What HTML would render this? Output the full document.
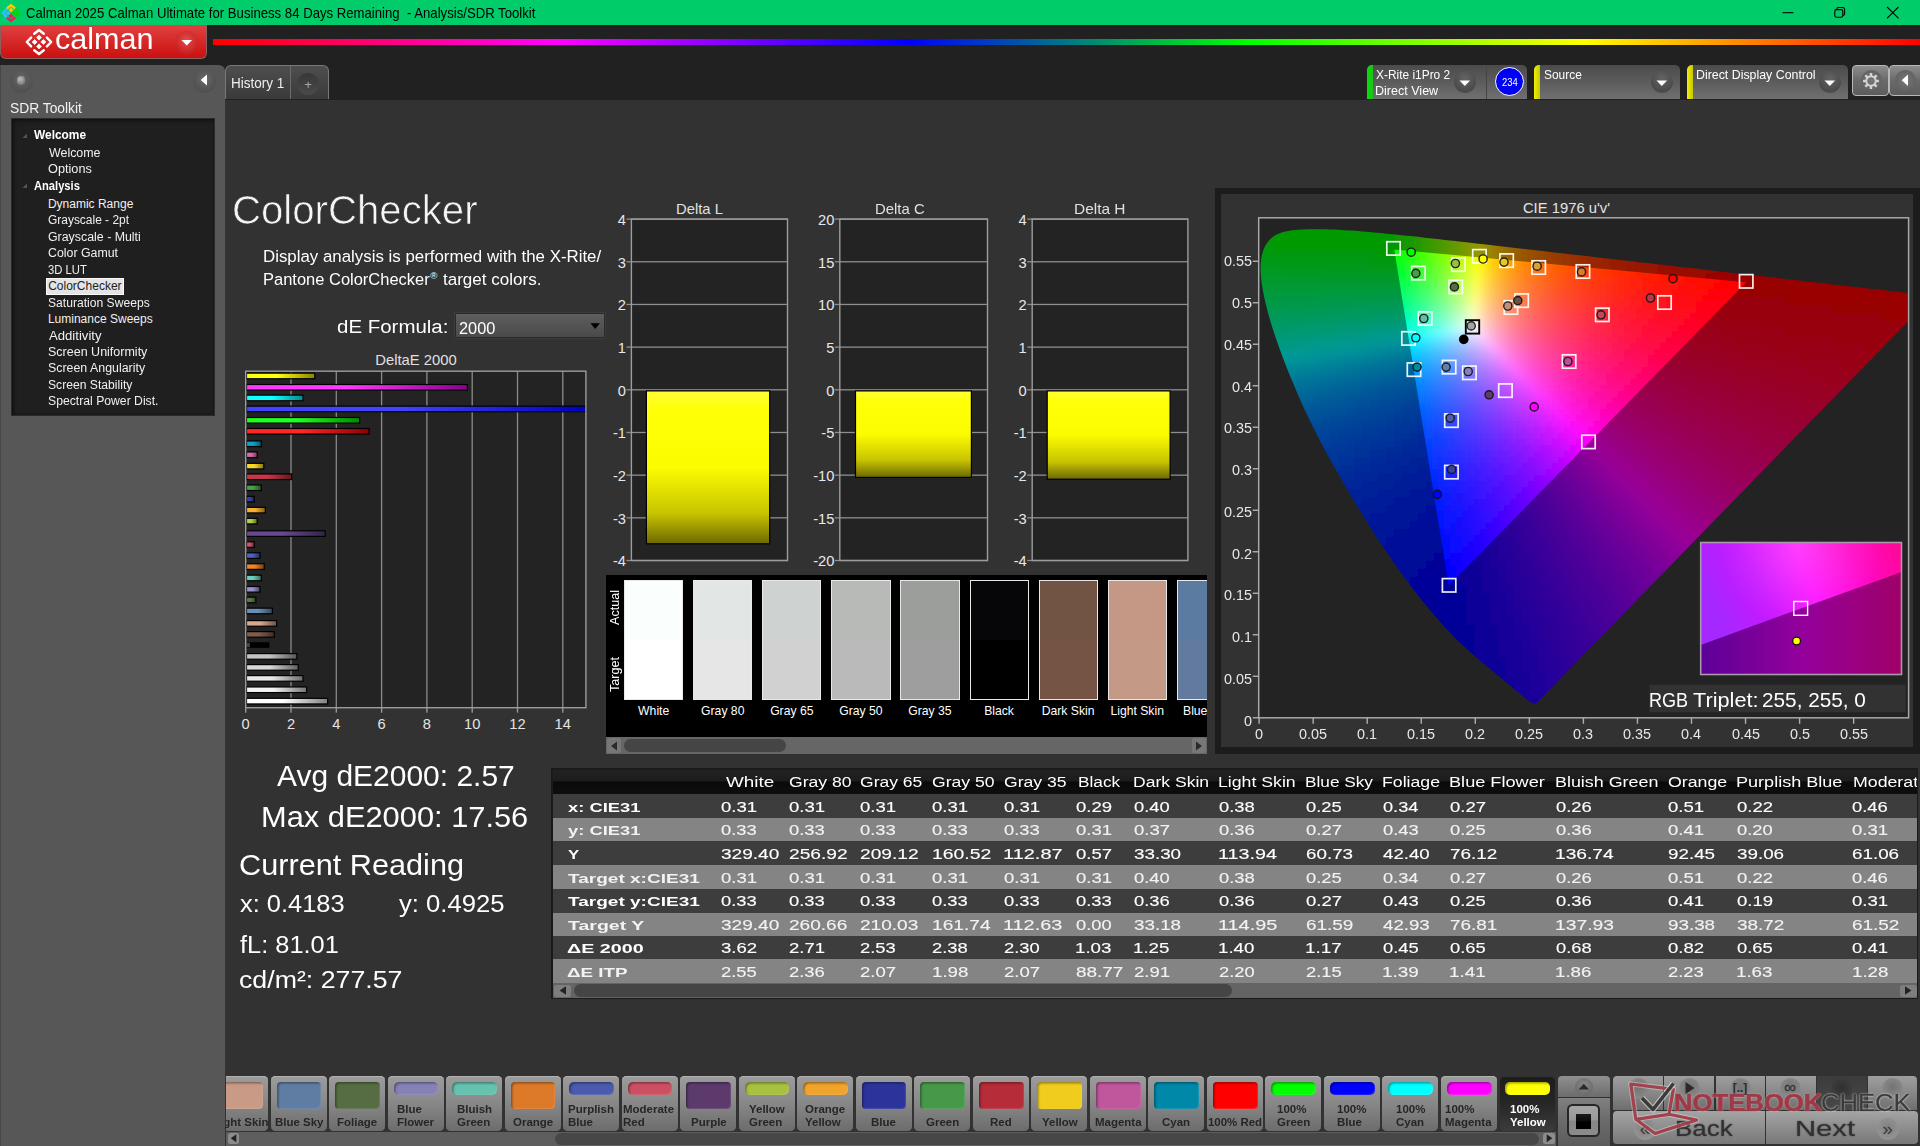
<!DOCTYPE html>
<html lang="en"><head><meta charset="utf-8"><title>Calman - ColorChecker</title>
<style>
*{margin:0;padding:0;box-sizing:border-box}
html,body{width:1920px;height:1146px;overflow:hidden;background:#222;font-family:"Liberation Sans",sans-serif;}
#root{position:absolute;left:0;top:0;width:1920px;height:1146px;overflow:hidden;background:#212121}
#root div,#root span.t,#root svg{position:absolute}
span.t{white-space:pre;transform-origin:0 50%;display:block}
</style></head>
<body><div id="root">
<div style="left:0.00px;top:0.00px;width:1920.00px;height:25.40px;background:#00cc6a"></div>
<svg style="left:0.5px;top:2.8px" width="20" height="20" viewBox="-10 -10 20 20"><g fill="none" stroke-width="2.5" stroke-linecap="round" stroke-linejoin="round"><path d="M-3.6 -4.9L0 -7.9L3.6 -4.9" stroke="#ffc800"/><path d="M-3.6 4.9L0 7.9L3.6 4.9" stroke="#ff1060"/><path d="M-4.9 -3.6L-7.9 0L-4.9 3.6" stroke="#30c0ff"/><path d="M4.9 -3.6L7.9 0L4.9 3.6" stroke="#00d800"/></g><path d="M0 -5.2L2.2 -3L0 -0.8L-2.2 -3Z" fill="#ffc800" stroke="#ffc800" stroke-width=".6" stroke-linejoin="round"/><path d="M0 5.2L2.2 3L0 0.8L-2.2 3Z" fill="#ff1060" stroke="#ff1060" stroke-width=".6" stroke-linejoin="round"/><path d="M-5.2 0L-3 -2.2L-0.8 0L-3 2.2Z" fill="#30c0ff" stroke="#30c0ff" stroke-width=".6" stroke-linejoin="round"/><path d="M5.2 0L3 -2.2L0.8 0L3 2.2Z" fill="#00d800" stroke="#00d800" stroke-width=".6" stroke-linejoin="round"/></svg>
<span class="t" style="left:25.55px;top:5.00px;font-size:14.60px;line-height:16.00px;color:#000;transform:scaleX(0.9015);">Calman 2025 Calman Ultimate for Business 84 Days Remaining  - Analysis/SDR Toolkit</span>
<svg style="left:1770px;top:0" width="150" height="25" viewBox="0 0 150 25" fill="none" stroke="#000" stroke-width="1.1"><path d="M12.5 12.7h11"/><rect x="64.8" y="9.6" width="8" height="7.6" rx="1.7"/><path d="M66.9 9.4v-0.3a1.6 1.6 0 0 1 1.6-1.6h4.3a1.8 1.8 0 0 1 1.8 1.8v4.4a1.6 1.6 0 0 1-1.6 1.6h-0.2"/><path d="M117 6.8l11.6 11.6M128.6 6.8L117 18.4"/></svg>
<div style="left:0.00px;top:25.00px;width:207.00px;height:34.00px;background:linear-gradient(#ee3640 0,#e03e3e 1.5px,#d62828 50%,#cc1010);border:1px solid #8a6060;border-top:none;border-radius:0 0 6px 6px"></div>
<svg style="left:23.6px;top:26.6px" width="30" height="30" viewBox="-15 -15 30 30"><g fill="none" stroke="#fff" stroke-width="2.4" stroke-linecap="round" stroke-linejoin="round"><path d="M-4.8 -8.2L0 -12L4.8 -8.2"/><path d="M-4.8 8.2L0 12L4.8 8.2"/><path d="M-7.9 -4.4L-12.2 0L-7.9 4.4"/><path d="M7.9 -4.4L12.2 0L7.9 4.4"/></g><g fill="#fff" stroke="#fff" stroke-width="0.8" stroke-linejoin="round"><path d="M0 -6.9L2.4 -4.4L0 -1.9L-2.4 -4.4Z"/><path d="M0 6.9L2.4 4.4L0 1.9L-2.4 4.4Z"/><path d="M-6.9 0L-4.4 -2.4L-1.9 0L-4.4 2.4Z"/><path d="M6.9 0L4.4 -2.4L1.9 0L4.4 2.4Z"/></g></svg>
<span class="t" style="left:55.00px;top:22.00px;font-size:29.40px;line-height:33.00px;color:#fff;transform:scaleX(1.0405);">calman</span>
<div style="left:175.00px;top:30.50px;width:23.00px;height:23.00px;border-radius:50%;background:radial-gradient(circle at 50% 40%,#e64a4a,#c82020 75%)"></div>
<svg style="left:180px;top:39px" width="14" height="8"><path d="M1.5 1h10.5l-5.25 5.6z" fill="#fff"/></svg>
<div style="left:213.00px;top:39.00px;width:1707.00px;height:6.00px;background:linear-gradient(90deg,#ff0000 0%,#ff00ff 20.2%,#0000ff 40.7%,#00ff00 60.6%,#ffff00 80.3%,#ff0000 100%)"></div>
<div style="left:225.00px;top:64.80px;width:104.00px;height:33.80px;background:linear-gradient(#4e4e4e,#444 50%,#3a3a3a);border:1.2px solid #787878;border-bottom:none;border-radius:6px 6px 0 0"></div>
<div style="left:289.90px;top:66.00px;width:1.20px;height:32.50px;background:#6c6c6c"></div>
<span class="t" style="left:231.07px;top:75.00px;font-size:14.60px;line-height:16.00px;color:#eee;transform:scaleX(0.9263);">History 1</span>
<div style="left:297.20px;top:73.20px;width:22.00px;height:22.00px;border-radius:50%;background:linear-gradient(#383838,#4a4a4a)"></div>
<span class="t" style="left:304.55px;top:78.00px;font-size:12.50px;line-height:14.00px;color:#a8a8a8;">+</span>
<div style="left:225.00px;top:99.70px;width:1695.00px;height:1046.30px;background:#323232"></div>
<div style="left:1367.00px;top:65.00px;width:160.00px;height:34.00px;background:linear-gradient(#4b4b4b,#5c5c5c 50%,#707070);border-radius:5px 5px 0 0;overflow:hidden"><div style="left:0.00px;top:0.00px;width:6.00px;height:34.00px;background:linear-gradient(90deg,#00e000,#20c020)"></div></div>
<span class="t" style="left:1376.26px;top:68.00px;font-size:12.20px;line-height:14.00px;color:#fff;transform:scaleX(0.9775);">X-Rite i1Pro 2</span>
<span class="t" style="left:1375.48px;top:84.00px;font-size:12.20px;line-height:14.00px;color:#fff;transform:scaleX(1.0288);">Direct View</span>
<div style="left:1454.00px;top:70.70px;width:22.00px;height:22.00px;border-radius:50%;background:radial-gradient(circle at 50% 35%,#646464,#4a4a4a 70%,#585858)"></div>
<svg style="left:1459.2px;top:80.3px" width="12" height="7"><path d="M0.5 0.5h10.6l-5.3 5.6z" fill="#fff"/></svg>
<div style="left:1486.00px;top:68.00px;width:1.00px;height:31.00px;background:#444"></div>
<div style="left:1495.20px;top:66.90px;width:29.00px;height:29.00px;border-radius:50%;background:#0000f4;border:1.3px solid #fff"></div>
<span class="t" style="left:1501.90px;top:77.00px;font-size:10.30px;line-height:11.00px;color:#fff;transform:scaleX(0.9200);">234</span>
<div style="left:1534.00px;top:65.00px;width:146.00px;height:34.00px;background:linear-gradient(#4b4b4b,#5c5c5c 50%,#707070);border-radius:5px 5px 0 0;overflow:hidden"><div style="left:0.00px;top:0.00px;width:6.00px;height:34.00px;background:linear-gradient(90deg,#f0f000,#c8c800)"></div></div>
<span class="t" style="left:1543.51px;top:68.00px;font-size:12.20px;line-height:14.00px;color:#fff;transform:scaleX(0.9777);">Source</span>
<div style="left:1650.70px;top:70.70px;width:22.00px;height:22.00px;border-radius:50%;background:radial-gradient(circle at 50% 35%,#646464,#4a4a4a 70%,#585858)"></div>
<svg style="left:1655.9px;top:80.3px" width="12" height="7"><path d="M0.5 0.5h10.6l-5.3 5.6z" fill="#fff"/></svg>
<div style="left:1687.00px;top:65.00px;width:161.00px;height:34.00px;background:linear-gradient(#4b4b4b,#5c5c5c 50%,#707070);border-radius:5px 5px 0 0;overflow:hidden"><div style="left:0.00px;top:0.00px;width:6.00px;height:34.00px;background:linear-gradient(90deg,#f0f000,#c8c800)"></div></div>
<span class="t" style="left:1696.29px;top:68.00px;font-size:12.20px;line-height:14.00px;color:#fff;transform:scaleX(1.0148);">Direct Display Control</span>
<div style="left:1819.00px;top:70.70px;width:22.00px;height:22.00px;border-radius:50%;background:radial-gradient(circle at 50% 35%,#646464,#4a4a4a 70%,#585858)"></div>
<svg style="left:1824.2px;top:80.3px" width="12" height="7"><path d="M0.5 0.5h10.6l-5.3 5.6z" fill="#fff"/></svg>
<div style="left:1852.00px;top:65.00px;width:37.00px;height:31.00px;background:linear-gradient(#8c8c8c,#6a6a6a 50%,#5c5c5c);border:1px solid #b8b8b8;border-radius:4px"></div>
<div style="left:1889.00px;top:65.00px;width:37.00px;height:31.00px;background:linear-gradient(#8c8c8c,#6a6a6a 50%,#5c5c5c);border:1px solid #b8b8b8;border-radius:4px"></div>
<div style="left:1860.50px;top:70.00px;width:21.00px;height:21.00px;border-radius:50%;background:radial-gradient(circle,#777,#5a5a5a)"></div>
<svg style="left:1861px;top:70.5px" width="20" height="20" viewBox="-10 -10 20 20"><g fill="#d4d4d4"><rect x="-1.25" y="-8" width="2.5" height="3" rx="0.5" transform="rotate(0)"/><rect x="-1.25" y="-8" width="2.5" height="3" rx="0.5" transform="rotate(45)"/><rect x="-1.25" y="-8" width="2.5" height="3" rx="0.5" transform="rotate(90)"/><rect x="-1.25" y="-8" width="2.5" height="3" rx="0.5" transform="rotate(135)"/><rect x="-1.25" y="-8" width="2.5" height="3" rx="0.5" transform="rotate(180)"/><rect x="-1.25" y="-8" width="2.5" height="3" rx="0.5" transform="rotate(225)"/><rect x="-1.25" y="-8" width="2.5" height="3" rx="0.5" transform="rotate(270)"/><rect x="-1.25" y="-8" width="2.5" height="3" rx="0.5" transform="rotate(315)"/></g><circle r="4.7" fill="none" stroke="#d4d4d4" stroke-width="1.9"/></svg>
<div style="left:1895.00px;top:70.00px;width:21.00px;height:21.00px;border-radius:50%;background:radial-gradient(circle,#777,#5a5a5a)"></div>
<svg style="left:1901px;top:74px" width="8" height="13"><path d="M7 0.5v11.5l-6.3-5.75z" fill="#fff"/></svg>
<div style="left:0.00px;top:65.00px;width:224.50px;height:1081.00px;background:#575757;border-radius:0 6px 0 0;border-left:1.5px solid #474747"></div>
<div style="left:10.00px;top:70.00px;width:23.00px;height:23.00px;border-radius:50%;background:radial-gradient(circle at 50% 40%,#666,#505050 70%,#575757)"></div>
<div style="left:16.50px;top:76.00px;width:8.50px;height:8.50px;border-radius:50%;background:radial-gradient(circle at 40% 35%,#bbb,#888 60%,#666)"></div>
<div style="left:193.00px;top:70.00px;width:23.00px;height:23.00px;border-radius:50%;background:radial-gradient(circle at 50% 40%,#686868,#505050 70%,#575757)"></div>
<svg style="left:200px;top:74px" width="8" height="13"><path d="M7 0.5v11l-6.3-5.5z" fill="#fff"/></svg>
<span class="t" style="left:9.82px;top:100.00px;font-size:14.60px;line-height:16.00px;color:#f2f2f2;transform:scaleX(0.9468);">SDR Toolkit</span>
<div style="left:10.70px;top:118.00px;width:204.30px;height:298.00px;background:#1f1f1f;box-shadow:inset 2px 2px 3px #111, inset -1px -1px 2px #1a1a1a;border:1px solid #2a2a2a"></div>
<span class="t" style="left:34.20px;top:128.00px;font-size:12.00px;line-height:14.00px;color:#fff;font-weight:bold;transform:scaleX(0.9914);">Welcome</span>
<svg style="left:21.5px;top:132.5px" width="6" height="6"><path d="M5 0.5v4.5h-4.5z" fill="#555"/></svg>
<span class="t" style="left:48.70px;top:146.00px;font-size:12.00px;line-height:14.00px;color:#f0f0f0;transform:scaleX(1.0343);">Welcome</span>
<span class="t" style="left:48.17px;top:162.00px;font-size:12.00px;line-height:14.00px;color:#f0f0f0;transform:scaleX(1.0593);">Options</span>
<span class="t" style="left:33.97px;top:179.00px;font-size:12.00px;line-height:14.00px;color:#fff;font-weight:bold;transform:scaleX(0.9292);">Analysis</span>
<svg style="left:21.5px;top:183.3px" width="6" height="6"><path d="M5 0.5v4.5h-4.5z" fill="#555"/></svg>
<span class="t" style="left:47.95px;top:197.00px;font-size:12.00px;line-height:14.00px;color:#f0f0f0;">Dynamic Range</span>
<span class="t" style="left:48.20px;top:213.00px;font-size:12.00px;line-height:14.00px;color:#f0f0f0;transform:scaleX(0.9957);">Grayscale - 2pt</span>
<span class="t" style="left:48.18px;top:230.00px;font-size:12.00px;line-height:14.00px;color:#f0f0f0;transform:scaleX(1.0310);">Grayscale - Multi</span>
<span class="t" style="left:48.19px;top:246.00px;font-size:12.00px;line-height:14.00px;color:#f0f0f0;transform:scaleX(1.0296);">Color Gamut</span>
<span class="t" style="left:48.47px;top:263.00px;font-size:12.00px;line-height:14.00px;color:#f0f0f0;transform:scaleX(0.9390);">3D LUT</span>
<div style="left:46.30px;top:278.10px;width:77.70px;height:16.60px;background:#e4e4e4;border:1px solid #fafafa"></div>
<span class="t" style="left:48.20px;top:279.00px;font-size:12.00px;line-height:14.00px;color:#222;">ColorChecker</span>
<span class="t" style="left:48.20px;top:296.00px;font-size:12.00px;line-height:14.00px;color:#f0f0f0;transform:scaleX(1.0100);">Saturation Sweeps</span>
<span class="t" style="left:47.95px;top:312.00px;font-size:12.00px;line-height:14.00px;color:#f0f0f0;">Luminance Sweeps</span>
<span class="t" style="left:48.70px;top:329.00px;font-size:12.00px;line-height:14.00px;color:#f0f0f0;transform:scaleX(1.0938);">Additivity</span>
<span class="t" style="left:48.18px;top:345.00px;font-size:12.00px;line-height:14.00px;color:#f0f0f0;transform:scaleX(1.0421);">Screen Uniformity</span>
<span class="t" style="left:48.18px;top:361.00px;font-size:12.00px;line-height:14.00px;color:#f0f0f0;transform:scaleX(1.0321);">Screen Angularity</span>
<span class="t" style="left:48.19px;top:378.00px;font-size:12.00px;line-height:14.00px;color:#f0f0f0;transform:scaleX(1.0120);">Screen Stability</span>
<span class="t" style="left:48.19px;top:394.00px;font-size:12.00px;line-height:14.00px;color:#f0f0f0;transform:scaleX(1.0163);">Spectral Power Dist.</span>
<span class="t" style="left:232.42px;top:187.00px;font-size:40.50px;line-height:46.00px;color:#f6f6f6;transform:scaleX(0.9918);-webkit-text-stroke:0.7px #323232;">ColorChecker</span>
<span class="t" style="left:262.90px;top:247.00px;font-size:16.30px;line-height:18.00px;color:#fff;transform:scaleX(1.0353);">Display analysis is performed with the X-Rite/</span>
<span class="t" style="left:262.93px;top:270.00px;font-size:16.30px;line-height:18.00px;color:#fff;transform:scaleX(1.0122);">Pantone ColorChecker</span>
<span class="t" style="left:430.20px;top:270.00px;font-size:9.60px;line-height:11.00px;color:#fff;">®</span>
<span class="t" style="left:443.30px;top:270.00px;font-size:16.30px;line-height:18.00px;color:#fff;transform:scaleX(1.0458);">target colors.</span>
<span class="t" style="left:336.70px;top:316.00px;font-size:19.20px;line-height:21.00px;color:#fff;transform:scaleX(1.0662);">dE Formula:</span>
<div style="left:455.20px;top:313.30px;width:150.00px;height:24.70px;background:linear-gradient(#5e5e5e,#4a4a4a);border:1px solid #2a2a2a;box-shadow:0 0 0 1px #3c3c3c"></div>
<span class="t" style="left:459.26px;top:319.00px;font-size:16.60px;line-height:19.00px;color:#fff;transform:scaleX(0.9856);">2000</span>
<svg style="left:590px;top:323px" width="11" height="7"><path d="M0.5 0.3h9.4l-4.7 5.6z" fill="#000"/></svg>
<span class="t" style="left:375.28px;top:352.00px;font-size:14.80px;line-height:16.00px;color:#e0e0e0;">DeltaE 2000</span>
<svg style="left:0;top:0" width="1920" height="1146" viewBox="0 0 1920 1146"><defs><linearGradient id="bg0"><stop offset="0" stop-color="#ffff10"/><stop offset="0.45" stop-color="#ffff10"/><stop offset="1" stop-color="#8a8400"/></linearGradient><linearGradient id="bg1"><stop offset="0" stop-color="#ff38ff"/><stop offset="0.45" stop-color="#ff38ff"/><stop offset="1" stop-color="#8c008c"/></linearGradient><linearGradient id="bg2"><stop offset="0" stop-color="#10ffff"/><stop offset="0.45" stop-color="#10ffff"/><stop offset="1" stop-color="#008c8c"/></linearGradient><linearGradient id="bg3"><stop offset="0" stop-color="#4444ff"/><stop offset="0.45" stop-color="#4444ff"/><stop offset="1" stop-color="#0000c0"/></linearGradient><linearGradient id="bg4"><stop offset="0" stop-color="#20ff20"/><stop offset="0.45" stop-color="#20ff20"/><stop offset="1" stop-color="#008c00"/></linearGradient><linearGradient id="bg5"><stop offset="0" stop-color="#ff2828"/><stop offset="0.45" stop-color="#ff2828"/><stop offset="1" stop-color="#8c0000"/></linearGradient><linearGradient id="bg6"><stop offset="0" stop-color="#10a0c8"/><stop offset="0.45" stop-color="#10a0c8"/><stop offset="1" stop-color="#005870"/></linearGradient><linearGradient id="bg7"><stop offset="0" stop-color="#d868b0"/><stop offset="0.45" stop-color="#d868b0"/><stop offset="1" stop-color="#783860"/></linearGradient><linearGradient id="bg8"><stop offset="0" stop-color="#f8d828"/><stop offset="0.45" stop-color="#f8d828"/><stop offset="1" stop-color="#887410"/></linearGradient><linearGradient id="bg9"><stop offset="0" stop-color="#c83848"/><stop offset="0.45" stop-color="#c83848"/><stop offset="1" stop-color="#681820"/></linearGradient><linearGradient id="bg10"><stop offset="0" stop-color="#48a048"/><stop offset="0.45" stop-color="#48a048"/><stop offset="1" stop-color="#245024"/></linearGradient><linearGradient id="bg11"><stop offset="0" stop-color="#3840a8"/><stop offset="0.45" stop-color="#3840a8"/><stop offset="1" stop-color="#1c2058"/></linearGradient><linearGradient id="bg12"><stop offset="0" stop-color="#f8b030"/><stop offset="0.45" stop-color="#f8b030"/><stop offset="1" stop-color="#885c10"/></linearGradient><linearGradient id="bg13"><stop offset="0" stop-color="#b0d048"/><stop offset="0.45" stop-color="#b0d048"/><stop offset="1" stop-color="#586820"/></linearGradient><linearGradient id="bg14"><stop offset="0" stop-color="#684890"/><stop offset="0.45" stop-color="#684890"/><stop offset="1" stop-color="#342448"/></linearGradient><linearGradient id="bg15"><stop offset="0" stop-color="#d05068"/><stop offset="0.45" stop-color="#d05068"/><stop offset="1" stop-color="#682834"/></linearGradient><linearGradient id="bg16"><stop offset="0" stop-color="#5060c0"/><stop offset="0.45" stop-color="#5060c0"/><stop offset="1" stop-color="#283060"/></linearGradient><linearGradient id="bg17"><stop offset="0" stop-color="#f08428"/><stop offset="0.45" stop-color="#f08428"/><stop offset="1" stop-color="#784010"/></linearGradient><linearGradient id="bg18"><stop offset="0" stop-color="#68d0b8"/><stop offset="0.45" stop-color="#68d0b8"/><stop offset="1" stop-color="#34685c"/></linearGradient><linearGradient id="bg19"><stop offset="0" stop-color="#9890d0"/><stop offset="0.45" stop-color="#9890d0"/><stop offset="1" stop-color="#4c4868"/></linearGradient><linearGradient id="bg20"><stop offset="0" stop-color="#607848"/><stop offset="0.45" stop-color="#607848"/><stop offset="1" stop-color="#303c24"/></linearGradient><linearGradient id="bg21"><stop offset="0" stop-color="#6890b8"/><stop offset="0.45" stop-color="#6890b8"/><stop offset="1" stop-color="#34485c"/></linearGradient><linearGradient id="bg22"><stop offset="0" stop-color="#d8a890"/><stop offset="0.45" stop-color="#d8a890"/><stop offset="1" stop-color="#6c5448"/></linearGradient><linearGradient id="bg23"><stop offset="0" stop-color="#805c4c"/><stop offset="0.45" stop-color="#805c4c"/><stop offset="1" stop-color="#402e26"/></linearGradient><linearGradient id="bg24"><stop offset="0" stop-color="#383838"/><stop offset="0.45" stop-color="#383838"/><stop offset="1" stop-color="#000000"/></linearGradient><linearGradient id="bg25"><stop offset="0" stop-color="#c4c4c4"/><stop offset="0.45" stop-color="#c4c4c4"/><stop offset="1" stop-color="#585858"/></linearGradient><linearGradient id="bg26"><stop offset="0" stop-color="#d8d8d8"/><stop offset="0.45" stop-color="#d8d8d8"/><stop offset="1" stop-color="#606060"/></linearGradient><linearGradient id="bg27"><stop offset="0" stop-color="#e8e8e8"/><stop offset="0.45" stop-color="#e8e8e8"/><stop offset="1" stop-color="#6c6c6c"/></linearGradient><linearGradient id="bg28"><stop offset="0" stop-color="#f4f4f4"/><stop offset="0.45" stop-color="#f4f4f4"/><stop offset="1" stop-color="#747474"/></linearGradient><linearGradient id="bg29"><stop offset="0" stop-color="#ffffff"/><stop offset="0.45" stop-color="#ffffff"/><stop offset="1" stop-color="#808080"/></linearGradient></defs><rect x="245.7" y="371.2" width="340.2" height="336.5" fill="#232323"/><rect x="290.35" y="371.2" width="1.3" height="336.5" fill="#8a8a8a"/><rect x="335.65" y="371.2" width="1.3" height="336.5" fill="#8a8a8a"/><rect x="380.95" y="371.2" width="1.3" height="336.5" fill="#8a8a8a"/><rect x="426.25" y="371.2" width="1.3" height="336.5" fill="#8a8a8a"/><rect x="471.55" y="371.2" width="1.3" height="336.5" fill="#8a8a8a"/><rect x="516.85" y="371.2" width="1.3" height="336.5" fill="#8a8a8a"/><rect x="562.15" y="371.2" width="1.3" height="336.5" fill="#8a8a8a"/><rect x="246.50" y="373.13" width="68.26" height="5.6" fill="url(#bg0)" stroke="#000" stroke-width="1.2"/><rect x="246.50" y="384.50" width="220.92" height="5.6" fill="url(#bg1)" stroke="#000" stroke-width="1.2"/><rect x="246.50" y="395.13" width="56.48" height="5.6" fill="url(#bg2)" stroke="#000" stroke-width="1.2"/><rect x="246.50" y="406.13" width="339.15" height="5.6" fill="url(#bg3)" stroke="#000" stroke-width="1.2"/><rect x="246.50" y="417.49" width="113.10" height="5.6" fill="url(#bg4)" stroke="#000" stroke-width="1.2"/><rect x="246.50" y="428.49" width="122.62" height="5.6" fill="url(#bg5)" stroke="#000" stroke-width="1.2"/><rect x="246.50" y="440.96" width="14.80" height="5.6" fill="url(#bg6)" stroke="#000" stroke-width="1.2"/><rect x="246.50" y="451.96" width="10.72" height="5.6" fill="url(#bg7)" stroke="#000" stroke-width="1.2"/><rect x="246.50" y="463.32" width="17.29" height="5.6" fill="url(#bg8)" stroke="#000" stroke-width="1.2"/><rect x="246.50" y="473.96" width="45.15" height="5.6" fill="url(#bg9)" stroke="#000" stroke-width="1.2"/><rect x="246.50" y="484.95" width="14.80" height="5.6" fill="url(#bg10)" stroke="#000" stroke-width="1.2"/><rect x="246.50" y="496.32" width="7.78" height="5.6" fill="url(#bg11)" stroke="#000" stroke-width="1.2"/><rect x="246.50" y="507.32" width="18.88" height="5.6" fill="url(#bg12)" stroke="#000" stroke-width="1.2"/><rect x="246.50" y="518.32" width="10.72" height="5.6" fill="url(#bg13)" stroke="#000" stroke-width="1.2"/><rect x="246.50" y="530.78" width="78.67" height="5.6" fill="url(#bg14)" stroke="#000" stroke-width="1.2"/><rect x="246.50" y="541.78" width="7.78" height="5.6" fill="url(#bg15)" stroke="#000" stroke-width="1.2"/><rect x="246.50" y="552.78" width="13.44" height="5.6" fill="url(#bg16)" stroke="#000" stroke-width="1.2"/><rect x="246.50" y="563.78" width="17.75" height="5.6" fill="url(#bg17)" stroke="#000" stroke-width="1.2"/><rect x="246.50" y="575.15" width="14.80" height="5.6" fill="url(#bg18)" stroke="#000" stroke-width="1.2"/><rect x="246.50" y="586.51" width="13.44" height="5.6" fill="url(#bg19)" stroke="#000" stroke-width="1.2"/><rect x="246.50" y="597.15" width="9.37" height="5.6" fill="url(#bg20)" stroke="#000" stroke-width="1.2"/><rect x="246.50" y="608.14" width="25.90" height="5.6" fill="url(#bg21)" stroke="#000" stroke-width="1.2"/><rect x="246.50" y="620.61" width="30.20" height="5.6" fill="url(#bg22)" stroke="#000" stroke-width="1.2"/><rect x="246.50" y="631.61" width="27.71" height="5.6" fill="url(#bg23)" stroke="#000" stroke-width="1.2"/><rect x="246.30" y="642.24" width="23.10" height="5.6" fill="#000"/><rect x="246.50" y="642.84" width="3.4" height="4.4" fill="#444"/><rect x="246.50" y="653.61" width="50.36" height="5.6" fill="url(#bg25)" stroke="#000" stroke-width="1.2"/><rect x="246.50" y="664.61" width="51.72" height="5.6" fill="url(#bg26)" stroke="#000" stroke-width="1.2"/><rect x="246.50" y="675.61" width="56.48" height="5.6" fill="url(#bg27)" stroke="#000" stroke-width="1.2"/><rect x="246.50" y="686.97" width="60.10" height="5.6" fill="url(#bg28)" stroke="#000" stroke-width="1.2"/><rect x="246.50" y="698.34" width="81.17" height="5.6" fill="url(#bg29)" stroke="#000" stroke-width="1.2"/><rect x="245.70" y="371.20" width="340.20" height="336.50" fill="none" stroke="#9c9c9c" stroke-width="1.4"/><rect x="245.05" y="707.7" width="1.3" height="5" fill="#9c9c9c"/><rect x="290.35" y="707.7" width="1.3" height="5" fill="#9c9c9c"/><rect x="335.65" y="707.7" width="1.3" height="5" fill="#9c9c9c"/><rect x="380.95" y="707.7" width="1.3" height="5" fill="#9c9c9c"/><rect x="426.25" y="707.7" width="1.3" height="5" fill="#9c9c9c"/><rect x="471.55" y="707.7" width="1.3" height="5" fill="#9c9c9c"/><rect x="516.85" y="707.7" width="1.3" height="5" fill="#9c9c9c"/><rect x="562.15" y="707.7" width="1.3" height="5" fill="#9c9c9c"/></svg>
<span class="t" style="left:241.61px;top:716.00px;font-size:14.70px;line-height:16.00px;color:#e4e4e4;">0</span>
<span class="t" style="left:286.91px;top:716.00px;font-size:14.70px;line-height:16.00px;color:#e4e4e4;">2</span>
<span class="t" style="left:332.21px;top:716.00px;font-size:14.70px;line-height:16.00px;color:#e4e4e4;">4</span>
<span class="t" style="left:377.51px;top:716.00px;font-size:14.70px;line-height:16.00px;color:#e4e4e4;">6</span>
<span class="t" style="left:422.81px;top:716.00px;font-size:14.70px;line-height:16.00px;color:#e4e4e4;">8</span>
<span class="t" style="left:464.02px;top:716.00px;font-size:14.70px;line-height:16.00px;color:#e4e4e4;">10</span>
<span class="t" style="left:509.32px;top:716.00px;font-size:14.70px;line-height:16.00px;color:#e4e4e4;">12</span>
<span class="t" style="left:554.62px;top:716.00px;font-size:14.70px;line-height:16.00px;color:#e4e4e4;">14</span>
<svg style="left:0;top:0" width="1920" height="1146" viewBox="0 0 1920 1146"><defs><linearGradient id="gL" x1="0" y1="0" x2="0" y2="1"><stop offset="0" stop-color="#ffff38"/><stop offset="0.12" stop-color="#ffff08"/><stop offset="0.5" stop-color="#fcfc00"/><stop offset="0.8" stop-color="#c8c400"/><stop offset="1" stop-color="#6c6800"/></linearGradient></defs><rect x="631.4" y="219.1" width="156.1" height="341.4" fill="#232323"/><rect x="626.4" y="218.45" width="161.1" height="1.3" fill="#8e8e8e"/><rect x="626.4" y="261.12" width="161.1" height="1.3" fill="#8e8e8e"/><rect x="626.4" y="303.80" width="161.1" height="1.3" fill="#8e8e8e"/><rect x="626.4" y="346.48" width="161.1" height="1.3" fill="#8e8e8e"/><rect x="626.4" y="389.15" width="161.1" height="1.3" fill="#8e8e8e"/><rect x="626.4" y="431.83" width="161.1" height="1.3" fill="#8e8e8e"/><rect x="626.4" y="474.50" width="161.1" height="1.3" fill="#8e8e8e"/><rect x="626.4" y="517.17" width="161.1" height="1.3" fill="#8e8e8e"/><rect x="626.4" y="559.85" width="161.1" height="1.3" fill="#8e8e8e"/><rect x="631.40" y="219.10" width="156.10" height="341.40" fill="none" stroke="#9c9c9c" stroke-width="1.4"/><rect x="646.40" y="390.90" width="123.30" height="152.90" fill="url(#gL)" stroke="#000" stroke-width="1.2"/></svg>
<span class="t" style="left:676.06px;top:201.00px;font-size:14.80px;line-height:16.00px;color:#e0e0e0;">Delta L</span>
<span class="t" style="left:617.82px;top:212.00px;font-size:14.70px;line-height:16.00px;color:#e8e8e8;">4</span>
<span class="t" style="left:617.82px;top:255.00px;font-size:14.70px;line-height:16.00px;color:#e8e8e8;">3</span>
<span class="t" style="left:617.82px;top:297.00px;font-size:14.70px;line-height:16.00px;color:#e8e8e8;">2</span>
<span class="t" style="left:617.82px;top:340.00px;font-size:14.70px;line-height:16.00px;color:#e8e8e8;">1</span>
<span class="t" style="left:617.82px;top:383.00px;font-size:14.70px;line-height:16.00px;color:#e8e8e8;">0</span>
<span class="t" style="left:612.93px;top:425.00px;font-size:14.70px;line-height:16.00px;color:#e8e8e8;">-1</span>
<span class="t" style="left:612.93px;top:468.00px;font-size:14.70px;line-height:16.00px;color:#e8e8e8;">-2</span>
<span class="t" style="left:612.93px;top:511.00px;font-size:14.70px;line-height:16.00px;color:#e8e8e8;">-3</span>
<span class="t" style="left:612.93px;top:553.00px;font-size:14.70px;line-height:16.00px;color:#e8e8e8;">-4</span>
<svg style="left:0;top:0" width="1920" height="1146" viewBox="0 0 1920 1146"><defs><linearGradient id="gC" x1="0" y1="0" x2="0" y2="1"><stop offset="0" stop-color="#ffff38"/><stop offset="0.12" stop-color="#ffff08"/><stop offset="0.5" stop-color="#fcfc00"/><stop offset="0.8" stop-color="#c8c400"/><stop offset="1" stop-color="#6c6800"/></linearGradient></defs><rect x="839.8" y="219.1" width="147.7" height="341.4" fill="#232323"/><rect x="834.8" y="218.45" width="152.7" height="1.3" fill="#8e8e8e"/><rect x="834.8" y="261.12" width="152.7" height="1.3" fill="#8e8e8e"/><rect x="834.8" y="303.80" width="152.7" height="1.3" fill="#8e8e8e"/><rect x="834.8" y="346.48" width="152.7" height="1.3" fill="#8e8e8e"/><rect x="834.8" y="389.15" width="152.7" height="1.3" fill="#8e8e8e"/><rect x="834.8" y="431.83" width="152.7" height="1.3" fill="#8e8e8e"/><rect x="834.8" y="474.50" width="152.7" height="1.3" fill="#8e8e8e"/><rect x="834.8" y="517.17" width="152.7" height="1.3" fill="#8e8e8e"/><rect x="834.8" y="559.85" width="152.7" height="1.3" fill="#8e8e8e"/><rect x="839.80" y="219.10" width="147.70" height="341.40" fill="none" stroke="#9c9c9c" stroke-width="1.4"/><rect x="855.50" y="390.90" width="115.90" height="86.50" fill="url(#gC)" stroke="#000" stroke-width="1.2"/></svg>
<span class="t" style="left:874.68px;top:201.00px;font-size:14.80px;line-height:16.00px;color:#e0e0e0;transform:scaleX(1.0060);">Delta C</span>
<span class="t" style="left:818.05px;top:212.00px;font-size:14.70px;line-height:16.00px;color:#e8e8e8;">20</span>
<span class="t" style="left:818.05px;top:255.00px;font-size:14.70px;line-height:16.00px;color:#e8e8e8;">15</span>
<span class="t" style="left:818.05px;top:297.00px;font-size:14.70px;line-height:16.00px;color:#e8e8e8;">10</span>
<span class="t" style="left:826.22px;top:340.00px;font-size:14.70px;line-height:16.00px;color:#e8e8e8;">5</span>
<span class="t" style="left:826.22px;top:383.00px;font-size:14.70px;line-height:16.00px;color:#e8e8e8;">0</span>
<span class="t" style="left:821.33px;top:425.00px;font-size:14.70px;line-height:16.00px;color:#e8e8e8;">-5</span>
<span class="t" style="left:813.16px;top:468.00px;font-size:14.70px;line-height:16.00px;color:#e8e8e8;">-10</span>
<span class="t" style="left:813.16px;top:511.00px;font-size:14.70px;line-height:16.00px;color:#e8e8e8;">-15</span>
<span class="t" style="left:813.16px;top:553.00px;font-size:14.70px;line-height:16.00px;color:#e8e8e8;">-20</span>
<svg style="left:0;top:0" width="1920" height="1146" viewBox="0 0 1920 1146"><defs><linearGradient id="gH" x1="0" y1="0" x2="0" y2="1"><stop offset="0" stop-color="#ffff38"/><stop offset="0.12" stop-color="#ffff08"/><stop offset="0.5" stop-color="#fcfc00"/><stop offset="0.8" stop-color="#c8c400"/><stop offset="1" stop-color="#6c6800"/></linearGradient></defs><rect x="1032.2" y="219.1" width="155.7" height="341.4" fill="#232323"/><rect x="1027.2" y="218.45" width="160.7" height="1.3" fill="#8e8e8e"/><rect x="1027.2" y="261.12" width="160.7" height="1.3" fill="#8e8e8e"/><rect x="1027.2" y="303.80" width="160.7" height="1.3" fill="#8e8e8e"/><rect x="1027.2" y="346.48" width="160.7" height="1.3" fill="#8e8e8e"/><rect x="1027.2" y="389.15" width="160.7" height="1.3" fill="#8e8e8e"/><rect x="1027.2" y="431.83" width="160.7" height="1.3" fill="#8e8e8e"/><rect x="1027.2" y="474.50" width="160.7" height="1.3" fill="#8e8e8e"/><rect x="1027.2" y="517.17" width="160.7" height="1.3" fill="#8e8e8e"/><rect x="1027.2" y="559.85" width="160.7" height="1.3" fill="#8e8e8e"/><rect x="1032.20" y="219.10" width="155.70" height="341.40" fill="none" stroke="#9c9c9c" stroke-width="1.4"/><rect x="1047.20" y="390.90" width="122.90" height="88.30" fill="url(#gH)" stroke="#000" stroke-width="1.2"/></svg>
<span class="t" style="left:1074.16px;top:201.00px;font-size:14.80px;line-height:16.00px;color:#e0e0e0;transform:scaleX(1.0433);">Delta H</span>
<span class="t" style="left:1018.62px;top:212.00px;font-size:14.70px;line-height:16.00px;color:#e8e8e8;">4</span>
<span class="t" style="left:1018.62px;top:255.00px;font-size:14.70px;line-height:16.00px;color:#e8e8e8;">3</span>
<span class="t" style="left:1018.62px;top:297.00px;font-size:14.70px;line-height:16.00px;color:#e8e8e8;">2</span>
<span class="t" style="left:1018.62px;top:340.00px;font-size:14.70px;line-height:16.00px;color:#e8e8e8;">1</span>
<span class="t" style="left:1018.62px;top:383.00px;font-size:14.70px;line-height:16.00px;color:#e8e8e8;">0</span>
<span class="t" style="left:1013.73px;top:425.00px;font-size:14.70px;line-height:16.00px;color:#e8e8e8;">-1</span>
<span class="t" style="left:1013.73px;top:468.00px;font-size:14.70px;line-height:16.00px;color:#e8e8e8;">-2</span>
<span class="t" style="left:1013.73px;top:511.00px;font-size:14.70px;line-height:16.00px;color:#e8e8e8;">-3</span>
<span class="t" style="left:1013.73px;top:553.00px;font-size:14.70px;line-height:16.00px;color:#e8e8e8;">-4</span>
<div style="left:605.80px;top:574.50px;width:601.20px;height:179.20px;background:#000;overflow:hidden"></div>
<div style="left:624.20px;top:580.30px;width:59.10px;height:119.50px;background:linear-gradient(#fafffd 50%,#ffffff 50%);border:1px solid #e8e8e8;"></div>
<span class="t" style="left:638.11px;top:704.00px;font-size:12.20px;line-height:14.00px;color:#fff;">White</span>
<div style="left:693.27px;top:580.30px;width:59.10px;height:119.50px;background:linear-gradient(#e2e6e4 50%,#e6e6e6 50%);border:1px solid #e8e8e8;"></div>
<span class="t" style="left:701.07px;top:704.00px;font-size:12.20px;line-height:14.00px;color:#fff;">Gray 80</span>
<div style="left:762.34px;top:580.30px;width:59.10px;height:119.50px;background:linear-gradient(#ced2d0 50%,#d1d1d1 50%);border:1px solid #e8e8e8;"></div>
<span class="t" style="left:770.14px;top:704.00px;font-size:12.20px;line-height:14.00px;color:#fff;">Gray 65</span>
<div style="left:831.41px;top:580.30px;width:59.10px;height:119.50px;background:linear-gradient(#b8bab8 50%,#bababa 50%);border:1px solid #e8e8e8;"></div>
<span class="t" style="left:839.21px;top:704.00px;font-size:12.20px;line-height:14.00px;color:#fff;">Gray 50</span>
<div style="left:900.48px;top:580.30px;width:59.10px;height:119.50px;background:linear-gradient(#9c9e9c 50%,#9e9e9e 50%);border:1px solid #e8e8e8;"></div>
<span class="t" style="left:908.28px;top:704.00px;font-size:12.20px;line-height:14.00px;color:#fff;">Gray 35</span>
<div style="left:969.55px;top:580.30px;width:59.10px;height:119.50px;background:linear-gradient(#060608 50%,#000000 50%);border:1px solid #e8e8e8;"></div>
<span class="t" style="left:984.13px;top:704.00px;font-size:12.20px;line-height:14.00px;color:#fff;">Black</span>
<div style="left:1038.62px;top:580.30px;width:59.10px;height:119.50px;background:linear-gradient(#725444 50%,#755446 50%);border:1px solid #e8e8e8;"></div>
<span class="t" style="left:1041.68px;top:704.00px;font-size:12.20px;line-height:14.00px;color:#fff;">Dark Skin</span>
<div style="left:1107.69px;top:580.30px;width:59.10px;height:119.50px;background:linear-gradient(#c49884 50%,#c49986 50%);border:1px solid #e8e8e8;"></div>
<span class="t" style="left:1110.40px;top:704.00px;font-size:12.20px;line-height:14.00px;color:#fff;">Light Skin</span>
<div style="left:1176.76px;top:580.30px;width:30.24px;height:119.50px;background:linear-gradient(#5c7ba1 50%,#627a9d 50%);border:1px solid #e8e8e8;border-right:none;"></div>
<span class="t" style="left:1183.00px;top:704.00px;font-size:12.20px;line-height:14.00px;color:#fff;">Blue</span>
<span class="t" style="left:608px;top:589px;width:15px;height:36px;font-size:12.6px;color:#fff;writing-mode:vertical-rl;transform:rotate(180deg);transform-origin:50% 50%;line-height:15px;text-align:center">Actual</span>
<span class="t" style="left:608px;top:656px;width:15px;height:36px;font-size:12.6px;color:#fff;writing-mode:vertical-rl;transform:rotate(180deg);transform-origin:50% 50%;line-height:15px;text-align:center">Target</span>
<div style="left:605.80px;top:737.00px;width:601.20px;height:16.70px;background:#666"></div>
<div style="left:624.20px;top:738.50px;width:161.50px;height:13.70px;background:#454545;border-radius:7px"></div>
<div style="left:606.50px;top:738.00px;width:14.50px;height:14.70px;background:#777;border-radius:2px"></div>
<div style="left:1191.50px;top:738.00px;width:14.50px;height:14.70px;background:#777;border-radius:2px"></div>
<svg style="left:610px;top:740.5px" width="8" height="10"><path d="M7 0.5v9l-6-4.5z" fill="#2a2a2a"/></svg>
<svg style="left:1195px;top:740.5px" width="8" height="10"><path d="M1 0.5v9l6-4.5z" fill="#2a2a2a"/></svg>
<span class="t" style="left:276.90px;top:760.00px;font-size:28.60px;line-height:32.00px;color:#fff;transform:scaleX(1.0482);">Avg dE2000: 2.57</span>
<span class="t" style="left:261.47px;top:801.00px;font-size:28.60px;line-height:32.00px;color:#fff;transform:scaleX(1.0777);">Max dE2000: 17.56</span>
<span class="t" style="left:238.95px;top:849.00px;font-size:28.60px;line-height:32.00px;color:#fff;transform:scaleX(1.0726);">Current Reading</span>
<span class="t" style="left:240.04px;top:890.00px;font-size:24.40px;line-height:27.00px;color:#fff;transform:scaleX(1.0429);">x: 0.4183</span>
<span class="t" style="left:398.75px;top:890.00px;font-size:24.40px;line-height:27.00px;color:#fff;transform:scaleX(1.0523);">y: 0.4925</span>
<span class="t" style="left:240.04px;top:931.00px;font-size:24.40px;line-height:27.00px;color:#fff;transform:scaleX(1.0415);">fL: 81.01</span>
<span class="t" style="left:239.21px;top:966.00px;font-size:24.40px;line-height:27.00px;color:#fff;transform:scaleX(1.0962);">cd/m²: 277.57</span>
<div style="left:1214.50px;top:187.50px;width:710.00px;height:566.00px;background:#1c1c1c"></div>
<div style="left:1221.00px;top:194.00px;width:692.30px;height:553.00px;background:#323232"></div>
<div style="left:1258.70px;top:217.80px;width:649.90px;height:500.00px;background:#232323"></div>
<svg style="left:0;top:0" width="1920" height="1146" viewBox="0 0 1920 1146"><defs><clipPath id="cpl"><rect x="1258.7" y="217.8" width="649.9" height="500.0"/></clipPath><clipPath id="clo" clip-path="url(#cpl)"><path d="M1536.7 703.0L1536.7 702.9L1536.6 702.9L1536.6 702.9L1536.6 703.0L1536.5 703.0L1536.5 703.1L1536.4 703.1L1536.4 703.2L1536.3 703.3L1536.3 703.3L1536.2 703.3L1536.2 703.3L1536.1 703.3L1536.0 703.3L1535.9 703.3L1535.8 703.3L1535.8 703.4L1535.7 703.4L1535.6 703.5L1535.5 703.6L1535.4 703.6L1535.3 703.6L1535.2 703.6L1535.1 703.6L1535.0 703.6L1534.8 703.5L1534.7 703.5L1534.6 703.5L1534.4 703.6L1534.3 703.6L1534.1 703.6L1533.9 703.6L1533.8 703.6L1533.6 703.6L1533.4 703.6L1533.1 703.5L1532.8 703.4L1532.5 703.2L1532.2 703.0L1531.7 702.8L1531.3 702.5L1530.7 702.1L1530.2 701.8L1529.6 701.4L1528.9 700.9L1528.3 700.4L1527.6 699.9L1526.8 699.3L1526.0 698.7L1525.2 698.0L1524.2 697.2L1523.2 696.4L1522.1 695.5L1520.9 694.6L1519.7 693.6L1518.4 692.5L1517.1 691.4L1515.7 690.2L1514.3 689.0L1512.8 687.7L1511.2 686.4L1509.6 685.0L1507.9 683.6L1506.0 682.1L1504.1 680.5L1502.0 678.8L1499.8 677.0L1497.5 675.1L1495.1 673.2L1492.7 671.1L1490.1 669.1L1487.5 666.9L1484.7 664.6L1481.9 662.2L1478.9 659.6L1475.8 656.9L1472.5 654.0L1469.1 651.0L1465.6 647.8L1462.0 644.4L1458.3 640.9L1454.5 637.2L1450.5 633.1L1446.3 628.7L1441.7 623.8L1436.9 618.3L1431.8 612.3L1426.4 605.8L1420.7 598.8L1414.8 591.3L1408.8 583.4L1402.6 575.0L1396.2 566.1L1389.7 556.8L1383.1 547.0L1376.3 536.7L1369.5 525.9L1362.5 514.8L1355.6 503.4L1348.6 491.7L1341.7 479.9L1334.8 468.0L1328.1 456.0L1321.7 444.0L1315.5 432.0L1309.6 420.1L1304.1 408.4L1298.9 396.9L1294.1 385.6L1289.5 374.7L1285.3 364.1L1281.5 354.0L1278.0 344.3L1274.8 335.1L1272.0 326.4L1269.5 318.2L1267.4 310.5L1265.6 303.3L1264.1 296.7L1262.9 290.4L1261.9 284.7L1261.2 279.3L1260.8 274.3L1260.6 269.7L1260.7 265.4L1260.9 261.4L1261.4 257.7L1262.1 254.3L1263.0 251.2L1264.1 248.2L1265.4 245.6L1266.9 243.2L1268.6 241.0L1270.4 239.1L1272.4 237.3L1274.5 235.8L1276.7 234.6L1279.1 233.5L1281.5 232.5L1284.1 231.8L1286.7 231.2L1289.4 230.7L1292.2 230.3L1295.1 230.0L1298.0 229.7L1301.0 229.5L1304.0 229.4L1307.1 229.3L1310.1 229.2L1313.2 229.2L1316.3 229.2L1319.4 229.2L1322.4 229.3L1325.5 229.3L1328.6 229.4L1331.8 229.5L1335.0 229.6L1338.2 229.8L1341.4 230.0L1344.7 230.2L1348.1 230.4L1351.5 230.6L1355.0 230.8L1358.5 231.1L1362.1 231.4L1365.7 231.7L1369.4 232.0L1373.2 232.4L1377.0 232.7L1380.9 233.1L1384.9 233.5L1389.0 233.9L1393.1 234.3L1397.3 234.7L1401.6 235.2L1406.0 235.7L1410.5 236.1L1415.1 236.6L1419.8 237.1L1424.6 237.7L1429.5 238.2L1434.4 238.7L1439.5 239.3L1444.7 239.9L1450.0 240.5L1455.4 241.1L1460.9 241.7L1466.5 242.3L1472.3 243.0L1478.1 243.7L1484.1 244.3L1490.1 245.0L1496.3 245.7L1502.6 246.5L1509.0 247.2L1515.5 247.9L1522.1 248.7L1528.9 249.5L1535.7 250.3L1542.7 251.1L1549.8 251.9L1556.9 252.7L1564.2 253.6L1571.6 254.4L1579.0 255.3L1586.6 256.1L1594.2 257.0L1601.9 257.9L1609.6 258.8L1617.5 259.7L1625.4 260.6L1633.3 261.5L1641.2 262.4L1649.1 263.3L1657.0 264.2L1664.7 265.1L1672.4 266.0L1680.1 266.9L1687.7 267.7L1695.3 268.6L1702.8 269.5L1710.4 270.4L1717.9 271.2L1725.3 272.1L1732.5 272.9L1739.6 273.7L1746.5 274.5L1753.2 275.2L1759.8 276.0L1766.3 276.7L1772.6 277.5L1778.7 278.2L1784.7 278.9L1790.5 279.5L1796.1 280.2L1801.5 280.8L1806.7 281.4L1811.8 282.0L1816.7 282.6L1821.5 283.1L1826.2 283.6L1830.7 284.2L1835.0 284.7L1839.1 285.1L1842.8 285.5L1846.1 285.9L1849.3 286.3L1852.6 286.7L1856.3 287.1L1860.7 287.6L1865.9 288.2L1871.7 288.9L1877.8 289.6L1883.8 290.3L1889.4 290.9L1894.2 291.5L1898.4 291.9L1902.1 292.4L1905.3 292.7L1908.2 293.1L1910.9 293.4L1913.4 293.6L1915.7 293.9L1917.7 294.1L1919.5 294.3L1921.0 294.5L1922.2 294.7L1923.3 294.8L1924.3 294.9L1925.2 295.0L1926.0 295.1L1926.9 295.2L1927.7 295.3L1928.5 295.4L1929.2 295.5L1929.9 295.6L1930.6 295.6L1931.1 295.7L1931.7 295.8L1932.1 295.8L1932.5 295.8L1932.8 295.9L1932.9 295.9L1933.0 295.9L1933.0 295.9Z"/></clipPath><clipPath id="ctr"><path d="M1746.3 282.3 L1394.2 249.4 L1448.7 585.6 Z"/></clipPath><filter id="fd" filterUnits="userSpaceOnUse" x="1200" y="170" width="760" height="600"><feGaussianBlur stdDeviation="5"/></filter><filter id="fb" filterUnits="userSpaceOnUse" x="1200" y="170" width="760" height="600"><feGaussianBlur stdDeviation="3.6"/></filter></defs><g clip-path="url(#clo)"><g filter="url(#fd)" shape-rendering="crispEdges" fill="none" stroke-width="8"><path d="M1258 213h128" stroke="#090"/><path d="M1386 213h8" stroke="#029900"/><path d="M1394 213h8" stroke="#0c9900"/><path d="M1402 213h8" stroke="#179900"/><path d="M1250 221h144" stroke="#090"/><path d="M1394 221h8" stroke="#0b9900"/><path d="M1402 221h8" stroke="#169900"/><path d="M1410 221h8" stroke="#219900"/><path d="M1418 221h8" stroke="#2d9900"/><path d="M1426 221h8" stroke="#399900"/><path d="M1434 221h8" stroke="#469900"/><path d="M1442 221h8" stroke="#539900"/><path d="M1450 221h8" stroke="#619900"/><path d="M1458 221h8" stroke="#6f9900"/><path d="M1466 221h8" stroke="#7f9900"/><path d="M1474 221h8" stroke="#8f9900"/><path d="M1242 229h152" stroke="#090"/><path d="M1394 229h8" stroke="#099900"/><path d="M1402 229h8" stroke="#149900"/><path d="M1410 229h8" stroke="#209900"/><path d="M1418 229h8" stroke="#2c9900"/><path d="M1426 229h8" stroke="#389900"/><path d="M1434 229h8" stroke="#459900"/><path d="M1442 229h8" stroke="#539900"/><path d="M1450 229h8" stroke="#619900"/><path d="M1458 229h8" stroke="#709900"/><path d="M1466 229h8" stroke="#809900"/><path d="M1474 229h8" stroke="#909900"/><path d="M1482 229h8" stroke="#999100"/><path d="M1490 229h8" stroke="#998200"/><path d="M1498 229h8" stroke="#997600"/><path d="M1506 229h8" stroke="#996b00"/><path d="M1514 229h8" stroke="#996100"/><path d="M1522 229h8" stroke="#995900"/><path d="M1530 229h8" stroke="#995200"/><path d="M1538 229h8" stroke="#994b00"/><path d="M1242 237h16" stroke="#009901"/><path d="M1258 237h136" stroke="#090"/><path d="M1394 237h8" stroke="#089900"/><path d="M1402 237h8" stroke="#139900"/><path d="M1410 237h8" stroke="#1f9900"/><path d="M1418 237h8" stroke="#2b9900"/><path d="M1426 237h8" stroke="#389900"/><path d="M1434 237h8" stroke="#459900"/><path d="M1442 237h8" stroke="#539900"/><path d="M1450 237h8" stroke="#619900"/><path d="M1458 237h8" stroke="#719900"/><path d="M1466 237h8" stroke="#819900"/><path d="M1474 237h8" stroke="#919900"/><path d="M1482 237h8" stroke="#998f00"/><path d="M1490 237h8" stroke="#998100"/><path d="M1498 237h8" stroke="#997400"/><path d="M1506 237h8" stroke="#996900"/><path d="M1514 237h8" stroke="#996000"/><path d="M1522 237h8" stroke="#995700"/><path d="M1530 237h8" stroke="#995000"/><path d="M1538 237h8" stroke="#994900"/><path d="M1546 237h8" stroke="#994300"/><path d="M1554 237h8" stroke="#993e00"/><path d="M1562 237h8" stroke="#993900"/><path d="M1570 237h8" stroke="#993500"/><path d="M1578 237h8" stroke="#993100"/><path d="M1586 237h8" stroke="#992d00"/><path d="M1594 237h8" stroke="#992900"/><path d="M1602 237h8" stroke="#992600"/><path d="M1610 237h8" stroke="#992300"/><path d="M1242 245h16" stroke="#009909"/><path d="M1258 245h16" stroke="#009908"/><path d="M1274 245h16" stroke="#009906"/><path d="M1290 245h16" stroke="#009905"/><path d="M1306 245h16" stroke="#009904"/><path d="M1322 245h16" stroke="#009902"/><path d="M1338 245h56" stroke="#009901"/><path d="M1394 245h8" stroke="#069900"/><path d="M1402 245h8" stroke="#129900"/><path d="M1410 245h8" stroke="#1d9900"/><path d="M1418 245h8" stroke="#2a9900"/><path d="M1426 245h8" stroke="#379900"/><path d="M1434 245h8" stroke="#490"/><path d="M1442 245h8" stroke="#539900"/><path d="M1450 245h8" stroke="#619900"/><path d="M1458 245h8" stroke="#719900"/><path d="M1466 245h8" stroke="#829900"/><path d="M1474 245h8" stroke="#939900"/><path d="M1482 245h8" stroke="#998e00"/><path d="M1490 245h8" stroke="#997f00"/><path d="M1498 245h8" stroke="#997200"/><path d="M1506 245h8" stroke="#996700"/><path d="M1514 245h8" stroke="#995e00"/><path d="M1522 245h8" stroke="#995600"/><path d="M1530 245h8" stroke="#994e00"/><path d="M1538 245h8" stroke="#994800"/><path d="M1546 245h8" stroke="#994200"/><path d="M1554 245h8" stroke="#993c00"/><path d="M1562 245h8" stroke="#993800"/><path d="M1570 245h8" stroke="#930"/><path d="M1578 245h8" stroke="#992f00"/><path d="M1586 245h8" stroke="#992b00"/><path d="M1594 245h8" stroke="#992800"/><path d="M1602 245h8" stroke="#992500"/><path d="M1610 245h8" stroke="#920"/><path d="M1618 245h8" stroke="#991f00"/><path d="M1626 245h8" stroke="#991d00"/><path d="M1634 245h8" stroke="#991a00"/><path d="M1642 245h8" stroke="#991800"/><path d="M1650 245h8" stroke="#991600"/><path d="M1658 245h8" stroke="#991400"/><path d="M1666 245h8" stroke="#991200"/><path d="M1674 245h8" stroke="#991000"/><path d="M1682 245h8" stroke="#990f00"/><path d="M1242 253h24" stroke="#009910"/><path d="M1266 253h16" stroke="#00990f"/><path d="M1282 253h16" stroke="#00990e"/><path d="M1298 253h16" stroke="#00990d"/><path d="M1314 253h16" stroke="#00990c"/><path d="M1330 253h16" stroke="#00990a"/><path d="M1346 253h16" stroke="#009909"/><path d="M1362 253h16" stroke="#009908"/><path d="M1378 253h16" stroke="#009906"/><path d="M1394 253h8" stroke="#049904"/><path d="M1402 253h8" stroke="#109903"/><path d="M1410 253h8" stroke="#1c9902"/><path d="M1418 253h8" stroke="#299901"/><path d="M1426 253h8" stroke="#369900"/><path d="M1434 253h8" stroke="#490"/><path d="M1442 253h8" stroke="#529900"/><path d="M1450 253h8" stroke="#629900"/><path d="M1458 253h8" stroke="#729900"/><path d="M1466 253h8" stroke="#839900"/><path d="M1474 253h8" stroke="#949900"/><path d="M1482 253h8" stroke="#998c00"/><path d="M1490 253h8" stroke="#997d00"/><path d="M1498 253h8" stroke="#997000"/><path d="M1506 253h8" stroke="#960"/><path d="M1514 253h8" stroke="#995c00"/><path d="M1522 253h8" stroke="#995400"/><path d="M1530 253h8" stroke="#994c00"/><path d="M1538 253h8" stroke="#994600"/><path d="M1546 253h8" stroke="#994000"/><path d="M1554 253h8" stroke="#993b00"/><path d="M1562 253h8" stroke="#993600"/><path d="M1570 253h8" stroke="#993200"/><path d="M1578 253h8" stroke="#992e00"/><path d="M1586 253h8" stroke="#992a00"/><path d="M1594 253h8" stroke="#992600"/><path d="M1602 253h8" stroke="#992300"/><path d="M1610 253h8" stroke="#992000"/><path d="M1618 253h8" stroke="#991e00"/><path d="M1626 253h8" stroke="#991b00"/><path d="M1634 253h8" stroke="#991900"/><path d="M1642 253h8" stroke="#991700"/><path d="M1650 253h8" stroke="#991500"/><path d="M1658 253h8" stroke="#991300"/><path d="M1666 253h8" stroke="#910"/><path d="M1674 253h8" stroke="#990f00"/><path d="M1682 253h8" stroke="#990e00"/><path d="M1690 253h8" stroke="#990c00"/><path d="M1698 253h8" stroke="#990a00"/><path d="M1706 253h8" stroke="#990900"/><path d="M1714 253h8" stroke="#990800"/><path d="M1722 253h8" stroke="#990700"/><path d="M1730 253h8" stroke="#990500"/><path d="M1738 253h8" stroke="#990400"/><path d="M1746 253h8" stroke="#990300"/><path d="M1754 253h8" stroke="#990200"/><path d="M1242 261h24" stroke="#009918"/><path d="M1266 261h24" stroke="#009917"/><path d="M1290 261h24" stroke="#009916"/><path d="M1314 261h24" stroke="#009915"/><path d="M1338 261h16" stroke="#009913"/><path d="M1354 261h16" stroke="#009912"/><path d="M1370 261h16" stroke="#091"/><path d="M1386 261h8" stroke="#009910"/><path d="M1394 261h8" stroke="#03990f"/><path d="M1402 261h8" stroke="#0f990e"/><path d="M1410 261h8" stroke="#1b990e"/><path d="M1418 261h8" stroke="#28990d"/><path d="M1426 261h8" stroke="#35990c"/><path d="M1434 261h8" stroke="#43990b"/><path d="M1442 261h8" stroke="#52990a"/><path d="M1450 261h8" stroke="#62990a"/><path d="M1458 261h8" stroke="#729909"/><path d="M1466 261h8" stroke="#849908"/><path d="M1474 261h8" stroke="#969906"/><path d="M1482 261h8" stroke="#998a05"/><path d="M1490 261h8" stroke="#997b03"/><path d="M1498 261h8" stroke="#996f02"/><path d="M1506 261h8" stroke="#996401"/><path d="M1514 261h8" stroke="#995a00"/><path d="M1522 261h8" stroke="#995200"/><path d="M1530 261h8" stroke="#994b00"/><path d="M1538 261h8" stroke="#940"/><path d="M1546 261h8" stroke="#993e00"/><path d="M1554 261h8" stroke="#993900"/><path d="M1562 261h8" stroke="#993400"/><path d="M1570 261h8" stroke="#993000"/><path d="M1578 261h8" stroke="#992c00"/><path d="M1586 261h8" stroke="#992800"/><path d="M1594 261h8" stroke="#992500"/><path d="M1602 261h8" stroke="#920"/><path d="M1610 261h8" stroke="#991f00"/><path d="M1618 261h8" stroke="#991c00"/><path d="M1626 261h8" stroke="#991a00"/><path d="M1634 261h8" stroke="#991800"/><path d="M1642 261h8" stroke="#991500"/><path d="M1650 261h8" stroke="#991300"/><path d="M1658 261h8" stroke="#910"/><path d="M1666 261h8" stroke="#991000"/><path d="M1674 261h8" stroke="#990e00"/><path d="M1682 261h8" stroke="#990c00"/><path d="M1690 261h8" stroke="#990b00"/><path d="M1698 261h8" stroke="#990900"/><path d="M1706 261h8" stroke="#990800"/><path d="M1714 261h8" stroke="#990700"/><path d="M1722 261h8" stroke="#990600"/><path d="M1730 261h8" stroke="#990400"/><path d="M1738 261h8" stroke="#990300"/><path d="M1746 261h8" stroke="#990200"/><path d="M1754 261h16" stroke="#990100"/><path d="M1770 261h64" stroke="#900"/><path d="M1242 269h40" stroke="#009920"/><path d="M1282 269h32" stroke="#00991f"/><path d="M1314 269h32" stroke="#00991e"/><path d="M1346 269h24" stroke="#00991d"/><path d="M1370 269h24" stroke="#00991c"/><path d="M1394 269h8" stroke="#01991a"/><path d="M1402 269h8" stroke="#0d991a"/><path d="M1410 269h8" stroke="#199919"/><path d="M1418 269h8" stroke="#279919"/><path d="M1426 269h8" stroke="#349918"/><path d="M1434 269h8" stroke="#439918"/><path d="M1442 269h8" stroke="#529917"/><path d="M1450 269h8" stroke="#629917"/><path d="M1458 269h8" stroke="#739916"/><path d="M1466 269h8" stroke="#859915"/><path d="M1474 269h8" stroke="#989915"/><path d="M1482 269h8" stroke="#998812"/><path d="M1490 269h8" stroke="#99790f"/><path d="M1498 269h8" stroke="#996d0d"/><path d="M1506 269h8" stroke="#99620b"/><path d="M1514 269h8" stroke="#99580a"/><path d="M1522 269h8" stroke="#995008"/><path d="M1530 269h8" stroke="#994907"/><path d="M1538 269h8" stroke="#994206"/><path d="M1546 269h8" stroke="#993d05"/><path d="M1554 269h8" stroke="#993704"/><path d="M1562 269h8" stroke="#993303"/><path d="M1570 269h8" stroke="#992e02"/><path d="M1578 269h8" stroke="#992a02"/><path d="M1586 269h8" stroke="#992701"/><path d="M1594 269h8" stroke="#992400"/><path d="M1602 269h8" stroke="#992000"/><path d="M1610 269h8" stroke="#991e00"/><path d="M1618 269h8" stroke="#991b00"/><path d="M1626 269h8" stroke="#991900"/><path d="M1634 269h8" stroke="#991600"/><path d="M1642 269h8" stroke="#991400"/><path d="M1650 269h8" stroke="#991200"/><path d="M1658 269h8" stroke="#991000"/><path d="M1666 269h8" stroke="#990e00"/><path d="M1674 269h8" stroke="#990d00"/><path d="M1682 269h8" stroke="#990b00"/><path d="M1690 269h8" stroke="#990a00"/><path d="M1698 269h8" stroke="#990800"/><path d="M1706 269h8" stroke="#990700"/><path d="M1714 269h8" stroke="#990600"/><path d="M1722 269h8" stroke="#990400"/><path d="M1730 269h8" stroke="#990300"/><path d="M1738 269h8" stroke="#990200"/><path d="M1746 269h16" stroke="#990100"/><path d="M1762 269h136" stroke="#900"/><path d="M1242 277h80" stroke="#009929"/><path d="M1322 277h64" stroke="#009927"/><path d="M1386 277h16" stroke="#009926"/><path d="M1402 277h8" stroke="#0b9926"/><path d="M1410 277h8" stroke="#189926"/><path d="M1458 277h8" stroke="#749924"/><path d="M1466 277h8" stroke="#869924"/><path d="M1474 277h8" stroke="#999824"/><path d="M1482 277h8" stroke="#99861f"/><path d="M1490 277h8" stroke="#99771b"/><path d="M1498 277h8" stroke="#996b18"/><path d="M1506 277h8" stroke="#996016"/><path d="M1514 277h8" stroke="#995613"/><path d="M1522 277h8" stroke="#994e11"/><path d="M1530 277h8" stroke="#99470f"/><path d="M1538 277h8" stroke="#99410e"/><path d="M1546 277h8" stroke="#993b0c"/><path d="M1554 277h8" stroke="#99360b"/><path d="M1562 277h8" stroke="#99310a"/><path d="M1570 277h8" stroke="#992d09"/><path d="M1578 277h8" stroke="#992908"/><path d="M1586 277h8" stroke="#992507"/><path d="M1594 277h8" stroke="#992206"/><path d="M1602 277h8" stroke="#991f05"/><path d="M1610 277h8" stroke="#991c05"/><path d="M1618 277h8" stroke="#991a04"/><path d="M1626 277h8" stroke="#991703"/><path d="M1634 277h8" stroke="#991503"/><path d="M1642 277h8" stroke="#991302"/><path d="M1650 277h8" stroke="#991102"/><path d="M1658 277h8" stroke="#990f01"/><path d="M1666 277h8" stroke="#990d01"/><path d="M1674 277h8" stroke="#990c01"/><path d="M1682 277h8" stroke="#990a00"/><path d="M1690 277h8" stroke="#990900"/><path d="M1698 277h8" stroke="#990700"/><path d="M1706 277h8" stroke="#990600"/><path d="M1714 277h8" stroke="#990500"/><path d="M1722 277h8" stroke="#990300"/><path d="M1730 277h8" stroke="#990200"/><path d="M1738 277h8" stroke="#990100"/><path d="M1746 277h176" stroke="#900"/><path d="M1242 285h128" stroke="#009931"/><path d="M1370 285h32" stroke="#009932"/><path d="M1402 285h8" stroke="#099933"/><path d="M1410 285h8" stroke="#179933"/><path d="M1418 285h8" stroke="#249933"/><path d="M1546 285h8" stroke="#993914"/><path d="M1554 285h8" stroke="#993412"/><path d="M1562 285h8" stroke="#992f11"/><path d="M1570 285h8" stroke="#992b0f"/><path d="M1578 285h8" stroke="#99270e"/><path d="M1586 285h8" stroke="#99240d"/><path d="M1594 285h8" stroke="#99200c"/><path d="M1602 285h8" stroke="#991e0b"/><path d="M1610 285h8" stroke="#991b0a"/><path d="M1618 285h8" stroke="#991809"/><path d="M1626 285h8" stroke="#991608"/><path d="M1634 285h8" stroke="#991408"/><path d="M1642 285h8" stroke="#991207"/><path d="M1650 285h8" stroke="#991006"/><path d="M1658 285h8" stroke="#990e06"/><path d="M1666 285h8" stroke="#990c05"/><path d="M1674 285h8" stroke="#990a05"/><path d="M1682 285h8" stroke="#990904"/><path d="M1690 285h8" stroke="#990704"/><path d="M1698 285h8" stroke="#990603"/><path d="M1706 285h8" stroke="#990503"/><path d="M1714 285h8" stroke="#990402"/><path d="M1722 285h8" stroke="#990202"/><path d="M1730 285h8" stroke="#990102"/><path d="M1738 285h32" stroke="#990001"/><path d="M1770 285h152" stroke="#900"/><path d="M1242 293h40" stroke="#00993a"/><path d="M1282 293h40" stroke="#00993b"/><path d="M1322 293h32" stroke="#00993c"/><path d="M1354 293h24" stroke="#00993d"/><path d="M1378 293h24" stroke="#00993f"/><path d="M1402 293h8" stroke="#089940"/><path d="M1410 293h8" stroke="#159940"/><path d="M1418 293h8" stroke="#239941"/><path d="M1634 293h8" stroke="#99120d"/><path d="M1642 293h8" stroke="#99100c"/><path d="M1650 293h8" stroke="#990e0b"/><path d="M1658 293h8" stroke="#990c0a"/><path d="M1666 293h8" stroke="#990b09"/><path d="M1674 293h8" stroke="#990909"/><path d="M1682 293h8" stroke="#990808"/><path d="M1690 293h8" stroke="#990608"/><path d="M1698 293h8" stroke="#990507"/><path d="M1706 293h8" stroke="#990407"/><path d="M1714 293h8" stroke="#990206"/><path d="M1722 293h8" stroke="#990106"/><path d="M1730 293h24" stroke="#990005"/><path d="M1754 293h24" stroke="#990004"/><path d="M1778 293h32" stroke="#990003"/><path d="M1810 293h32" stroke="#990002"/><path d="M1842 293h80" stroke="#900"/><path d="M1242 301h24" stroke="#009943"/><path d="M1266 301h24" stroke="#094"/><path d="M1290 301h24" stroke="#009945"/><path d="M1314 301h24" stroke="#009947"/><path d="M1338 301h16" stroke="#009948"/><path d="M1354 301h16" stroke="#009949"/><path d="M1370 301h16" stroke="#00994b"/><path d="M1386 301h16" stroke="#00994c"/><path d="M1402 301h8" stroke="#06994e"/><path d="M1410 301h8" stroke="#13994e"/><path d="M1418 301h8" stroke="#22994f"/><path d="M1690 301h8" stroke="#99050c"/><path d="M1698 301h8" stroke="#99040b"/><path d="M1706 301h8" stroke="#99030a"/><path d="M1714 301h8" stroke="#99010a"/><path d="M1722 301h16" stroke="#990009"/><path d="M1738 301h24" stroke="#990008"/><path d="M1762 301h24" stroke="#990007"/><path d="M1786 301h24" stroke="#990005"/><path d="M1810 301h32" stroke="#990004"/><path d="M1842 301h32" stroke="#990003"/><path d="M1874 301h40" stroke="#990002"/><path d="M1914 301h8" stroke="#990001"/><path d="M1242 309h16" stroke="#00994d"/><path d="M1258 309h16" stroke="#00994e"/><path d="M1274 309h16" stroke="#00994f"/><path d="M1290 309h16" stroke="#009950"/><path d="M1306 309h16" stroke="#009951"/><path d="M1322 309h16" stroke="#009953"/><path d="M1338 309h16" stroke="#009954"/><path d="M1354 309h16" stroke="#009956"/><path d="M1370 309h16" stroke="#009958"/><path d="M1386 309h8" stroke="#00995a"/><path d="M1394 309h8" stroke="#00995b"/><path d="M1402 309h8" stroke="#04995c"/><path d="M1410 309h8" stroke="#12995d"/><path d="M1418 309h8" stroke="#20995f"/><path d="M1682 309h8" stroke="#990510"/><path d="M1690 309h8" stroke="#990410"/><path d="M1698 309h8" stroke="#99030f"/><path d="M1706 309h8" stroke="#99010e"/><path d="M1714 309h16" stroke="#99000d"/><path d="M1730 309h16" stroke="#99000c"/><path d="M1746 309h16" stroke="#99000b"/><path d="M1762 309h24" stroke="#99000a"/><path d="M1786 309h24" stroke="#990008"/><path d="M1810 309h24" stroke="#990007"/><path d="M1834 309h32" stroke="#990006"/><path d="M1866 309h32" stroke="#990005"/><path d="M1898 309h24" stroke="#990003"/><path d="M1242 317h16" stroke="#009956"/><path d="M1258 317h16" stroke="#009958"/><path d="M1274 317h16" stroke="#009959"/><path d="M1290 317h16" stroke="#00995b"/><path d="M1306 317h16" stroke="#00995d"/><path d="M1322 317h8" stroke="#00995f"/><path d="M1330 317h8" stroke="#009960"/><path d="M1338 317h8" stroke="#009961"/><path d="M1346 317h8" stroke="#009962"/><path d="M1354 317h8" stroke="#009963"/><path d="M1362 317h8" stroke="#009964"/><path d="M1370 317h8" stroke="#096"/><path d="M1378 317h8" stroke="#009967"/><path d="M1386 317h8" stroke="#009968"/><path d="M1394 317h8" stroke="#00996a"/><path d="M1402 317h8" stroke="#01996b"/><path d="M1410 317h8" stroke="#10996d"/><path d="M1418 317h8" stroke="#1f996f"/><path d="M1674 317h8" stroke="#990615"/><path d="M1682 317h8" stroke="#990414"/><path d="M1690 317h8" stroke="#990314"/><path d="M1698 317h8" stroke="#990213"/><path d="M1706 317h16" stroke="#990012"/><path d="M1722 317h16" stroke="#990010"/><path d="M1738 317h16" stroke="#99000f"/><path d="M1754 317h16" stroke="#99000e"/><path d="M1770 317h16" stroke="#99000c"/><path d="M1786 317h24" stroke="#99000b"/><path d="M1810 317h24" stroke="#99000a"/><path d="M1834 317h24" stroke="#990009"/><path d="M1858 317h24" stroke="#990007"/><path d="M1882 317h32" stroke="#990006"/><path d="M1914 317h8" stroke="#990005"/><path d="M1242 325h16" stroke="#009960"/><path d="M1258 325h16" stroke="#009962"/><path d="M1274 325h8" stroke="#009964"/><path d="M1282 325h8" stroke="#009965"/><path d="M1290 325h8" stroke="#096"/><path d="M1298 325h8" stroke="#009967"/><path d="M1306 325h8" stroke="#009969"/><path d="M1314 325h8" stroke="#00996a"/><path d="M1322 325h8" stroke="#00996b"/><path d="M1330 325h8" stroke="#00996c"/><path d="M1338 325h8" stroke="#00996e"/><path d="M1346 325h8" stroke="#00996f"/><path d="M1354 325h8" stroke="#009971"/><path d="M1362 325h8" stroke="#009972"/><path d="M1370 325h8" stroke="#009974"/><path d="M1378 325h8" stroke="#009976"/><path d="M1386 325h8" stroke="#097"/><path d="M1394 325h8" stroke="#009979"/><path d="M1402 325h8" stroke="#00997b"/><path d="M1410 325h8" stroke="#0e997e"/><path d="M1418 325h8" stroke="#1d9980"/><path d="M1666 325h8" stroke="#99061b"/><path d="M1674 325h8" stroke="#99041a"/><path d="M1682 325h8" stroke="#990319"/><path d="M1690 325h8" stroke="#990218"/><path d="M1698 325h16" stroke="#990017"/><path d="M1714 325h16" stroke="#990015"/><path d="M1730 325h16" stroke="#990013"/><path d="M1746 325h16" stroke="#990012"/><path d="M1762 325h16" stroke="#990010"/><path d="M1778 325h16" stroke="#99000f"/><path d="M1794 325h16" stroke="#99000e"/><path d="M1810 325h24" stroke="#99000d"/><path d="M1834 325h24" stroke="#99000b"/><path d="M1858 325h24" stroke="#99000a"/><path d="M1882 325h24" stroke="#990009"/><path d="M1906 325h16" stroke="#990008"/><path d="M1250 333h8" stroke="#00996c"/><path d="M1258 333h8" stroke="#00996d"/><path d="M1266 333h8" stroke="#00996e"/><path d="M1274 333h8" stroke="#009970"/><path d="M1282 333h8" stroke="#009971"/><path d="M1290 333h8" stroke="#009972"/><path d="M1298 333h8" stroke="#009974"/><path d="M1306 333h8" stroke="#009975"/><path d="M1314 333h8" stroke="#009976"/><path d="M1322 333h8" stroke="#009978"/><path d="M1330 333h8" stroke="#00997a"/><path d="M1338 333h8" stroke="#00997b"/><path d="M1346 333h8" stroke="#00997d"/><path d="M1354 333h8" stroke="#00997f"/><path d="M1362 333h8" stroke="#009981"/><path d="M1370 333h8" stroke="#009983"/><path d="M1378 333h8" stroke="#009985"/><path d="M1386 333h8" stroke="#009987"/><path d="M1394 333h8" stroke="#00998a"/><path d="M1402 333h8" stroke="#00998c"/><path d="M1410 333h8" stroke="#0c998f"/><path d="M1418 333h8" stroke="#1b9992"/><path d="M1426 333h8" stroke="#2c9995"/><path d="M1658 333h8" stroke="#990621"/><path d="M1666 333h8" stroke="#99041f"/><path d="M1674 333h8" stroke="#99031e"/><path d="M1682 333h8" stroke="#99021d"/><path d="M1690 333h8" stroke="#99001c"/><path d="M1698 333h8" stroke="#99001b"/><path d="M1706 333h16" stroke="#99001a"/><path d="M1722 333h16" stroke="#990018"/><path d="M1738 333h16" stroke="#990016"/><path d="M1754 333h16" stroke="#990014"/><path d="M1770 333h16" stroke="#990013"/><path d="M1786 333h16" stroke="#901"/><path d="M1802 333h16" stroke="#990010"/><path d="M1818 333h16" stroke="#99000f"/><path d="M1834 333h24" stroke="#99000e"/><path d="M1858 333h24" stroke="#99000d"/><path d="M1882 333h24" stroke="#99000b"/><path d="M1906 333h16" stroke="#99000a"/><path d="M1250 341h8" stroke="#097"/><path d="M1258 341h8" stroke="#009978"/><path d="M1266 341h8" stroke="#00997a"/><path d="M1274 341h8" stroke="#00997b"/><path d="M1282 341h8" stroke="#00997d"/><path d="M1290 341h8" stroke="#00997e"/><path d="M1298 341h8" stroke="#009980"/><path d="M1306 341h8" stroke="#009982"/><path d="M1314 341h8" stroke="#009984"/><path d="M1322 341h8" stroke="#009985"/><path d="M1330 341h8" stroke="#009987"/><path d="M1338 341h8" stroke="#00998a"/><path d="M1346 341h8" stroke="#00998c"/><path d="M1354 341h8" stroke="#00998e"/><path d="M1362 341h8" stroke="#009990"/><path d="M1370 341h8" stroke="#009993"/><path d="M1378 341h8" stroke="#009995"/><path d="M1386 341h8" stroke="#009998"/><path d="M1394 341h8" stroke="#009799"/><path d="M1402 341h8" stroke="#009499"/><path d="M1410 341h8" stroke="#099199"/><path d="M1418 341h8" stroke="#188e99"/><path d="M1426 341h8" stroke="#278b99"/><path d="M1650 341h8" stroke="#990627"/><path d="M1658 341h8" stroke="#990526"/><path d="M1666 341h8" stroke="#990324"/><path d="M1674 341h8" stroke="#990223"/><path d="M1682 341h8" stroke="#990021"/><path d="M1690 341h8" stroke="#990020"/><path d="M1698 341h8" stroke="#99001f"/><path d="M1706 341h8" stroke="#99001d"/><path d="M1714 341h8" stroke="#99001c"/><path d="M1722 341h16" stroke="#99001b"/><path d="M1738 341h16" stroke="#990019"/><path d="M1754 341h16" stroke="#990018"/><path d="M1770 341h16" stroke="#990016"/><path d="M1786 341h16" stroke="#990014"/><path d="M1802 341h16" stroke="#990013"/><path d="M1818 341h16" stroke="#990012"/><path d="M1834 341h16" stroke="#901"/><path d="M1850 341h24" stroke="#990010"/><path d="M1874 341h24" stroke="#99000e"/><path d="M1898 341h24" stroke="#99000d"/><path d="M1250 349h8" stroke="#009982"/><path d="M1258 349h8" stroke="#009984"/><path d="M1266 349h8" stroke="#009986"/><path d="M1274 349h8" stroke="#098"/><path d="M1282 349h8" stroke="#009989"/><path d="M1290 349h8" stroke="#00998b"/><path d="M1298 349h8" stroke="#00998d"/><path d="M1306 349h8" stroke="#00998f"/><path d="M1314 349h8" stroke="#009991"/><path d="M1322 349h8" stroke="#009994"/><path d="M1330 349h8" stroke="#009996"/><path d="M1338 349h8" stroke="#009998"/><path d="M1346 349h8" stroke="#009799"/><path d="M1354 349h8" stroke="#009599"/><path d="M1362 349h8" stroke="#009299"/><path d="M1370 349h8" stroke="#008f99"/><path d="M1378 349h8" stroke="#008d99"/><path d="M1386 349h8" stroke="#008a99"/><path d="M1394 349h8" stroke="#008799"/><path d="M1402 349h8" stroke="#008499"/><path d="M1410 349h8" stroke="#068199"/><path d="M1418 349h8" stroke="#147e99"/><path d="M1426 349h8" stroke="#217b99"/><path d="M1642 349h8" stroke="#99072e"/><path d="M1650 349h8" stroke="#99052c"/><path d="M1658 349h8" stroke="#99032a"/><path d="M1666 349h8" stroke="#990229"/><path d="M1674 349h8" stroke="#990027"/><path d="M1682 349h8" stroke="#990025"/><path d="M1690 349h8" stroke="#990024"/><path d="M1698 349h8" stroke="#990023"/><path d="M1706 349h8" stroke="#990021"/><path d="M1714 349h8" stroke="#990020"/><path d="M1722 349h8" stroke="#99001f"/><path d="M1730 349h8" stroke="#99001e"/><path d="M1738 349h16" stroke="#99001d"/><path d="M1754 349h16" stroke="#99001b"/><path d="M1770 349h16" stroke="#990019"/><path d="M1786 349h16" stroke="#990018"/><path d="M1802 349h16" stroke="#990016"/><path d="M1818 349h16" stroke="#990015"/><path d="M1834 349h16" stroke="#990013"/><path d="M1850 349h16" stroke="#990012"/><path d="M1866 349h16" stroke="#901"/><path d="M1882 349h24" stroke="#990010"/><path d="M1906 349h16" stroke="#99000f"/><path d="M1258 357h8" stroke="#009990"/><path d="M1266 357h8" stroke="#009992"/><path d="M1274 357h8" stroke="#009994"/><path d="M1282 357h8" stroke="#009996"/><path d="M1290 357h8" stroke="#099"/><path d="M1298 357h8" stroke="#009799"/><path d="M1306 357h8" stroke="#009599"/><path d="M1314 357h8" stroke="#009399"/><path d="M1322 357h8" stroke="#009099"/><path d="M1330 357h8" stroke="#008e99"/><path d="M1338 357h8" stroke="#008b99"/><path d="M1346 357h8" stroke="#008999"/><path d="M1354 357h8" stroke="#008699"/><path d="M1362 357h8" stroke="#008499"/><path d="M1370 357h8" stroke="#008199"/><path d="M1378 357h8" stroke="#007f99"/><path d="M1386 357h8" stroke="#007c99"/><path d="M1394 357h8" stroke="#007999"/><path d="M1402 357h8" stroke="#079"/><path d="M1410 357h8" stroke="#047499"/><path d="M1418 357h8" stroke="#107199"/><path d="M1426 357h8" stroke="#1d6e99"/><path d="M1634 357h8" stroke="#990735"/><path d="M1642 357h8" stroke="#990533"/><path d="M1650 357h8" stroke="#990331"/><path d="M1658 357h8" stroke="#99022f"/><path d="M1666 357h8" stroke="#99012d"/><path d="M1674 357h8" stroke="#99002b"/><path d="M1682 357h8" stroke="#99002a"/><path d="M1690 357h8" stroke="#990028"/><path d="M1698 357h8" stroke="#990027"/><path d="M1706 357h8" stroke="#990025"/><path d="M1714 357h8" stroke="#990024"/><path d="M1722 357h8" stroke="#990023"/><path d="M1730 357h8" stroke="#902"/><path d="M1738 357h8" stroke="#990020"/><path d="M1746 357h8" stroke="#99001f"/><path d="M1754 357h16" stroke="#99001e"/><path d="M1770 357h16" stroke="#99001c"/><path d="M1786 357h16" stroke="#99001b"/><path d="M1802 357h16" stroke="#990019"/><path d="M1818 357h16" stroke="#990018"/><path d="M1834 357h16" stroke="#990016"/><path d="M1850 357h16" stroke="#990015"/><path d="M1866 357h16" stroke="#990014"/><path d="M1882 357h16" stroke="#990013"/><path d="M1898 357h16" stroke="#901"/><path d="M1258 365h8" stroke="#009599"/><path d="M1266 365h8" stroke="#009399"/><path d="M1274 365h8" stroke="#009199"/><path d="M1282 365h8" stroke="#008f99"/><path d="M1290 365h8" stroke="#008d99"/><path d="M1298 365h8" stroke="#008a99"/><path d="M1306 365h8" stroke="#089"/><path d="M1314 365h8" stroke="#008699"/><path d="M1322 365h8" stroke="#008499"/><path d="M1330 365h8" stroke="#008199"/><path d="M1338 365h8" stroke="#007f99"/><path d="M1346 365h8" stroke="#007d99"/><path d="M1354 365h8" stroke="#007a99"/><path d="M1362 365h8" stroke="#007899"/><path d="M1370 365h8" stroke="#007599"/><path d="M1378 365h8" stroke="#007399"/><path d="M1386 365h8" stroke="#007099"/><path d="M1394 365h8" stroke="#006e99"/><path d="M1402 365h8" stroke="#006b99"/><path d="M1410 365h8" stroke="#016999"/><path d="M1418 365h8" stroke="#0d6699"/><path d="M1426 365h8" stroke="#196399"/><path d="M1626 365h8" stroke="#99073d"/><path d="M1634 365h8" stroke="#99053b"/><path d="M1642 365h8" stroke="#990438"/><path d="M1650 365h8" stroke="#990236"/><path d="M1658 365h8" stroke="#990134"/><path d="M1666 365h8" stroke="#990032"/><path d="M1674 365h8" stroke="#990030"/><path d="M1682 365h8" stroke="#99002e"/><path d="M1690 365h8" stroke="#99002c"/><path d="M1698 365h8" stroke="#99002b"/><path d="M1706 365h8" stroke="#990029"/><path d="M1714 365h8" stroke="#990028"/><path d="M1722 365h8" stroke="#990027"/><path d="M1730 365h8" stroke="#990025"/><path d="M1738 365h8" stroke="#990024"/><path d="M1746 365h8" stroke="#990023"/><path d="M1754 365h8" stroke="#902"/><path d="M1762 365h16" stroke="#990021"/><path d="M1778 365h16" stroke="#99001f"/><path d="M1794 365h16" stroke="#99001d"/><path d="M1810 365h16" stroke="#99001b"/><path d="M1826 365h16" stroke="#99001a"/><path d="M1842 365h16" stroke="#990018"/><path d="M1858 365h16" stroke="#990017"/><path d="M1874 365h16" stroke="#990016"/><path d="M1890 365h16" stroke="#990014"/><path d="M1258 373h8" stroke="#008a99"/><path d="M1266 373h8" stroke="#089"/><path d="M1274 373h8" stroke="#008699"/><path d="M1282 373h8" stroke="#008499"/><path d="M1290 373h8" stroke="#008199"/><path d="M1298 373h8" stroke="#007f99"/><path d="M1306 373h8" stroke="#007d99"/><path d="M1314 373h8" stroke="#007b99"/><path d="M1322 373h8" stroke="#007999"/><path d="M1330 373h8" stroke="#079"/><path d="M1338 373h8" stroke="#007499"/><path d="M1346 373h8" stroke="#007299"/><path d="M1354 373h8" stroke="#007099"/><path d="M1362 373h8" stroke="#006d99"/><path d="M1370 373h8" stroke="#006b99"/><path d="M1378 373h8" stroke="#006999"/><path d="M1386 373h8" stroke="#069"/><path d="M1394 373h8" stroke="#006499"/><path d="M1402 373h8" stroke="#006199"/><path d="M1410 373h8" stroke="#005f99"/><path d="M1418 373h8" stroke="#0a5c99"/><path d="M1426 373h8" stroke="#155a99"/><path d="M1618 373h8" stroke="#990846"/><path d="M1626 373h8" stroke="#990643"/><path d="M1634 373h8" stroke="#990440"/><path d="M1642 373h8" stroke="#99023e"/><path d="M1650 373h8" stroke="#99013b"/><path d="M1658 373h8" stroke="#990039"/><path d="M1666 373h8" stroke="#990037"/><path d="M1674 373h8" stroke="#990034"/><path d="M1682 373h8" stroke="#903"/><path d="M1690 373h8" stroke="#990031"/><path d="M1698 373h8" stroke="#99002f"/><path d="M1706 373h8" stroke="#99002d"/><path d="M1714 373h8" stroke="#99002c"/><path d="M1722 373h8" stroke="#99002a"/><path d="M1730 373h8" stroke="#990029"/><path d="M1738 373h8" stroke="#990028"/><path d="M1746 373h8" stroke="#990026"/><path d="M1754 373h8" stroke="#990025"/><path d="M1762 373h8" stroke="#990024"/><path d="M1770 373h8" stroke="#990023"/><path d="M1778 373h16" stroke="#902"/><path d="M1794 373h16" stroke="#990020"/><path d="M1810 373h16" stroke="#99001e"/><path d="M1826 373h16" stroke="#99001c"/><path d="M1842 373h16" stroke="#99001b"/><path d="M1858 373h16" stroke="#990019"/><path d="M1874 373h16" stroke="#990018"/><path d="M1890 373h8" stroke="#990017"/><path d="M1266 381h8" stroke="#007e99"/><path d="M1274 381h8" stroke="#007c99"/><path d="M1282 381h8" stroke="#007a99"/><path d="M1290 381h8" stroke="#079"/><path d="M1298 381h8" stroke="#007599"/><path d="M1306 381h8" stroke="#007399"/><path d="M1314 381h8" stroke="#007199"/><path d="M1322 381h8" stroke="#006f99"/><path d="M1330 381h8" stroke="#006d99"/><path d="M1338 381h8" stroke="#006b99"/><path d="M1346 381h8" stroke="#006999"/><path d="M1354 381h8" stroke="#069"/><path d="M1362 381h8" stroke="#006499"/><path d="M1370 381h8" stroke="#006299"/><path d="M1378 381h8" stroke="#005f99"/><path d="M1386 381h8" stroke="#005d99"/><path d="M1394 381h8" stroke="#005b99"/><path d="M1402 381h8" stroke="#005899"/><path d="M1410 381h8" stroke="#005699"/><path d="M1418 381h8" stroke="#085499"/><path d="M1426 381h8" stroke="#125199"/><path d="M1610 381h8" stroke="#990850"/><path d="M1618 381h8" stroke="#99064c"/><path d="M1626 381h8" stroke="#990449"/><path d="M1634 381h8" stroke="#990246"/><path d="M1642 381h8" stroke="#990143"/><path d="M1650 381h8" stroke="#990040"/><path d="M1658 381h8" stroke="#99003e"/><path d="M1666 381h8" stroke="#99003b"/><path d="M1674 381h8" stroke="#990039"/><path d="M1682 381h8" stroke="#990037"/><path d="M1690 381h8" stroke="#990035"/><path d="M1698 381h8" stroke="#903"/><path d="M1706 381h8" stroke="#990031"/><path d="M1714 381h8" stroke="#990030"/><path d="M1722 381h8" stroke="#99002e"/><path d="M1730 381h8" stroke="#99002d"/><path d="M1738 381h8" stroke="#99002b"/><path d="M1746 381h8" stroke="#99002a"/><path d="M1754 381h8" stroke="#990029"/><path d="M1762 381h8" stroke="#990027"/><path d="M1770 381h8" stroke="#990026"/><path d="M1778 381h8" stroke="#990025"/><path d="M1786 381h8" stroke="#990024"/><path d="M1794 381h16" stroke="#990023"/><path d="M1810 381h16" stroke="#990021"/><path d="M1826 381h16" stroke="#99001f"/><path d="M1842 381h16" stroke="#99001e"/><path d="M1858 381h16" stroke="#99001c"/><path d="M1874 381h16" stroke="#99001b"/><path d="M1266 389h8" stroke="#007499"/><path d="M1274 389h8" stroke="#007299"/><path d="M1282 389h8" stroke="#007199"/><path d="M1290 389h8" stroke="#006f99"/><path d="M1298 389h8" stroke="#006d99"/><path d="M1306 389h8" stroke="#006b99"/><path d="M1314 389h8" stroke="#006899"/><path d="M1322 389h8" stroke="#069"/><path d="M1330 389h8" stroke="#006499"/><path d="M1338 389h8" stroke="#006299"/><path d="M1346 389h8" stroke="#006099"/><path d="M1354 389h8" stroke="#005e99"/><path d="M1362 389h8" stroke="#005c99"/><path d="M1370 389h8" stroke="#005a99"/><path d="M1378 389h8" stroke="#005799"/><path d="M1386 389h8" stroke="#059"/><path d="M1394 389h8" stroke="#005399"/><path d="M1402 389h8" stroke="#005199"/><path d="M1410 389h8" stroke="#004e99"/><path d="M1418 389h8" stroke="#064c99"/><path d="M1426 389h8" stroke="#104a99"/><path d="M1434 389h8" stroke="#1a4799"/><path d="M1602 389h8" stroke="#99085a"/><path d="M1610 389h8" stroke="#990656"/><path d="M1618 389h8" stroke="#990452"/><path d="M1626 389h8" stroke="#99024f"/><path d="M1634 389h8" stroke="#99014b"/><path d="M1642 389h8" stroke="#990048"/><path d="M1650 389h8" stroke="#990045"/><path d="M1658 389h8" stroke="#990043"/><path d="M1666 389h8" stroke="#990040"/><path d="M1674 389h8" stroke="#99003e"/><path d="M1682 389h8" stroke="#99003c"/><path d="M1690 389h8" stroke="#990039"/><path d="M1698 389h8" stroke="#990037"/><path d="M1706 389h8" stroke="#990036"/><path d="M1714 389h8" stroke="#990034"/><path d="M1722 389h8" stroke="#990032"/><path d="M1730 389h8" stroke="#990030"/><path d="M1738 389h8" stroke="#99002f"/><path d="M1746 389h8" stroke="#99002e"/><path d="M1754 389h8" stroke="#99002c"/><path d="M1762 389h8" stroke="#99002b"/><path d="M1770 389h8" stroke="#99002a"/><path d="M1778 389h8" stroke="#990028"/><path d="M1786 389h8" stroke="#990027"/><path d="M1794 389h8" stroke="#990026"/><path d="M1802 389h16" stroke="#990025"/><path d="M1818 389h16" stroke="#990023"/><path d="M1834 389h16" stroke="#990021"/><path d="M1850 389h16" stroke="#990020"/><path d="M1866 389h16" stroke="#99001e"/><path d="M1266 397h8" stroke="#006c99"/><path d="M1274 397h8" stroke="#006a99"/><path d="M1282 397h8" stroke="#006899"/><path d="M1290 397h8" stroke="#006799"/><path d="M1298 397h8" stroke="#006599"/><path d="M1306 397h8" stroke="#006399"/><path d="M1314 397h8" stroke="#006199"/><path d="M1322 397h8" stroke="#005f99"/><path d="M1330 397h8" stroke="#005d99"/><path d="M1338 397h8" stroke="#005b99"/><path d="M1346 397h8" stroke="#005999"/><path d="M1354 397h8" stroke="#005799"/><path d="M1362 397h8" stroke="#005499"/><path d="M1370 397h8" stroke="#005299"/><path d="M1378 397h8" stroke="#005099"/><path d="M1386 397h8" stroke="#004e99"/><path d="M1394 397h8" stroke="#004c99"/><path d="M1402 397h8" stroke="#004a99"/><path d="M1410 397h8" stroke="#004799"/><path d="M1418 397h8" stroke="#044599"/><path d="M1426 397h8" stroke="#0d4399"/><path d="M1434 397h8" stroke="#174199"/><path d="M1594 397h8" stroke="#990966"/><path d="M1602 397h8" stroke="#990761"/><path d="M1610 397h8" stroke="#99045d"/><path d="M1618 397h8" stroke="#990358"/><path d="M1626 397h8" stroke="#990155"/><path d="M1634 397h8" stroke="#990051"/><path d="M1642 397h8" stroke="#99004e"/><path d="M1650 397h8" stroke="#99004b"/><path d="M1658 397h8" stroke="#990048"/><path d="M1666 397h8" stroke="#990045"/><path d="M1674 397h8" stroke="#990042"/><path d="M1682 397h8" stroke="#990040"/><path d="M1690 397h8" stroke="#99003e"/><path d="M1698 397h8" stroke="#99003c"/><path d="M1706 397h8" stroke="#99003a"/><path d="M1714 397h8" stroke="#990038"/><path d="M1722 397h8" stroke="#990036"/><path d="M1730 397h8" stroke="#990034"/><path d="M1738 397h8" stroke="#903"/><path d="M1746 397h8" stroke="#990031"/><path d="M1754 397h8" stroke="#990030"/><path d="M1762 397h8" stroke="#99002e"/><path d="M1770 397h8" stroke="#99002d"/><path d="M1778 397h8" stroke="#99002c"/><path d="M1786 397h8" stroke="#99002a"/><path d="M1794 397h8" stroke="#990029"/><path d="M1802 397h8" stroke="#990028"/><path d="M1810 397h8" stroke="#990027"/><path d="M1818 397h16" stroke="#990026"/><path d="M1834 397h16" stroke="#990024"/><path d="M1850 397h16" stroke="#902"/><path d="M1866 397h8" stroke="#990021"/><path d="M1274 405h8" stroke="#006399"/><path d="M1282 405h8" stroke="#006199"/><path d="M1290 405h8" stroke="#005f99"/><path d="M1298 405h8" stroke="#005d99"/><path d="M1306 405h8" stroke="#005c99"/><path d="M1314 405h8" stroke="#005a99"/><path d="M1322 405h8" stroke="#005899"/><path d="M1330 405h8" stroke="#005699"/><path d="M1338 405h8" stroke="#005499"/><path d="M1346 405h8" stroke="#005299"/><path d="M1354 405h8" stroke="#005099"/><path d="M1362 405h8" stroke="#004e99"/><path d="M1370 405h8" stroke="#004c99"/><path d="M1378 405h8" stroke="#004a99"/><path d="M1386 405h8" stroke="#004899"/><path d="M1394 405h8" stroke="#004699"/><path d="M1402 405h8" stroke="#004399"/><path d="M1410 405h8" stroke="#004199"/><path d="M1418 405h8" stroke="#033f99"/><path d="M1426 405h8" stroke="#0b3d99"/><path d="M1434 405h8" stroke="#143b99"/><path d="M1586 405h8" stroke="#990973"/><path d="M1594 405h8" stroke="#99076d"/><path d="M1602 405h8" stroke="#990568"/><path d="M1610 405h8" stroke="#990363"/><path d="M1618 405h8" stroke="#99015f"/><path d="M1626 405h8" stroke="#99005a"/><path d="M1634 405h8" stroke="#990057"/><path d="M1642 405h8" stroke="#990053"/><path d="M1650 405h8" stroke="#990050"/><path d="M1658 405h8" stroke="#99004d"/><path d="M1666 405h8" stroke="#99004a"/><path d="M1674 405h8" stroke="#990047"/><path d="M1682 405h8" stroke="#990045"/><path d="M1690 405h8" stroke="#990042"/><path d="M1698 405h8" stroke="#990040"/><path d="M1706 405h8" stroke="#99003e"/><path d="M1714 405h8" stroke="#99003c"/><path d="M1722 405h8" stroke="#99003a"/><path d="M1730 405h8" stroke="#990038"/><path d="M1738 405h8" stroke="#990036"/><path d="M1746 405h8" stroke="#990035"/><path d="M1754 405h8" stroke="#903"/><path d="M1762 405h8" stroke="#990032"/><path d="M1770 405h8" stroke="#990030"/><path d="M1778 405h8" stroke="#99002f"/><path d="M1786 405h8" stroke="#99002e"/><path d="M1794 405h8" stroke="#99002c"/><path d="M1802 405h8" stroke="#99002b"/><path d="M1810 405h8" stroke="#99002a"/><path d="M1818 405h8" stroke="#990029"/><path d="M1826 405h16" stroke="#990028"/><path d="M1842 405h16" stroke="#990026"/><path d="M1858 405h8" stroke="#990024"/><path d="M1274 413h8" stroke="#005c99"/><path d="M1282 413h8" stroke="#005b99"/><path d="M1290 413h8" stroke="#005999"/><path d="M1298 413h8" stroke="#005799"/><path d="M1306 413h8" stroke="#059"/><path d="M1314 413h8" stroke="#005399"/><path d="M1322 413h8" stroke="#005199"/><path d="M1330 413h8" stroke="#005099"/><path d="M1338 413h8" stroke="#004e99"/><path d="M1346 413h8" stroke="#004c99"/><path d="M1354 413h8" stroke="#004a99"/><path d="M1362 413h8" stroke="#004899"/><path d="M1370 413h8" stroke="#004699"/><path d="M1378 413h8" stroke="#049"/><path d="M1386 413h8" stroke="#004299"/><path d="M1394 413h8" stroke="#004099"/><path d="M1402 413h8" stroke="#003e99"/><path d="M1410 413h8" stroke="#003c99"/><path d="M1418 413h8" stroke="#013a99"/><path d="M1426 413h8" stroke="#093899"/><path d="M1434 413h8" stroke="#123599"/><path d="M1578 413h8" stroke="#990a81"/><path d="M1586 413h8" stroke="#99077a"/><path d="M1594 413h8" stroke="#990574"/><path d="M1602 413h8" stroke="#99036f"/><path d="M1610 413h8" stroke="#99016a"/><path d="M1618 413h8" stroke="#990065"/><path d="M1626 413h8" stroke="#990060"/><path d="M1634 413h8" stroke="#99005c"/><path d="M1642 413h8" stroke="#990059"/><path d="M1650 413h8" stroke="#905"/><path d="M1658 413h8" stroke="#990052"/><path d="M1666 413h8" stroke="#99004f"/><path d="M1674 413h8" stroke="#99004c"/><path d="M1682 413h8" stroke="#990049"/><path d="M1690 413h8" stroke="#990047"/><path d="M1698 413h8" stroke="#904"/><path d="M1706 413h8" stroke="#990042"/><path d="M1714 413h8" stroke="#990040"/><path d="M1722 413h8" stroke="#99003e"/><path d="M1730 413h8" stroke="#99003c"/><path d="M1738 413h8" stroke="#99003a"/><path d="M1746 413h8" stroke="#990038"/><path d="M1754 413h8" stroke="#990037"/><path d="M1762 413h8" stroke="#990035"/><path d="M1770 413h8" stroke="#990034"/><path d="M1778 413h8" stroke="#990032"/><path d="M1786 413h8" stroke="#990031"/><path d="M1794 413h8" stroke="#990030"/><path d="M1802 413h8" stroke="#99002e"/><path d="M1810 413h8" stroke="#99002d"/><path d="M1818 413h8" stroke="#99002c"/><path d="M1826 413h8" stroke="#99002b"/><path d="M1834 413h8" stroke="#99002a"/><path d="M1842 413h16" stroke="#990029"/><path d="M1282 421h8" stroke="#059"/><path d="M1290 421h8" stroke="#005399"/><path d="M1298 421h8" stroke="#005199"/><path d="M1306 421h8" stroke="#004f99"/><path d="M1314 421h8" stroke="#004d99"/><path d="M1322 421h8" stroke="#004c99"/><path d="M1330 421h8" stroke="#004a99"/><path d="M1338 421h8" stroke="#004899"/><path d="M1346 421h8" stroke="#004699"/><path d="M1354 421h8" stroke="#049"/><path d="M1362 421h8" stroke="#004299"/><path d="M1370 421h8" stroke="#004199"/><path d="M1378 421h8" stroke="#003f99"/><path d="M1386 421h8" stroke="#003d99"/><path d="M1394 421h8" stroke="#003b99"/><path d="M1402 421h8" stroke="#003999"/><path d="M1410 421h8" stroke="#003799"/><path d="M1418 421h8" stroke="#003599"/><path d="M1426 421h8" stroke="#083399"/><path d="M1434 421h8" stroke="#103199"/><path d="M1570 421h8" stroke="#990b91"/><path d="M1578 421h8" stroke="#990889"/><path d="M1586 421h8" stroke="#990582"/><path d="M1594 421h8" stroke="#99037c"/><path d="M1602 421h8" stroke="#990176"/><path d="M1610 421h8" stroke="#990070"/><path d="M1618 421h8" stroke="#99006b"/><path d="M1626 421h8" stroke="#990067"/><path d="M1634 421h8" stroke="#990062"/><path d="M1642 421h8" stroke="#99005e"/><path d="M1650 421h8" stroke="#99005b"/><path d="M1658 421h8" stroke="#990057"/><path d="M1666 421h8" stroke="#990054"/><path d="M1674 421h8" stroke="#990051"/><path d="M1682 421h8" stroke="#99004e"/><path d="M1690 421h8" stroke="#99004b"/><path d="M1698 421h8" stroke="#990049"/><path d="M1706 421h8" stroke="#990046"/><path d="M1714 421h8" stroke="#904"/><path d="M1722 421h8" stroke="#990042"/><path d="M1730 421h8" stroke="#990040"/><path d="M1738 421h8" stroke="#99003e"/><path d="M1746 421h8" stroke="#99003c"/><path d="M1754 421h8" stroke="#99003a"/><path d="M1762 421h8" stroke="#990039"/><path d="M1770 421h8" stroke="#990037"/><path d="M1778 421h8" stroke="#990036"/><path d="M1786 421h8" stroke="#990034"/><path d="M1794 421h8" stroke="#903"/><path d="M1802 421h8" stroke="#990031"/><path d="M1810 421h8" stroke="#990030"/><path d="M1818 421h8" stroke="#99002f"/><path d="M1826 421h8" stroke="#99002e"/><path d="M1834 421h8" stroke="#99002d"/><path d="M1842 421h8" stroke="#99002c"/><path d="M1282 429h8" stroke="#004f99"/><path d="M1290 429h8" stroke="#004d99"/><path d="M1298 429h8" stroke="#004c99"/><path d="M1306 429h8" stroke="#004a99"/><path d="M1314 429h8" stroke="#004899"/><path d="M1322 429h8" stroke="#004699"/><path d="M1330 429h8" stroke="#004599"/><path d="M1338 429h8" stroke="#004399"/><path d="M1346 429h8" stroke="#004199"/><path d="M1354 429h8" stroke="#003f99"/><path d="M1362 429h8" stroke="#003d99"/><path d="M1370 429h8" stroke="#003c99"/><path d="M1378 429h8" stroke="#003a99"/><path d="M1386 429h8" stroke="#003899"/><path d="M1394 429h8" stroke="#003699"/><path d="M1402 429h8" stroke="#003499"/><path d="M1410 429h8" stroke="#003299"/><path d="M1418 429h8" stroke="#003099"/><path d="M1426 429h8" stroke="#062e99"/><path d="M1434 429h8" stroke="#0e2c99"/><path d="M1562 429h8" stroke="#8f0b99"/><path d="M1570 429h8" stroke="#980899"/><path d="M1578 429h8" stroke="#990692"/><path d="M1586 429h8" stroke="#99038a"/><path d="M1594 429h8" stroke="#990183"/><path d="M1602 429h8" stroke="#99007d"/><path d="M1610 429h8" stroke="#907"/><path d="M1618 429h8" stroke="#990072"/><path d="M1626 429h8" stroke="#99006d"/><path d="M1634 429h8" stroke="#990068"/><path d="M1642 429h8" stroke="#990064"/><path d="M1650 429h8" stroke="#990060"/><path d="M1658 429h8" stroke="#99005c"/><path d="M1666 429h8" stroke="#990059"/><path d="M1674 429h8" stroke="#990056"/><path d="M1682 429h8" stroke="#990053"/><path d="M1690 429h8" stroke="#990050"/><path d="M1698 429h8" stroke="#99004d"/><path d="M1706 429h8" stroke="#99004b"/><path d="M1714 429h8" stroke="#990048"/><path d="M1722 429h8" stroke="#990046"/><path d="M1730 429h8" stroke="#904"/><path d="M1738 429h8" stroke="#990042"/><path d="M1746 429h8" stroke="#990040"/><path d="M1754 429h8" stroke="#99003e"/><path d="M1762 429h8" stroke="#99003c"/><path d="M1770 429h8" stroke="#99003b"/><path d="M1778 429h8" stroke="#990039"/><path d="M1786 429h8" stroke="#990037"/><path d="M1794 429h8" stroke="#990036"/><path d="M1802 429h8" stroke="#990035"/><path d="M1810 429h8" stroke="#903"/><path d="M1818 429h8" stroke="#990032"/><path d="M1826 429h8" stroke="#990031"/><path d="M1834 429h8" stroke="#99002f"/><path d="M1290 437h8" stroke="#004899"/><path d="M1298 437h8" stroke="#004799"/><path d="M1306 437h8" stroke="#004599"/><path d="M1314 437h8" stroke="#004399"/><path d="M1322 437h8" stroke="#004299"/><path d="M1330 437h8" stroke="#004099"/><path d="M1338 437h8" stroke="#003e99"/><path d="M1346 437h8" stroke="#003c99"/><path d="M1354 437h8" stroke="#003b99"/><path d="M1362 437h8" stroke="#003999"/><path d="M1370 437h8" stroke="#003799"/><path d="M1378 437h8" stroke="#003599"/><path d="M1386 437h8" stroke="#003499"/><path d="M1394 437h8" stroke="#003299"/><path d="M1402 437h8" stroke="#003099"/><path d="M1410 437h8" stroke="#002e99"/><path d="M1418 437h8" stroke="#002c99"/><path d="M1426 437h8" stroke="#052a99"/><path d="M1434 437h8" stroke="#0c2899"/><path d="M1442 437h8" stroke="#132799"/><path d="M1554 437h8" stroke="#7f0a99"/><path d="M1562 437h8" stroke="#870899"/><path d="M1570 437h8" stroke="#900699"/><path d="M1578 437h8" stroke="#980399"/><path d="M1586 437h8" stroke="#990192"/><path d="M1594 437h8" stroke="#99008b"/><path d="M1602 437h8" stroke="#990084"/><path d="M1610 437h8" stroke="#99007e"/><path d="M1618 437h8" stroke="#990078"/><path d="M1626 437h8" stroke="#990073"/><path d="M1634 437h8" stroke="#99006e"/><path d="M1642 437h8" stroke="#99006a"/><path d="M1650 437h8" stroke="#906"/><path d="M1658 437h8" stroke="#990062"/><path d="M1666 437h8" stroke="#99005e"/><path d="M1674 437h8" stroke="#99005b"/><path d="M1682 437h8" stroke="#990057"/><path d="M1690 437h8" stroke="#990054"/><path d="M1698 437h8" stroke="#990052"/><path d="M1706 437h8" stroke="#99004f"/><path d="M1714 437h8" stroke="#99004c"/><path d="M1722 437h8" stroke="#99004a"/><path d="M1730 437h8" stroke="#990048"/><path d="M1738 437h8" stroke="#990046"/><path d="M1746 437h8" stroke="#904"/><path d="M1754 437h8" stroke="#990042"/><path d="M1762 437h8" stroke="#990040"/><path d="M1770 437h8" stroke="#99003e"/><path d="M1778 437h8" stroke="#99003c"/><path d="M1786 437h8" stroke="#99003b"/><path d="M1794 437h8" stroke="#990039"/><path d="M1802 437h8" stroke="#990038"/><path d="M1810 437h8" stroke="#990036"/><path d="M1818 437h8" stroke="#990035"/><path d="M1826 437h8" stroke="#990034"/><path d="M1290 445h8" stroke="#049"/><path d="M1298 445h8" stroke="#004299"/><path d="M1306 445h8" stroke="#004099"/><path d="M1314 445h8" stroke="#003f99"/><path d="M1322 445h8" stroke="#003d99"/><path d="M1330 445h8" stroke="#003b99"/><path d="M1338 445h8" stroke="#003a99"/><path d="M1346 445h8" stroke="#003899"/><path d="M1354 445h8" stroke="#003699"/><path d="M1362 445h8" stroke="#003599"/><path d="M1370 445h8" stroke="#039"/><path d="M1378 445h8" stroke="#003199"/><path d="M1386 445h8" stroke="#003099"/><path d="M1394 445h8" stroke="#002e99"/><path d="M1402 445h8" stroke="#002c99"/><path d="M1410 445h8" stroke="#002a99"/><path d="M1418 445h8" stroke="#002899"/><path d="M1426 445h8" stroke="#032799"/><path d="M1434 445h8" stroke="#0a2599"/><path d="M1442 445h8" stroke="#112399"/><path d="M1546 445h8" stroke="#700a99"/><path d="M1554 445h8" stroke="#780899"/><path d="M1562 445h8" stroke="#800599"/><path d="M1570 445h8" stroke="#880399"/><path d="M1578 445h8" stroke="#900199"/><path d="M1586 445h8" stroke="#980099"/><path d="M1594 445h8" stroke="#990092"/><path d="M1602 445h8" stroke="#99008b"/><path d="M1610 445h8" stroke="#990085"/><path d="M1618 445h8" stroke="#99007f"/><path d="M1626 445h8" stroke="#990079"/><path d="M1634 445h8" stroke="#990074"/><path d="M1642 445h8" stroke="#99006f"/><path d="M1650 445h8" stroke="#99006b"/><path d="M1658 445h8" stroke="#990067"/><path d="M1666 445h8" stroke="#990063"/><path d="M1674 445h8" stroke="#990060"/><path d="M1682 445h8" stroke="#99005c"/><path d="M1690 445h8" stroke="#990059"/><path d="M1698 445h8" stroke="#990056"/><path d="M1706 445h8" stroke="#990053"/><path d="M1714 445h8" stroke="#990051"/><path d="M1722 445h8" stroke="#99004e"/><path d="M1730 445h8" stroke="#99004c"/><path d="M1738 445h8" stroke="#99004a"/><path d="M1746 445h8" stroke="#990047"/><path d="M1754 445h8" stroke="#990045"/><path d="M1762 445h8" stroke="#990043"/><path d="M1770 445h8" stroke="#990042"/><path d="M1778 445h8" stroke="#990040"/><path d="M1786 445h8" stroke="#99003e"/><path d="M1794 445h8" stroke="#99003c"/><path d="M1802 445h8" stroke="#99003b"/><path d="M1810 445h8" stroke="#990039"/><path d="M1818 445h8" stroke="#990038"/><path d="M1298 453h8" stroke="#003e99"/><path d="M1306 453h8" stroke="#003c99"/><path d="M1314 453h8" stroke="#003b99"/><path d="M1322 453h8" stroke="#003999"/><path d="M1330 453h8" stroke="#003799"/><path d="M1338 453h8" stroke="#003699"/><path d="M1346 453h8" stroke="#003499"/><path d="M1354 453h8" stroke="#039"/><path d="M1362 453h8" stroke="#003199"/><path d="M1370 453h8" stroke="#002f99"/><path d="M1378 453h8" stroke="#002e99"/><path d="M1386 453h8" stroke="#002c99"/><path d="M1394 453h8" stroke="#002a99"/><path d="M1402 453h8" stroke="#002899"/><path d="M1410 453h8" stroke="#002799"/><path d="M1418 453h8" stroke="#002599"/><path d="M1426 453h8" stroke="#022399"/><path d="M1434 453h8" stroke="#092199"/><path d="M1442 453h8" stroke="#0f2099"/><path d="M1538 453h8" stroke="#630999"/><path d="M1546 453h8" stroke="#6b0799"/><path d="M1554 453h8" stroke="#720599"/><path d="M1562 453h8" stroke="#790399"/><path d="M1570 453h8" stroke="#810199"/><path d="M1578 453h8" stroke="#890099"/><path d="M1586 453h8" stroke="#900099"/><path d="M1594 453h8" stroke="#980099"/><path d="M1602 453h8" stroke="#990093"/><path d="M1610 453h8" stroke="#99008c"/><path d="M1618 453h8" stroke="#990085"/><path d="M1626 453h8" stroke="#990080"/><path d="M1634 453h8" stroke="#99007a"/><path d="M1642 453h8" stroke="#990075"/><path d="M1650 453h8" stroke="#990071"/><path d="M1658 453h8" stroke="#99006c"/><path d="M1666 453h8" stroke="#990068"/><path d="M1674 453h8" stroke="#990065"/><path d="M1682 453h8" stroke="#990061"/><path d="M1690 453h8" stroke="#99005e"/><path d="M1698 453h8" stroke="#99005b"/><path d="M1706 453h8" stroke="#990058"/><path d="M1714 453h8" stroke="#905"/><path d="M1722 453h8" stroke="#990052"/><path d="M1730 453h8" stroke="#990050"/><path d="M1738 453h8" stroke="#99004e"/><path d="M1746 453h8" stroke="#99004b"/><path d="M1754 453h8" stroke="#990049"/><path d="M1762 453h8" stroke="#990047"/><path d="M1770 453h8" stroke="#990045"/><path d="M1778 453h8" stroke="#990043"/><path d="M1786 453h8" stroke="#990041"/><path d="M1794 453h8" stroke="#990040"/><path d="M1802 453h8" stroke="#99003e"/><path d="M1810 453h8" stroke="#99003d"/><path d="M1298 461h8" stroke="#003a99"/><path d="M1306 461h8" stroke="#003899"/><path d="M1314 461h8" stroke="#003799"/><path d="M1322 461h8" stroke="#003599"/><path d="M1330 461h8" stroke="#003499"/><path d="M1338 461h8" stroke="#003299"/><path d="M1346 461h8" stroke="#003199"/><path d="M1354 461h8" stroke="#002f99"/><path d="M1362 461h8" stroke="#002d99"/><path d="M1370 461h8" stroke="#002c99"/><path d="M1378 461h8" stroke="#002a99"/><path d="M1386 461h8" stroke="#002899"/><path d="M1394 461h8" stroke="#002799"/><path d="M1402 461h8" stroke="#002599"/><path d="M1410 461h8" stroke="#002399"/><path d="M1418 461h8" stroke="#029"/><path d="M1426 461h8" stroke="#012099"/><path d="M1434 461h8" stroke="#071e99"/><path d="M1442 461h8" stroke="#0e1d99"/><path d="M1530 461h8" stroke="#570999"/><path d="M1538 461h8" stroke="#5e0799"/><path d="M1546 461h8" stroke="#650599"/><path d="M1554 461h8" stroke="#6c0399"/><path d="M1562 461h8" stroke="#730199"/><path d="M1570 461h8" stroke="#7b0099"/><path d="M1578 461h8" stroke="#820099"/><path d="M1586 461h8" stroke="#890099"/><path d="M1594 461h8" stroke="#900099"/><path d="M1602 461h8" stroke="#980099"/><path d="M1610 461h8" stroke="#990093"/><path d="M1618 461h8" stroke="#99008c"/><path d="M1626 461h8" stroke="#990086"/><path d="M1634 461h8" stroke="#990081"/><path d="M1642 461h8" stroke="#99007b"/><path d="M1650 461h8" stroke="#990076"/><path d="M1658 461h8" stroke="#990072"/><path d="M1666 461h8" stroke="#99006e"/><path d="M1674 461h8" stroke="#99006a"/><path d="M1682 461h8" stroke="#906"/><path d="M1690 461h8" stroke="#990063"/><path d="M1698 461h8" stroke="#99005f"/><path d="M1706 461h8" stroke="#99005c"/><path d="M1714 461h8" stroke="#990059"/><path d="M1722 461h8" stroke="#990057"/><path d="M1730 461h8" stroke="#990054"/><path d="M1738 461h8" stroke="#990051"/><path d="M1746 461h8" stroke="#99004f"/><path d="M1754 461h8" stroke="#99004d"/><path d="M1762 461h8" stroke="#99004b"/><path d="M1770 461h8" stroke="#990049"/><path d="M1778 461h8" stroke="#990047"/><path d="M1786 461h8" stroke="#990045"/><path d="M1794 461h8" stroke="#990043"/><path d="M1802 461h8" stroke="#990041"/><path d="M1306 469h8" stroke="#003599"/><path d="M1314 469h8" stroke="#039"/><path d="M1322 469h8" stroke="#003299"/><path d="M1330 469h8" stroke="#003099"/><path d="M1338 469h8" stroke="#002f99"/><path d="M1346 469h8" stroke="#002d99"/><path d="M1354 469h8" stroke="#002c99"/><path d="M1362 469h8" stroke="#002a99"/><path d="M1370 469h8" stroke="#002899"/><path d="M1378 469h8" stroke="#002799"/><path d="M1386 469h8" stroke="#002599"/><path d="M1394 469h8" stroke="#002499"/><path d="M1402 469h8" stroke="#029"/><path d="M1410 469h8" stroke="#002099"/><path d="M1418 469h8" stroke="#001f99"/><path d="M1426 469h8" stroke="#001d99"/><path d="M1434 469h8" stroke="#061c99"/><path d="M1442 469h8" stroke="#0c1a99"/><path d="M1522 469h8" stroke="#4c0899"/><path d="M1530 469h8" stroke="#530799"/><path d="M1538 469h8" stroke="#590599"/><path d="M1546 469h8" stroke="#600399"/><path d="M1554 469h8" stroke="#670199"/><path d="M1562 469h8" stroke="#6e0099"/><path d="M1570 469h8" stroke="#750099"/><path d="M1578 469h8" stroke="#7c0099"/><path d="M1586 469h8" stroke="#830099"/><path d="M1594 469h8" stroke="#8a0099"/><path d="M1602 469h8" stroke="#910099"/><path d="M1610 469h8" stroke="#980099"/><path d="M1618 469h8" stroke="#990093"/><path d="M1626 469h8" stroke="#99008d"/><path d="M1634 469h8" stroke="#990087"/><path d="M1642 469h8" stroke="#990081"/><path d="M1650 469h8" stroke="#99007c"/><path d="M1658 469h8" stroke="#907"/><path d="M1666 469h8" stroke="#990073"/><path d="M1674 469h8" stroke="#99006f"/><path d="M1682 469h8" stroke="#99006b"/><path d="M1690 469h8" stroke="#990067"/><path d="M1698 469h8" stroke="#990064"/><path d="M1706 469h8" stroke="#990061"/><path d="M1714 469h8" stroke="#99005e"/><path d="M1722 469h8" stroke="#99005b"/><path d="M1730 469h8" stroke="#990058"/><path d="M1738 469h8" stroke="#905"/><path d="M1746 469h8" stroke="#990053"/><path d="M1754 469h8" stroke="#990051"/><path d="M1762 469h8" stroke="#99004e"/><path d="M1770 469h8" stroke="#99004c"/><path d="M1778 469h8" stroke="#99004a"/><path d="M1786 469h8" stroke="#990048"/><path d="M1794 469h8" stroke="#990046"/><path d="M1306 477h8" stroke="#003199"/><path d="M1314 477h8" stroke="#003099"/><path d="M1322 477h8" stroke="#002e99"/><path d="M1330 477h8" stroke="#002d99"/><path d="M1338 477h8" stroke="#002b99"/><path d="M1346 477h8" stroke="#002a99"/><path d="M1354 477h8" stroke="#002899"/><path d="M1362 477h8" stroke="#002799"/><path d="M1370 477h8" stroke="#002599"/><path d="M1378 477h8" stroke="#002499"/><path d="M1386 477h8" stroke="#029"/><path d="M1394 477h8" stroke="#002199"/><path d="M1402 477h8" stroke="#001f99"/><path d="M1410 477h8" stroke="#001e99"/><path d="M1418 477h8" stroke="#001c99"/><path d="M1426 477h8" stroke="#001a99"/><path d="M1434 477h8" stroke="#051999"/><path d="M1442 477h8" stroke="#0b1799"/><path d="M1514 477h8" stroke="#420899"/><path d="M1522 477h8" stroke="#480699"/><path d="M1530 477h8" stroke="#4f0599"/><path d="M1538 477h8" stroke="#550399"/><path d="M1546 477h8" stroke="#5c0199"/><path d="M1554 477h8" stroke="#620099"/><path d="M1562 477h8" stroke="#690099"/><path d="M1570 477h8" stroke="#6f0099"/><path d="M1578 477h8" stroke="#760099"/><path d="M1586 477h8" stroke="#7d0099"/><path d="M1594 477h8" stroke="#830099"/><path d="M1602 477h8" stroke="#8a0099"/><path d="M1610 477h8" stroke="#910099"/><path d="M1618 477h8" stroke="#980099"/><path d="M1626 477h8" stroke="#990093"/><path d="M1634 477h8" stroke="#99008d"/><path d="M1642 477h8" stroke="#990087"/><path d="M1650 477h8" stroke="#990082"/><path d="M1658 477h8" stroke="#99007d"/><path d="M1666 477h8" stroke="#990078"/><path d="M1674 477h8" stroke="#990074"/><path d="M1682 477h8" stroke="#990070"/><path d="M1690 477h8" stroke="#99006c"/><path d="M1698 477h8" stroke="#990069"/><path d="M1706 477h8" stroke="#990065"/><path d="M1714 477h8" stroke="#990062"/><path d="M1722 477h8" stroke="#99005f"/><path d="M1730 477h8" stroke="#99005c"/><path d="M1738 477h8" stroke="#990059"/><path d="M1746 477h8" stroke="#990057"/><path d="M1754 477h8" stroke="#990054"/><path d="M1762 477h8" stroke="#990052"/><path d="M1770 477h8" stroke="#990050"/><path d="M1778 477h8" stroke="#99004e"/><path d="M1786 477h8" stroke="#99004c"/><path d="M1314 485h8" stroke="#002d99"/><path d="M1322 485h8" stroke="#002b99"/><path d="M1330 485h8" stroke="#002a99"/><path d="M1338 485h8" stroke="#002899"/><path d="M1346 485h8" stroke="#002799"/><path d="M1354 485h8" stroke="#002699"/><path d="M1362 485h8" stroke="#002499"/><path d="M1370 485h8" stroke="#002399"/><path d="M1378 485h8" stroke="#002199"/><path d="M1386 485h8" stroke="#002099"/><path d="M1394 485h8" stroke="#001e99"/><path d="M1402 485h8" stroke="#001d99"/><path d="M1410 485h8" stroke="#001b99"/><path d="M1418 485h8" stroke="#001a99"/><path d="M1426 485h8" stroke="#001899"/><path d="M1434 485h8" stroke="#041699"/><path d="M1442 485h8" stroke="#0a1599"/><path d="M1450 485h8" stroke="#0f1399"/><path d="M1506 485h8" stroke="#390899"/><path d="M1514 485h8" stroke="#3f0699"/><path d="M1522 485h8" stroke="#450599"/><path d="M1530 485h8" stroke="#4b0399"/><path d="M1538 485h8" stroke="#510199"/><path d="M1546 485h8" stroke="#570099"/><path d="M1554 485h8" stroke="#5e0099"/><path d="M1562 485h8" stroke="#640099"/><path d="M1570 485h8" stroke="#6a0099"/><path d="M1578 485h8" stroke="#710099"/><path d="M1586 485h8" stroke="#709"/><path d="M1594 485h8" stroke="#7e0099"/><path d="M1602 485h8" stroke="#840099"/><path d="M1610 485h8" stroke="#8b0099"/><path d="M1618 485h8" stroke="#910099"/><path d="M1626 485h8" stroke="#980099"/><path d="M1634 485h8" stroke="#990094"/><path d="M1642 485h8" stroke="#99008e"/><path d="M1650 485h8" stroke="#908"/><path d="M1658 485h8" stroke="#990083"/><path d="M1666 485h8" stroke="#99007e"/><path d="M1674 485h8" stroke="#990079"/><path d="M1682 485h8" stroke="#990075"/><path d="M1690 485h8" stroke="#990071"/><path d="M1698 485h8" stroke="#99006d"/><path d="M1706 485h8" stroke="#99006a"/><path d="M1714 485h8" stroke="#990067"/><path d="M1722 485h8" stroke="#990063"/><path d="M1730 485h8" stroke="#990060"/><path d="M1738 485h8" stroke="#99005e"/><path d="M1746 485h8" stroke="#99005b"/><path d="M1754 485h8" stroke="#990058"/><path d="M1762 485h8" stroke="#990056"/><path d="M1770 485h8" stroke="#990054"/><path d="M1778 485h8" stroke="#990051"/><path d="M1314 493h8" stroke="#002a99"/><path d="M1322 493h8" stroke="#002899"/><path d="M1330 493h8" stroke="#002799"/><path d="M1338 493h8" stroke="#002699"/><path d="M1346 493h8" stroke="#002499"/><path d="M1354 493h8" stroke="#002399"/><path d="M1362 493h8" stroke="#002199"/><path d="M1370 493h8" stroke="#002099"/><path d="M1378 493h8" stroke="#001f99"/><path d="M1386 493h8" stroke="#001d99"/><path d="M1394 493h8" stroke="#001c99"/><path d="M1402 493h8" stroke="#001a99"/><path d="M1410 493h8" stroke="#001999"/><path d="M1418 493h8" stroke="#001799"/><path d="M1426 493h8" stroke="#001699"/><path d="M1434 493h8" stroke="#031499"/><path d="M1442 493h8" stroke="#081399"/><path d="M1450 493h8" stroke="#0e1199"/><path d="M1498 493h8" stroke="#300899"/><path d="M1506 493h8" stroke="#360699"/><path d="M1514 493h8" stroke="#3c0499"/><path d="M1522 493h8" stroke="#410399"/><path d="M1530 493h8" stroke="#470199"/><path d="M1538 493h8" stroke="#4d0099"/><path d="M1546 493h8" stroke="#530099"/><path d="M1554 493h8" stroke="#590099"/><path d="M1562 493h8" stroke="#5f0099"/><path d="M1570 493h8" stroke="#609"/><path d="M1578 493h8" stroke="#6c0099"/><path d="M1586 493h8" stroke="#720099"/><path d="M1594 493h8" stroke="#780099"/><path d="M1602 493h8" stroke="#7e0099"/><path d="M1610 493h8" stroke="#850099"/><path d="M1618 493h8" stroke="#8b0099"/><path d="M1626 493h8" stroke="#910099"/><path d="M1634 493h8" stroke="#980099"/><path d="M1642 493h8" stroke="#990094"/><path d="M1650 493h8" stroke="#99008e"/><path d="M1658 493h8" stroke="#990089"/><path d="M1666 493h8" stroke="#990083"/><path d="M1674 493h8" stroke="#99007f"/><path d="M1682 493h8" stroke="#99007a"/><path d="M1690 493h8" stroke="#990076"/><path d="M1698 493h8" stroke="#990072"/><path d="M1706 493h8" stroke="#99006e"/><path d="M1714 493h8" stroke="#99006b"/><path d="M1722 493h8" stroke="#990068"/><path d="M1730 493h8" stroke="#990065"/><path d="M1738 493h8" stroke="#990062"/><path d="M1746 493h8" stroke="#99005f"/><path d="M1754 493h8" stroke="#99005c"/><path d="M1762 493h8" stroke="#99005a"/><path d="M1770 493h8" stroke="#990057"/><path d="M1322 501h8" stroke="#002699"/><path d="M1330 501h8" stroke="#002499"/><path d="M1338 501h8" stroke="#002399"/><path d="M1346 501h8" stroke="#029"/><path d="M1354 501h8" stroke="#002099"/><path d="M1362 501h8" stroke="#001f99"/><path d="M1370 501h8" stroke="#001d99"/><path d="M1378 501h8" stroke="#001c99"/><path d="M1386 501h8" stroke="#001b99"/><path d="M1394 501h8" stroke="#001999"/><path d="M1402 501h8" stroke="#001899"/><path d="M1410 501h8" stroke="#001699"/><path d="M1418 501h8" stroke="#001599"/><path d="M1426 501h8" stroke="#001399"/><path d="M1434 501h8" stroke="#021299"/><path d="M1442 501h8" stroke="#071099"/><path d="M1450 501h8" stroke="#0d0f99"/><path d="M1490 501h8" stroke="#280799"/><path d="M1498 501h8" stroke="#2e0699"/><path d="M1506 501h8" stroke="#330499"/><path d="M1514 501h8" stroke="#390399"/><path d="M1522 501h8" stroke="#3e0199"/><path d="M1530 501h8" stroke="#409"/><path d="M1538 501h8" stroke="#4a0099"/><path d="M1546 501h8" stroke="#500099"/><path d="M1554 501h8" stroke="#509"/><path d="M1562 501h8" stroke="#5b0099"/><path d="M1570 501h8" stroke="#610099"/><path d="M1578 501h8" stroke="#670099"/><path d="M1586 501h8" stroke="#6d0099"/><path d="M1594 501h8" stroke="#730099"/><path d="M1602 501h8" stroke="#790099"/><path d="M1610 501h8" stroke="#7f0099"/><path d="M1618 501h8" stroke="#850099"/><path d="M1626 501h8" stroke="#8b0099"/><path d="M1634 501h8" stroke="#920099"/><path d="M1642 501h8" stroke="#980099"/><path d="M1650 501h8" stroke="#990094"/><path d="M1658 501h8" stroke="#99008e"/><path d="M1666 501h8" stroke="#990089"/><path d="M1674 501h8" stroke="#990084"/><path d="M1682 501h8" stroke="#99007f"/><path d="M1690 501h8" stroke="#99007b"/><path d="M1698 501h8" stroke="#907"/><path d="M1706 501h8" stroke="#990073"/><path d="M1714 501h8" stroke="#990070"/><path d="M1722 501h8" stroke="#99006c"/><path d="M1730 501h8" stroke="#990069"/><path d="M1738 501h8" stroke="#906"/><path d="M1746 501h8" stroke="#990063"/><path d="M1754 501h8" stroke="#990060"/><path d="M1762 501h8" stroke="#99005d"/><path d="M1330 509h8" stroke="#029"/><path d="M1338 509h8" stroke="#002199"/><path d="M1346 509h8" stroke="#001f99"/><path d="M1354 509h8" stroke="#001e99"/><path d="M1362 509h8" stroke="#001d99"/><path d="M1370 509h8" stroke="#001b99"/><path d="M1378 509h8" stroke="#001a99"/><path d="M1386 509h8" stroke="#001899"/><path d="M1394 509h8" stroke="#001799"/><path d="M1402 509h8" stroke="#001699"/><path d="M1410 509h8" stroke="#001499"/><path d="M1418 509h8" stroke="#001399"/><path d="M1426 509h8" stroke="#019"/><path d="M1434 509h8" stroke="#011099"/><path d="M1442 509h8" stroke="#060e99"/><path d="M1450 509h8" stroke="#0b0d99"/><path d="M1482 509h8" stroke="#200799"/><path d="M1490 509h8" stroke="#260699"/><path d="M1498 509h8" stroke="#2b0499"/><path d="M1506 509h8" stroke="#310399"/><path d="M1514 509h8" stroke="#360199"/><path d="M1522 509h8" stroke="#3c0099"/><path d="M1530 509h8" stroke="#410099"/><path d="M1538 509h8" stroke="#470099"/><path d="M1546 509h8" stroke="#4c0099"/><path d="M1554 509h8" stroke="#520099"/><path d="M1562 509h8" stroke="#570099"/><path d="M1570 509h8" stroke="#5d0099"/><path d="M1578 509h8" stroke="#630099"/><path d="M1586 509h8" stroke="#690099"/><path d="M1594 509h8" stroke="#6e0099"/><path d="M1602 509h8" stroke="#740099"/><path d="M1610 509h8" stroke="#7a0099"/><path d="M1618 509h8" stroke="#800099"/><path d="M1626 509h8" stroke="#860099"/><path d="M1634 509h8" stroke="#8c0099"/><path d="M1642 509h8" stroke="#920099"/><path d="M1650 509h8" stroke="#980099"/><path d="M1658 509h8" stroke="#990094"/><path d="M1666 509h8" stroke="#99008f"/><path d="M1674 509h8" stroke="#99008a"/><path d="M1682 509h8" stroke="#990085"/><path d="M1690 509h8" stroke="#990080"/><path d="M1698 509h8" stroke="#99007c"/><path d="M1706 509h8" stroke="#990078"/><path d="M1714 509h8" stroke="#990074"/><path d="M1722 509h8" stroke="#990071"/><path d="M1730 509h8" stroke="#99006d"/><path d="M1738 509h8" stroke="#99006a"/><path d="M1746 509h8" stroke="#990067"/><path d="M1754 509h8" stroke="#990064"/><path d="M1330 517h8" stroke="#002099"/><path d="M1338 517h8" stroke="#001e99"/><path d="M1346 517h8" stroke="#001d99"/><path d="M1354 517h8" stroke="#001c99"/><path d="M1362 517h8" stroke="#001a99"/><path d="M1370 517h8" stroke="#001999"/><path d="M1378 517h8" stroke="#001899"/><path d="M1386 517h8" stroke="#001699"/><path d="M1394 517h8" stroke="#001599"/><path d="M1402 517h8" stroke="#001499"/><path d="M1410 517h8" stroke="#001299"/><path d="M1418 517h8" stroke="#019"/><path d="M1426 517h8" stroke="#000f99"/><path d="M1434 517h8" stroke="#000e99"/><path d="M1442 517h8" stroke="#050d99"/><path d="M1450 517h8" stroke="#0a0b99"/><path d="M1474 517h8" stroke="#1a0799"/><path d="M1482 517h8" stroke="#1f0599"/><path d="M1490 517h8" stroke="#240499"/><path d="M1498 517h8" stroke="#290399"/><path d="M1506 517h8" stroke="#2e0199"/><path d="M1514 517h8" stroke="#340099"/><path d="M1522 517h8" stroke="#390099"/><path d="M1530 517h8" stroke="#3e0099"/><path d="M1538 517h8" stroke="#409"/><path d="M1546 517h8" stroke="#490099"/><path d="M1554 517h8" stroke="#4e0099"/><path d="M1562 517h8" stroke="#540099"/><path d="M1570 517h8" stroke="#590099"/><path d="M1578 517h8" stroke="#5f0099"/><path d="M1586 517h8" stroke="#640099"/><path d="M1594 517h8" stroke="#6a0099"/><path d="M1602 517h8" stroke="#700099"/><path d="M1610 517h8" stroke="#750099"/><path d="M1618 517h8" stroke="#7b0099"/><path d="M1626 517h8" stroke="#810099"/><path d="M1634 517h8" stroke="#860099"/><path d="M1642 517h8" stroke="#8c0099"/><path d="M1650 517h8" stroke="#920099"/><path d="M1658 517h8" stroke="#980099"/><path d="M1666 517h8" stroke="#990094"/><path d="M1674 517h8" stroke="#99008f"/><path d="M1682 517h8" stroke="#99008a"/><path d="M1690 517h8" stroke="#990085"/><path d="M1698 517h8" stroke="#990081"/><path d="M1706 517h8" stroke="#99007d"/><path d="M1714 517h8" stroke="#990079"/><path d="M1722 517h8" stroke="#990075"/><path d="M1730 517h8" stroke="#990071"/><path d="M1738 517h8" stroke="#99006e"/><path d="M1746 517h8" stroke="#99006b"/><path d="M1338 525h8" stroke="#001c99"/><path d="M1346 525h8" stroke="#001b99"/><path d="M1354 525h8" stroke="#001a99"/><path d="M1362 525h8" stroke="#001899"/><path d="M1370 525h8" stroke="#001799"/><path d="M1378 525h8" stroke="#001699"/><path d="M1386 525h8" stroke="#001499"/><path d="M1394 525h8" stroke="#001399"/><path d="M1402 525h8" stroke="#001299"/><path d="M1410 525h8" stroke="#001099"/><path d="M1418 525h8" stroke="#000f99"/><path d="M1426 525h8" stroke="#000e99"/><path d="M1434 525h8" stroke="#000c99"/><path d="M1442 525h8" stroke="#040b99"/><path d="M1450 525h8" stroke="#090a99"/><path d="M1466 525h8" stroke="#130799"/><path d="M1474 525h8" stroke="#180599"/><path d="M1482 525h8" stroke="#1d0499"/><path d="M1490 525h8" stroke="#220399"/><path d="M1498 525h8" stroke="#270199"/><path d="M1506 525h8" stroke="#2c0099"/><path d="M1514 525h8" stroke="#310099"/><path d="M1522 525h8" stroke="#360099"/><path d="M1530 525h8" stroke="#3b0099"/><path d="M1538 525h8" stroke="#410099"/><path d="M1546 525h8" stroke="#460099"/><path d="M1554 525h8" stroke="#4b0099"/><path d="M1562 525h8" stroke="#500099"/><path d="M1570 525h8" stroke="#560099"/><path d="M1578 525h8" stroke="#5b0099"/><path d="M1586 525h8" stroke="#600099"/><path d="M1594 525h8" stroke="#609"/><path d="M1602 525h8" stroke="#6b0099"/><path d="M1610 525h8" stroke="#710099"/><path d="M1618 525h8" stroke="#760099"/><path d="M1626 525h8" stroke="#7c0099"/><path d="M1634 525h8" stroke="#810099"/><path d="M1642 525h8" stroke="#870099"/><path d="M1650 525h8" stroke="#8d0099"/><path d="M1658 525h8" stroke="#920099"/><path d="M1666 525h8" stroke="#980099"/><path d="M1674 525h8" stroke="#990095"/><path d="M1682 525h8" stroke="#99008f"/><path d="M1690 525h8" stroke="#99008a"/><path d="M1698 525h8" stroke="#990086"/><path d="M1706 525h8" stroke="#990081"/><path d="M1714 525h8" stroke="#99007d"/><path d="M1722 525h8" stroke="#990079"/><path d="M1730 525h8" stroke="#990076"/><path d="M1738 525h8" stroke="#990072"/><path d="M1338 533h8" stroke="#001a99"/><path d="M1346 533h8" stroke="#001999"/><path d="M1354 533h8" stroke="#001899"/><path d="M1362 533h8" stroke="#001699"/><path d="M1370 533h8" stroke="#001599"/><path d="M1378 533h8" stroke="#001499"/><path d="M1386 533h8" stroke="#001299"/><path d="M1394 533h8" stroke="#019"/><path d="M1402 533h8" stroke="#001099"/><path d="M1410 533h8" stroke="#000f99"/><path d="M1418 533h8" stroke="#000d99"/><path d="M1426 533h8" stroke="#000c99"/><path d="M1434 533h8" stroke="#000b99"/><path d="M1442 533h8" stroke="#030999"/><path d="M1450 533h8" stroke="#080899"/><path d="M1458 533h8" stroke="#0d0799"/><path d="M1466 533h8" stroke="#120599"/><path d="M1474 533h8" stroke="#160499"/><path d="M1482 533h8" stroke="#1b0299"/><path d="M1490 533h8" stroke="#200199"/><path d="M1498 533h8" stroke="#250099"/><path d="M1506 533h8" stroke="#2a0099"/><path d="M1514 533h8" stroke="#2f0099"/><path d="M1522 533h8" stroke="#340099"/><path d="M1530 533h8" stroke="#390099"/><path d="M1538 533h8" stroke="#3e0099"/><path d="M1546 533h8" stroke="#430099"/><path d="M1554 533h8" stroke="#480099"/><path d="M1562 533h8" stroke="#4d0099"/><path d="M1570 533h8" stroke="#520099"/><path d="M1578 533h8" stroke="#570099"/><path d="M1586 533h8" stroke="#5d0099"/><path d="M1594 533h8" stroke="#620099"/><path d="M1602 533h8" stroke="#670099"/><path d="M1610 533h8" stroke="#6c0099"/><path d="M1618 533h8" stroke="#720099"/><path d="M1626 533h8" stroke="#709"/><path d="M1634 533h8" stroke="#7d0099"/><path d="M1642 533h8" stroke="#820099"/><path d="M1650 533h8" stroke="#870099"/><path d="M1658 533h8" stroke="#8d0099"/><path d="M1666 533h8" stroke="#920099"/><path d="M1674 533h8" stroke="#980099"/><path d="M1682 533h8" stroke="#990095"/><path d="M1690 533h8" stroke="#990090"/><path d="M1698 533h8" stroke="#99008b"/><path d="M1706 533h8" stroke="#990086"/><path d="M1714 533h8" stroke="#990082"/><path d="M1722 533h8" stroke="#99007e"/><path d="M1730 533h8" stroke="#99007a"/><path d="M1346 541h8" stroke="#001799"/><path d="M1354 541h8" stroke="#001699"/><path d="M1362 541h8" stroke="#001499"/><path d="M1370 541h8" stroke="#001399"/><path d="M1378 541h8" stroke="#001299"/><path d="M1386 541h8" stroke="#019"/><path d="M1394 541h8" stroke="#000f99"/><path d="M1402 541h8" stroke="#000e99"/><path d="M1410 541h8" stroke="#000d99"/><path d="M1418 541h8" stroke="#000c99"/><path d="M1426 541h8" stroke="#000a99"/><path d="M1434 541h8" stroke="#000999"/><path d="M1442 541h8" stroke="#030899"/><path d="M1450 541h8" stroke="#070699"/><path d="M1458 541h8" stroke="#0c0599"/><path d="M1466 541h8" stroke="#100499"/><path d="M1474 541h8" stroke="#150299"/><path d="M1482 541h8" stroke="#1a0199"/><path d="M1490 541h8" stroke="#1f0099"/><path d="M1498 541h8" stroke="#230099"/><path d="M1506 541h8" stroke="#280099"/><path d="M1514 541h8" stroke="#2d0099"/><path d="M1522 541h8" stroke="#320099"/><path d="M1530 541h8" stroke="#370099"/><path d="M1538 541h8" stroke="#3b0099"/><path d="M1546 541h8" stroke="#400099"/><path d="M1554 541h8" stroke="#450099"/><path d="M1562 541h8" stroke="#4a0099"/><path d="M1570 541h8" stroke="#4f0099"/><path d="M1578 541h8" stroke="#540099"/><path d="M1586 541h8" stroke="#590099"/><path d="M1594 541h8" stroke="#5e0099"/><path d="M1602 541h8" stroke="#630099"/><path d="M1610 541h8" stroke="#680099"/><path d="M1618 541h8" stroke="#6e0099"/><path d="M1626 541h8" stroke="#730099"/><path d="M1634 541h8" stroke="#780099"/><path d="M1642 541h8" stroke="#7d0099"/><path d="M1650 541h8" stroke="#830099"/><path d="M1658 541h8" stroke="#809"/><path d="M1666 541h8" stroke="#8d0099"/><path d="M1674 541h8" stroke="#920099"/><path d="M1682 541h8" stroke="#980099"/><path d="M1690 541h8" stroke="#990095"/><path d="M1698 541h8" stroke="#990090"/><path d="M1706 541h8" stroke="#99008b"/><path d="M1714 541h8" stroke="#990087"/><path d="M1722 541h8" stroke="#990083"/><path d="M1354 549h8" stroke="#001499"/><path d="M1362 549h8" stroke="#001399"/><path d="M1370 549h8" stroke="#019"/><path d="M1378 549h8" stroke="#001099"/><path d="M1386 549h8" stroke="#000f99"/><path d="M1394 549h8" stroke="#000e99"/><path d="M1402 549h8" stroke="#000c99"/><path d="M1410 549h8" stroke="#000b99"/><path d="M1418 549h8" stroke="#000a99"/><path d="M1426 549h8" stroke="#000999"/><path d="M1434 549h8" stroke="#000799"/><path d="M1442 549h8" stroke="#020699"/><path d="M1450 549h8" stroke="#060599"/><path d="M1458 549h8" stroke="#0b0499"/><path d="M1466 549h8" stroke="#0f0299"/><path d="M1474 549h8" stroke="#140199"/><path d="M1482 549h8" stroke="#180099"/><path d="M1490 549h8" stroke="#1d0099"/><path d="M1498 549h8" stroke="#209"/><path d="M1506 549h8" stroke="#260099"/><path d="M1514 549h8" stroke="#2b0099"/><path d="M1522 549h8" stroke="#300099"/><path d="M1530 549h8" stroke="#340099"/><path d="M1538 549h8" stroke="#390099"/><path d="M1546 549h8" stroke="#3e0099"/><path d="M1554 549h8" stroke="#430099"/><path d="M1562 549h8" stroke="#470099"/><path d="M1570 549h8" stroke="#4c0099"/><path d="M1578 549h8" stroke="#510099"/><path d="M1586 549h8" stroke="#560099"/><path d="M1594 549h8" stroke="#5b0099"/><path d="M1602 549h8" stroke="#600099"/><path d="M1610 549h8" stroke="#650099"/><path d="M1618 549h8" stroke="#6a0099"/><path d="M1626 549h8" stroke="#6f0099"/><path d="M1634 549h8" stroke="#740099"/><path d="M1642 549h8" stroke="#790099"/><path d="M1650 549h8" stroke="#7e0099"/><path d="M1658 549h8" stroke="#830099"/><path d="M1666 549h8" stroke="#809"/><path d="M1674 549h8" stroke="#8d0099"/><path d="M1682 549h8" stroke="#930099"/><path d="M1690 549h8" stroke="#980099"/><path d="M1698 549h8" stroke="#990095"/><path d="M1706 549h8" stroke="#990090"/><path d="M1714 549h8" stroke="#99008c"/><path d="M1354 557h8" stroke="#001299"/><path d="M1362 557h8" stroke="#019"/><path d="M1370 557h8" stroke="#001099"/><path d="M1378 557h8" stroke="#000f99"/><path d="M1386 557h8" stroke="#000d99"/><path d="M1394 557h8" stroke="#000c99"/><path d="M1402 557h8" stroke="#000b99"/><path d="M1410 557h8" stroke="#000a99"/><path d="M1418 557h8" stroke="#000999"/><path d="M1426 557h8" stroke="#000799"/><path d="M1434 557h8" stroke="#000699"/><path d="M1442 557h8" stroke="#010599"/><path d="M1450 557h8" stroke="#050499"/><path d="M1458 557h8" stroke="#0a0299"/><path d="M1466 557h8" stroke="#0e0199"/><path d="M1474 557h8" stroke="#130099"/><path d="M1482 557h8" stroke="#170099"/><path d="M1490 557h8" stroke="#1b0099"/><path d="M1498 557h8" stroke="#200099"/><path d="M1506 557h8" stroke="#240099"/><path d="M1514 557h8" stroke="#290099"/><path d="M1522 557h8" stroke="#2e0099"/><path d="M1530 557h8" stroke="#320099"/><path d="M1538 557h8" stroke="#370099"/><path d="M1546 557h8" stroke="#3b0099"/><path d="M1554 557h8" stroke="#400099"/><path d="M1562 557h8" stroke="#450099"/><path d="M1570 557h8" stroke="#490099"/><path d="M1578 557h8" stroke="#4e0099"/><path d="M1586 557h8" stroke="#530099"/><path d="M1594 557h8" stroke="#580099"/><path d="M1602 557h8" stroke="#5c0099"/><path d="M1610 557h8" stroke="#610099"/><path d="M1618 557h8" stroke="#609"/><path d="M1626 557h8" stroke="#6b0099"/><path d="M1634 557h8" stroke="#700099"/><path d="M1642 557h8" stroke="#750099"/><path d="M1650 557h8" stroke="#7a0099"/><path d="M1658 557h8" stroke="#7f0099"/><path d="M1666 557h8" stroke="#840099"/><path d="M1674 557h8" stroke="#890099"/><path d="M1682 557h8" stroke="#8e0099"/><path d="M1690 557h8" stroke="#930099"/><path d="M1698 557h8" stroke="#980099"/><path d="M1706 557h8" stroke="#990095"/><path d="M1362 565h8" stroke="#000f99"/><path d="M1370 565h8" stroke="#000e99"/><path d="M1378 565h8" stroke="#000d99"/><path d="M1386 565h8" stroke="#000c99"/><path d="M1394 565h8" stroke="#000b99"/><path d="M1402 565h8" stroke="#000999"/><path d="M1410 565h8" stroke="#000899"/><path d="M1418 565h8" stroke="#000799"/><path d="M1426 565h8" stroke="#000699"/><path d="M1434 565h8" stroke="#000599"/><path d="M1442 565h8" stroke="#000399"/><path d="M1450 565h8" stroke="#050299"/><path d="M1458 565h8" stroke="#090199"/><path d="M1466 565h8" stroke="#0d0099"/><path d="M1474 565h8" stroke="#109"/><path d="M1482 565h8" stroke="#160099"/><path d="M1490 565h8" stroke="#1a0099"/><path d="M1498 565h8" stroke="#1e0099"/><path d="M1506 565h8" stroke="#230099"/><path d="M1514 565h8" stroke="#270099"/><path d="M1522 565h8" stroke="#2c0099"/><path d="M1530 565h8" stroke="#300099"/><path d="M1538 565h8" stroke="#350099"/><path d="M1546 565h8" stroke="#390099"/><path d="M1554 565h8" stroke="#3e0099"/><path d="M1562 565h8" stroke="#420099"/><path d="M1570 565h8" stroke="#470099"/><path d="M1578 565h8" stroke="#4b0099"/><path d="M1586 565h8" stroke="#500099"/><path d="M1594 565h8" stroke="#540099"/><path d="M1602 565h8" stroke="#590099"/><path d="M1610 565h8" stroke="#5e0099"/><path d="M1618 565h8" stroke="#630099"/><path d="M1626 565h8" stroke="#670099"/><path d="M1634 565h8" stroke="#6c0099"/><path d="M1642 565h8" stroke="#710099"/><path d="M1650 565h8" stroke="#760099"/><path d="M1658 565h8" stroke="#7a0099"/><path d="M1666 565h8" stroke="#7f0099"/><path d="M1674 565h8" stroke="#840099"/><path d="M1682 565h8" stroke="#890099"/><path d="M1690 565h8" stroke="#8e0099"/><path d="M1698 565h8" stroke="#930099"/><path d="M1370 573h8" stroke="#000d99"/><path d="M1378 573h8" stroke="#000c99"/><path d="M1386 573h8" stroke="#000a99"/><path d="M1394 573h8" stroke="#000999"/><path d="M1402 573h8" stroke="#000899"/><path d="M1410 573h8" stroke="#000799"/><path d="M1418 573h8" stroke="#000699"/><path d="M1426 573h8" stroke="#000599"/><path d="M1434 573h8" stroke="#000399"/><path d="M1442 573h8" stroke="#000299"/><path d="M1450 573h8" stroke="#040199"/><path d="M1458 573h8" stroke="#080099"/><path d="M1466 573h8" stroke="#0c0099"/><path d="M1474 573h8" stroke="#100099"/><path d="M1482 573h8" stroke="#140099"/><path d="M1490 573h8" stroke="#190099"/><path d="M1498 573h8" stroke="#1d0099"/><path d="M1506 573h8" stroke="#210099"/><path d="M1514 573h8" stroke="#260099"/><path d="M1522 573h8" stroke="#2a0099"/><path d="M1530 573h8" stroke="#2e0099"/><path d="M1538 573h8" stroke="#309"/><path d="M1546 573h8" stroke="#370099"/><path d="M1554 573h8" stroke="#3b0099"/><path d="M1562 573h8" stroke="#400099"/><path d="M1570 573h8" stroke="#409"/><path d="M1578 573h8" stroke="#490099"/><path d="M1586 573h8" stroke="#4d0099"/><path d="M1594 573h8" stroke="#520099"/><path d="M1602 573h8" stroke="#560099"/><path d="M1610 573h8" stroke="#5b0099"/><path d="M1618 573h8" stroke="#5f0099"/><path d="M1626 573h8" stroke="#640099"/><path d="M1634 573h8" stroke="#680099"/><path d="M1642 573h8" stroke="#6d0099"/><path d="M1650 573h8" stroke="#720099"/><path d="M1658 573h8" stroke="#760099"/><path d="M1666 573h8" stroke="#7b0099"/><path d="M1674 573h8" stroke="#800099"/><path d="M1682 573h8" stroke="#850099"/><path d="M1690 573h8" stroke="#890099"/><path d="M1698 573h8" stroke="#8e0099"/><path d="M1370 581h8" stroke="#000b99"/><path d="M1378 581h8" stroke="#000a99"/><path d="M1386 581h8" stroke="#000999"/><path d="M1394 581h8" stroke="#000899"/><path d="M1402 581h8" stroke="#000799"/><path d="M1410 581h8" stroke="#000699"/><path d="M1418 581h8" stroke="#000599"/><path d="M1426 581h8" stroke="#000399"/><path d="M1434 581h8" stroke="#000299"/><path d="M1442 581h8" stroke="#000199"/><path d="M1450 581h8" stroke="#030099"/><path d="M1458 581h8" stroke="#070099"/><path d="M1466 581h8" stroke="#0b0099"/><path d="M1474 581h8" stroke="#0f0099"/><path d="M1482 581h8" stroke="#130099"/><path d="M1490 581h8" stroke="#170099"/><path d="M1498 581h8" stroke="#1c0099"/><path d="M1506 581h8" stroke="#200099"/><path d="M1514 581h8" stroke="#240099"/><path d="M1522 581h8" stroke="#280099"/><path d="M1530 581h8" stroke="#2c0099"/><path d="M1538 581h8" stroke="#310099"/><path d="M1546 581h8" stroke="#350099"/><path d="M1554 581h8" stroke="#390099"/><path d="M1562 581h8" stroke="#3d0099"/><path d="M1570 581h8" stroke="#420099"/><path d="M1578 581h8" stroke="#460099"/><path d="M1586 581h8" stroke="#4a0099"/><path d="M1594 581h8" stroke="#4f0099"/><path d="M1602 581h8" stroke="#530099"/><path d="M1610 581h8" stroke="#580099"/><path d="M1618 581h8" stroke="#5c0099"/><path d="M1626 581h8" stroke="#610099"/><path d="M1634 581h8" stroke="#650099"/><path d="M1642 581h8" stroke="#6a0099"/><path d="M1650 581h8" stroke="#6e0099"/><path d="M1658 581h8" stroke="#730099"/><path d="M1666 581h8" stroke="#709"/><path d="M1674 581h8" stroke="#7c0099"/><path d="M1682 581h8" stroke="#800099"/><path d="M1690 581h8" stroke="#850099"/><path d="M1378 589h8" stroke="#000999"/><path d="M1386 589h8" stroke="#000899"/><path d="M1394 589h8" stroke="#000799"/><path d="M1402 589h8" stroke="#000699"/><path d="M1410 589h8" stroke="#000499"/><path d="M1418 589h8" stroke="#000399"/><path d="M1426 589h8" stroke="#000299"/><path d="M1434 589h8" stroke="#000199"/><path d="M1442 589h8" stroke="#009"/><path d="M1450 589h8" stroke="#020099"/><path d="M1458 589h8" stroke="#060099"/><path d="M1466 589h8" stroke="#0a0099"/><path d="M1474 589h8" stroke="#0e0099"/><path d="M1482 589h8" stroke="#120099"/><path d="M1490 589h8" stroke="#160099"/><path d="M1498 589h8" stroke="#1a0099"/><path d="M1506 589h8" stroke="#1e0099"/><path d="M1514 589h8" stroke="#209"/><path d="M1522 589h8" stroke="#260099"/><path d="M1530 589h8" stroke="#2b0099"/><path d="M1538 589h8" stroke="#2f0099"/><path d="M1546 589h8" stroke="#309"/><path d="M1554 589h8" stroke="#370099"/><path d="M1562 589h8" stroke="#3b0099"/><path d="M1570 589h8" stroke="#3f0099"/><path d="M1578 589h8" stroke="#409"/><path d="M1586 589h8" stroke="#480099"/><path d="M1594 589h8" stroke="#4c0099"/><path d="M1602 589h8" stroke="#500099"/><path d="M1610 589h8" stroke="#509"/><path d="M1618 589h8" stroke="#590099"/><path d="M1626 589h8" stroke="#5d0099"/><path d="M1634 589h8" stroke="#620099"/><path d="M1642 589h8" stroke="#609"/><path d="M1650 589h8" stroke="#6b0099"/><path d="M1658 589h8" stroke="#6f0099"/><path d="M1666 589h8" stroke="#730099"/><path d="M1674 589h8" stroke="#780099"/><path d="M1682 589h8" stroke="#7c0099"/><path d="M1386 597h8" stroke="#000699"/><path d="M1394 597h8" stroke="#000599"/><path d="M1402 597h8" stroke="#000499"/><path d="M1410 597h8" stroke="#000399"/><path d="M1418 597h8" stroke="#000299"/><path d="M1426 597h8" stroke="#000199"/><path d="M1434 597h16" stroke="#009"/><path d="M1450 597h8" stroke="#020099"/><path d="M1458 597h8" stroke="#050099"/><path d="M1466 597h8" stroke="#090099"/><path d="M1474 597h8" stroke="#0d0099"/><path d="M1482 597h8" stroke="#109"/><path d="M1490 597h8" stroke="#150099"/><path d="M1498 597h8" stroke="#190099"/><path d="M1506 597h8" stroke="#1d0099"/><path d="M1514 597h8" stroke="#210099"/><path d="M1522 597h8" stroke="#250099"/><path d="M1530 597h8" stroke="#290099"/><path d="M1538 597h8" stroke="#2d0099"/><path d="M1546 597h8" stroke="#310099"/><path d="M1554 597h8" stroke="#350099"/><path d="M1562 597h8" stroke="#390099"/><path d="M1570 597h8" stroke="#3d0099"/><path d="M1578 597h8" stroke="#410099"/><path d="M1586 597h8" stroke="#460099"/><path d="M1594 597h8" stroke="#4a0099"/><path d="M1602 597h8" stroke="#4e0099"/><path d="M1610 597h8" stroke="#520099"/><path d="M1618 597h8" stroke="#560099"/><path d="M1626 597h8" stroke="#5a0099"/><path d="M1634 597h8" stroke="#5f0099"/><path d="M1642 597h8" stroke="#630099"/><path d="M1650 597h8" stroke="#670099"/><path d="M1658 597h8" stroke="#6c0099"/><path d="M1666 597h8" stroke="#700099"/><path d="M1674 597h8" stroke="#740099"/><path d="M1386 605h8" stroke="#000599"/><path d="M1394 605h8" stroke="#000499"/><path d="M1402 605h8" stroke="#000399"/><path d="M1410 605h8" stroke="#000299"/><path d="M1418 605h8" stroke="#000199"/><path d="M1426 605h32" stroke="#009"/><path d="M1458 605h8" stroke="#050099"/><path d="M1466 605h8" stroke="#090099"/><path d="M1474 605h8" stroke="#0c0099"/><path d="M1482 605h8" stroke="#100099"/><path d="M1490 605h8" stroke="#140099"/><path d="M1498 605h8" stroke="#180099"/><path d="M1506 605h8" stroke="#1c0099"/><path d="M1514 605h8" stroke="#200099"/><path d="M1522 605h8" stroke="#230099"/><path d="M1530 605h8" stroke="#270099"/><path d="M1538 605h8" stroke="#2b0099"/><path d="M1546 605h8" stroke="#2f0099"/><path d="M1554 605h8" stroke="#309"/><path d="M1562 605h8" stroke="#370099"/><path d="M1570 605h8" stroke="#3b0099"/><path d="M1578 605h8" stroke="#3f0099"/><path d="M1586 605h8" stroke="#430099"/><path d="M1594 605h8" stroke="#470099"/><path d="M1602 605h8" stroke="#4b0099"/><path d="M1610 605h8" stroke="#4f0099"/><path d="M1618 605h8" stroke="#540099"/><path d="M1626 605h8" stroke="#580099"/><path d="M1634 605h8" stroke="#5c0099"/><path d="M1642 605h8" stroke="#600099"/><path d="M1650 605h8" stroke="#640099"/><path d="M1658 605h8" stroke="#680099"/><path d="M1666 605h8" stroke="#6d0099"/><path d="M1394 613h8" stroke="#000399"/><path d="M1402 613h8" stroke="#000299"/><path d="M1410 613h8" stroke="#000199"/><path d="M1418 613h40" stroke="#009"/><path d="M1458 613h8" stroke="#040099"/><path d="M1466 613h8" stroke="#080099"/><path d="M1474 613h8" stroke="#0b0099"/><path d="M1482 613h8" stroke="#0f0099"/><path d="M1490 613h8" stroke="#130099"/><path d="M1498 613h8" stroke="#170099"/><path d="M1506 613h8" stroke="#1a0099"/><path d="M1514 613h8" stroke="#1e0099"/><path d="M1522 613h8" stroke="#209"/><path d="M1530 613h8" stroke="#260099"/><path d="M1538 613h8" stroke="#2a0099"/><path d="M1546 613h8" stroke="#2e0099"/><path d="M1554 613h8" stroke="#310099"/><path d="M1562 613h8" stroke="#350099"/><path d="M1570 613h8" stroke="#390099"/><path d="M1578 613h8" stroke="#3d0099"/><path d="M1586 613h8" stroke="#410099"/><path d="M1594 613h8" stroke="#450099"/><path d="M1602 613h8" stroke="#490099"/><path d="M1610 613h8" stroke="#4d0099"/><path d="M1618 613h8" stroke="#510099"/><path d="M1626 613h8" stroke="#509"/><path d="M1634 613h8" stroke="#590099"/><path d="M1642 613h8" stroke="#5d0099"/><path d="M1650 613h8" stroke="#610099"/><path d="M1658 613h8" stroke="#650099"/><path d="M1402 621h8" stroke="#000199"/><path d="M1410 621h48" stroke="#009"/><path d="M1458 621h8" stroke="#030099"/><path d="M1466 621h8" stroke="#070099"/><path d="M1474 621h8" stroke="#0b0099"/><path d="M1482 621h8" stroke="#0e0099"/><path d="M1490 621h8" stroke="#120099"/><path d="M1498 621h8" stroke="#160099"/><path d="M1506 621h8" stroke="#190099"/><path d="M1514 621h8" stroke="#1d0099"/><path d="M1522 621h8" stroke="#210099"/><path d="M1530 621h8" stroke="#240099"/><path d="M1538 621h8" stroke="#280099"/><path d="M1546 621h8" stroke="#2c0099"/><path d="M1554 621h8" stroke="#300099"/><path d="M1562 621h8" stroke="#309"/><path d="M1570 621h8" stroke="#370099"/><path d="M1578 621h8" stroke="#3b0099"/><path d="M1586 621h8" stroke="#3f0099"/><path d="M1594 621h8" stroke="#430099"/><path d="M1602 621h8" stroke="#470099"/><path d="M1610 621h8" stroke="#4b0099"/><path d="M1618 621h8" stroke="#4f0099"/><path d="M1626 621h8" stroke="#520099"/><path d="M1634 621h8" stroke="#560099"/><path d="M1642 621h8" stroke="#5a0099"/><path d="M1650 621h8" stroke="#5e0099"/><path d="M1410 629h48" stroke="#009"/><path d="M1458 629h8" stroke="#030099"/><path d="M1466 629h8" stroke="#060099"/><path d="M1474 629h8" stroke="#0a0099"/><path d="M1482 629h8" stroke="#0d0099"/><path d="M1490 629h8" stroke="#109"/><path d="M1498 629h8" stroke="#150099"/><path d="M1506 629h8" stroke="#180099"/><path d="M1514 629h8" stroke="#1c0099"/><path d="M1522 629h8" stroke="#1f0099"/><path d="M1530 629h8" stroke="#230099"/><path d="M1538 629h8" stroke="#270099"/><path d="M1546 629h8" stroke="#2a0099"/><path d="M1554 629h8" stroke="#2e0099"/><path d="M1562 629h8" stroke="#320099"/><path d="M1570 629h8" stroke="#350099"/><path d="M1578 629h8" stroke="#390099"/><path d="M1586 629h8" stroke="#3d0099"/><path d="M1594 629h8" stroke="#410099"/><path d="M1602 629h8" stroke="#450099"/><path d="M1610 629h8" stroke="#480099"/><path d="M1618 629h8" stroke="#4c0099"/><path d="M1626 629h8" stroke="#500099"/><path d="M1634 629h8" stroke="#540099"/><path d="M1642 629h8" stroke="#580099"/><path d="M1418 637h40" stroke="#009"/><path d="M1458 637h8" stroke="#020099"/><path d="M1466 637h8" stroke="#060099"/><path d="M1474 637h8" stroke="#090099"/><path d="M1482 637h8" stroke="#0d0099"/><path d="M1490 637h8" stroke="#100099"/><path d="M1498 637h8" stroke="#140099"/><path d="M1506 637h8" stroke="#170099"/><path d="M1514 637h8" stroke="#1b0099"/><path d="M1522 637h8" stroke="#1e0099"/><path d="M1530 637h8" stroke="#209"/><path d="M1538 637h8" stroke="#250099"/><path d="M1546 637h8" stroke="#290099"/><path d="M1554 637h8" stroke="#2d0099"/><path d="M1562 637h8" stroke="#300099"/><path d="M1570 637h8" stroke="#340099"/><path d="M1578 637h8" stroke="#370099"/><path d="M1586 637h8" stroke="#3b0099"/><path d="M1594 637h8" stroke="#3f0099"/><path d="M1602 637h8" stroke="#420099"/><path d="M1610 637h8" stroke="#460099"/><path d="M1618 637h8" stroke="#4a0099"/><path d="M1626 637h8" stroke="#4e0099"/><path d="M1634 637h8" stroke="#510099"/><path d="M1426 645h32" stroke="#009"/><path d="M1458 645h8" stroke="#020099"/><path d="M1466 645h8" stroke="#050099"/><path d="M1474 645h8" stroke="#080099"/><path d="M1482 645h8" stroke="#0c0099"/><path d="M1490 645h8" stroke="#0f0099"/><path d="M1498 645h8" stroke="#130099"/><path d="M1506 645h8" stroke="#160099"/><path d="M1514 645h8" stroke="#190099"/><path d="M1522 645h8" stroke="#1d0099"/><path d="M1530 645h8" stroke="#200099"/><path d="M1538 645h8" stroke="#240099"/><path d="M1546 645h8" stroke="#270099"/><path d="M1554 645h8" stroke="#2b0099"/><path d="M1562 645h8" stroke="#2f0099"/><path d="M1570 645h8" stroke="#320099"/><path d="M1578 645h8" stroke="#360099"/><path d="M1586 645h8" stroke="#390099"/><path d="M1594 645h8" stroke="#3d0099"/><path d="M1602 645h8" stroke="#400099"/><path d="M1610 645h8" stroke="#409"/><path d="M1618 645h8" stroke="#480099"/><path d="M1626 645h8" stroke="#4b0099"/><path d="M1426 653h40" stroke="#009"/><path d="M1466 653h8" stroke="#040099"/><path d="M1474 653h8" stroke="#080099"/><path d="M1482 653h8" stroke="#0b0099"/><path d="M1490 653h8" stroke="#0e0099"/><path d="M1498 653h8" stroke="#120099"/><path d="M1506 653h8" stroke="#150099"/><path d="M1514 653h8" stroke="#180099"/><path d="M1522 653h8" stroke="#1c0099"/><path d="M1530 653h8" stroke="#1f0099"/><path d="M1538 653h8" stroke="#230099"/><path d="M1546 653h8" stroke="#260099"/><path d="M1554 653h8" stroke="#2a0099"/><path d="M1562 653h8" stroke="#2d0099"/><path d="M1570 653h8" stroke="#310099"/><path d="M1578 653h8" stroke="#340099"/><path d="M1586 653h8" stroke="#380099"/><path d="M1594 653h8" stroke="#3b0099"/><path d="M1602 653h8" stroke="#3f0099"/><path d="M1610 653h8" stroke="#420099"/><path d="M1618 653h8" stroke="#460099"/><path d="M1442 661h24" stroke="#009"/><path d="M1466 661h8" stroke="#040099"/><path d="M1474 661h8" stroke="#070099"/><path d="M1482 661h8" stroke="#0a0099"/><path d="M1490 661h8" stroke="#0d0099"/><path d="M1498 661h8" stroke="#109"/><path d="M1506 661h8" stroke="#140099"/><path d="M1514 661h8" stroke="#170099"/><path d="M1522 661h8" stroke="#1b0099"/><path d="M1530 661h8" stroke="#1e0099"/><path d="M1538 661h8" stroke="#210099"/><path d="M1546 661h8" stroke="#250099"/><path d="M1554 661h8" stroke="#280099"/><path d="M1562 661h8" stroke="#2c0099"/><path d="M1570 661h8" stroke="#2f0099"/><path d="M1578 661h8" stroke="#320099"/><path d="M1586 661h8" stroke="#360099"/><path d="M1594 661h8" stroke="#390099"/><path d="M1602 661h8" stroke="#3d0099"/><path d="M1610 661h8" stroke="#400099"/><path d="M1450 669h16" stroke="#009"/><path d="M1466 669h8" stroke="#030099"/><path d="M1474 669h8" stroke="#060099"/><path d="M1482 669h8" stroke="#090099"/><path d="M1490 669h8" stroke="#0d0099"/><path d="M1498 669h8" stroke="#100099"/><path d="M1506 669h8" stroke="#130099"/><path d="M1514 669h8" stroke="#160099"/><path d="M1522 669h8" stroke="#1a0099"/><path d="M1530 669h8" stroke="#1d0099"/><path d="M1538 669h8" stroke="#200099"/><path d="M1546 669h8" stroke="#240099"/><path d="M1554 669h8" stroke="#270099"/><path d="M1562 669h8" stroke="#2a0099"/><path d="M1570 669h8" stroke="#2e0099"/><path d="M1578 669h8" stroke="#310099"/><path d="M1586 669h8" stroke="#340099"/><path d="M1594 669h8" stroke="#380099"/><path d="M1602 669h8" stroke="#3b0099"/><path d="M1458 677h8" stroke="#009"/><path d="M1466 677h8" stroke="#030099"/><path d="M1474 677h8" stroke="#060099"/><path d="M1482 677h8" stroke="#090099"/><path d="M1490 677h8" stroke="#0c0099"/><path d="M1498 677h8" stroke="#0f0099"/><path d="M1506 677h8" stroke="#120099"/><path d="M1514 677h8" stroke="#150099"/><path d="M1522 677h8" stroke="#190099"/><path d="M1530 677h8" stroke="#1c0099"/><path d="M1538 677h8" stroke="#1f0099"/><path d="M1546 677h8" stroke="#209"/><path d="M1554 677h8" stroke="#260099"/><path d="M1562 677h8" stroke="#290099"/><path d="M1570 677h8" stroke="#2c0099"/><path d="M1578 677h8" stroke="#2f0099"/><path d="M1586 677h8" stroke="#309"/><path d="M1594 677h8" stroke="#360099"/><path d="M1466 685h8" stroke="#020099"/><path d="M1474 685h8" stroke="#050099"/><path d="M1482 685h8" stroke="#080099"/><path d="M1490 685h8" stroke="#0b0099"/><path d="M1498 685h8" stroke="#0e0099"/><path d="M1506 685h8" stroke="#109"/><path d="M1514 685h8" stroke="#150099"/><path d="M1522 685h8" stroke="#180099"/><path d="M1530 685h8" stroke="#1b0099"/><path d="M1538 685h8" stroke="#1e0099"/><path d="M1546 685h8" stroke="#210099"/><path d="M1554 685h8" stroke="#240099"/><path d="M1562 685h8" stroke="#280099"/><path d="M1570 685h8" stroke="#2b0099"/><path d="M1578 685h8" stroke="#2e0099"/><path d="M1586 685h8" stroke="#310099"/><path d="M1474 693h8" stroke="#040099"/><path d="M1482 693h8" stroke="#070099"/><path d="M1490 693h8" stroke="#0b0099"/><path d="M1498 693h8" stroke="#0e0099"/><path d="M1506 693h8" stroke="#109"/><path d="M1514 693h8" stroke="#140099"/><path d="M1522 693h8" stroke="#170099"/><path d="M1530 693h8" stroke="#1a0099"/><path d="M1538 693h8" stroke="#1d0099"/><path d="M1546 693h8" stroke="#200099"/><path d="M1554 693h8" stroke="#230099"/><path d="M1562 693h8" stroke="#260099"/><path d="M1570 693h8" stroke="#290099"/><path d="M1578 693h8" stroke="#2d0099"/><path d="M1482 701h8" stroke="#070099"/><path d="M1490 701h8" stroke="#0a0099"/><path d="M1498 701h8" stroke="#0d0099"/><path d="M1506 701h8" stroke="#100099"/><path d="M1514 701h8" stroke="#130099"/><path d="M1522 701h8" stroke="#160099"/><path d="M1530 701h8" stroke="#190099"/><path d="M1538 701h8" stroke="#1c0099"/><path d="M1546 701h8" stroke="#1f0099"/><path d="M1554 701h8" stroke="#209"/><path d="M1562 701h8" stroke="#250099"/><path d="M1570 701h8" stroke="#280099"/><path d="M1498 709h8" stroke="#0c0099"/><path d="M1506 709h8" stroke="#0f0099"/><path d="M1514 709h8" stroke="#120099"/><path d="M1522 709h8" stroke="#150099"/><path d="M1530 709h8" stroke="#180099"/><path d="M1538 709h8" stroke="#1b0099"/><path d="M1546 709h8" stroke="#1e0099"/><path d="M1554 709h8" stroke="#210099"/><path d="M1562 709h8" stroke="#240099"/><path d="M1506 717h8" stroke="#0e0099"/><path d="M1514 717h8" stroke="#109"/><path d="M1522 717h8" stroke="#140099"/><path d="M1530 717h8" stroke="#170099"/><path d="M1538 717h8" stroke="#1a0099"/><path d="M1546 717h8" stroke="#1d0099"/><path d="M1554 717h8" stroke="#200099"/></g></g><g clip-path="url(#ctr)"><g filter="url(#fb)" shape-rendering="crispEdges" fill="none" stroke-width="6"><path d="M1378 238h12" stroke="#0f0"/><path d="M1390 238h6" stroke="#01ff00"/><path d="M1396 238h6" stroke="#0fff00"/><path d="M1402 238h6" stroke="#1dff00"/><path d="M1408 238h6" stroke="#2bff00"/><path d="M1414 238h6" stroke="#3aff00"/><path d="M1420 238h6" stroke="#4aff00"/><path d="M1426 238h6" stroke="#5aff00"/><path d="M1432 238h6" stroke="#6aff00"/><path d="M1438 238h6" stroke="#7bff00"/><path d="M1444 238h6" stroke="#8dff00"/><path d="M1378 244h18" stroke="#0f0"/><path d="M1396 244h6" stroke="#0dff00"/><path d="M1402 244h6" stroke="#1bff00"/><path d="M1408 244h6" stroke="#2aff00"/><path d="M1414 244h6" stroke="#39ff00"/><path d="M1420 244h6" stroke="#49ff00"/><path d="M1426 244h6" stroke="#59ff00"/><path d="M1432 244h6" stroke="#69ff00"/><path d="M1438 244h6" stroke="#7bff00"/><path d="M1444 244h6" stroke="#8dff00"/><path d="M1450 244h6" stroke="#9fff00"/><path d="M1456 244h6" stroke="#b3ff00"/><path d="M1462 244h6" stroke="#c7ff00"/><path d="M1468 244h6" stroke="#dbff00"/><path d="M1474 244h6" stroke="#f1ff00"/><path d="M1480 244h6" stroke="#fff700"/><path d="M1486 244h6" stroke="#ffe300"/><path d="M1492 244h6" stroke="#ffd100"/><path d="M1498 244h6" stroke="#ffc100"/><path d="M1504 244h6" stroke="#ffb300"/><path d="M1510 244h6" stroke="#ffa700"/><path d="M1378 250h6" stroke="#00ff04"/><path d="M1384 250h6" stroke="#00ff03"/><path d="M1390 250h6" stroke="#00ff02"/><path d="M1396 250h6" stroke="#0bff00"/><path d="M1402 250h6" stroke="#19ff00"/><path d="M1408 250h6" stroke="#28ff00"/><path d="M1414 250h6" stroke="#37ff00"/><path d="M1420 250h6" stroke="#47ff00"/><path d="M1426 250h6" stroke="#58ff00"/><path d="M1432 250h6" stroke="#69ff00"/><path d="M1438 250h6" stroke="#7aff00"/><path d="M1444 250h6" stroke="#8dff00"/><path d="M1450 250h6" stroke="#a0ff00"/><path d="M1456 250h6" stroke="#b3ff00"/><path d="M1462 250h6" stroke="#c8ff00"/><path d="M1468 250h6" stroke="#df0"/><path d="M1474 250h6" stroke="#f3ff00"/><path d="M1480 250h6" stroke="#fff500"/><path d="M1486 250h6" stroke="#ffe100"/><path d="M1492 250h6" stroke="#ffcf00"/><path d="M1498 250h6" stroke="#ffbf00"/><path d="M1504 250h6" stroke="#ffb100"/><path d="M1510 250h6" stroke="#ffa400"/><path d="M1516 250h6" stroke="#f90"/><path d="M1522 250h6" stroke="#ff8e00"/><path d="M1528 250h6" stroke="#ff8500"/><path d="M1534 250h6" stroke="#ff7c00"/><path d="M1540 250h6" stroke="#ff7400"/><path d="M1546 250h6" stroke="#ff6d00"/><path d="M1552 250h6" stroke="#f60"/><path d="M1558 250h6" stroke="#ff6000"/><path d="M1564 250h6" stroke="#ff5a00"/><path d="M1570 250h6" stroke="#ff5400"/><path d="M1576 250h6" stroke="#ff4f00"/><path d="M1378 256h12" stroke="#0f1"/><path d="M1390 256h6" stroke="#00ff0f"/><path d="M1396 256h6" stroke="#09ff0e"/><path d="M1402 256h6" stroke="#17ff0d"/><path d="M1408 256h6" stroke="#26ff0c"/><path d="M1414 256h6" stroke="#36ff0a"/><path d="M1420 256h6" stroke="#46ff09"/><path d="M1426 256h6" stroke="#57ff08"/><path d="M1432 256h6" stroke="#68ff07"/><path d="M1438 256h6" stroke="#7aff06"/><path d="M1444 256h6" stroke="#8dff04"/><path d="M1450 256h6" stroke="#a0ff03"/><path d="M1456 256h6" stroke="#b4ff02"/><path d="M1462 256h6" stroke="#c9ff00"/><path d="M1468 256h6" stroke="#deff00"/><path d="M1474 256h6" stroke="#f5ff00"/><path d="M1480 256h6" stroke="#fff300"/><path d="M1486 256h6" stroke="#ffde00"/><path d="M1492 256h6" stroke="#ffcd00"/><path d="M1498 256h6" stroke="#ffbd00"/><path d="M1504 256h6" stroke="#ffaf00"/><path d="M1510 256h6" stroke="#ffa200"/><path d="M1516 256h6" stroke="#ff9700"/><path d="M1522 256h6" stroke="#ff8c00"/><path d="M1528 256h6" stroke="#ff8300"/><path d="M1534 256h6" stroke="#ff7a00"/><path d="M1540 256h6" stroke="#ff7200"/><path d="M1546 256h6" stroke="#ff6b00"/><path d="M1552 256h6" stroke="#ff6400"/><path d="M1558 256h6" stroke="#ff5e00"/><path d="M1564 256h6" stroke="#ff5800"/><path d="M1570 256h6" stroke="#ff5200"/><path d="M1576 256h6" stroke="#ff4d00"/><path d="M1582 256h6" stroke="#ff4900"/><path d="M1588 256h6" stroke="#f40"/><path d="M1594 256h6" stroke="#ff4000"/><path d="M1600 256h6" stroke="#ff3c00"/><path d="M1606 256h6" stroke="#ff3800"/><path d="M1612 256h6" stroke="#ff3500"/><path d="M1618 256h6" stroke="#ff3100"/><path d="M1624 256h6" stroke="#ff2e00"/><path d="M1630 256h6" stroke="#ff2b00"/><path d="M1636 256h6" stroke="#ff2800"/><path d="M1378 262h12" stroke="#00ff1e"/><path d="M1390 262h6" stroke="#00ff1c"/><path d="M1396 262h6" stroke="#07ff1b"/><path d="M1402 262h6" stroke="#15ff1b"/><path d="M1408 262h6" stroke="#25ff1a"/><path d="M1414 262h6" stroke="#34ff19"/><path d="M1420 262h6" stroke="#45ff18"/><path d="M1426 262h6" stroke="#56ff17"/><path d="M1432 262h6" stroke="#67ff16"/><path d="M1438 262h6" stroke="#7aff15"/><path d="M1444 262h6" stroke="#8cff14"/><path d="M1450 262h6" stroke="#a0ff13"/><path d="M1456 262h6" stroke="#b4ff12"/><path d="M1462 262h6" stroke="#caff10"/><path d="M1468 262h6" stroke="#e0ff0f"/><path d="M1474 262h6" stroke="#f7ff0e"/><path d="M1480 262h6" stroke="#fff00c"/><path d="M1486 262h6" stroke="#ffdc0a"/><path d="M1492 262h6" stroke="#ffca08"/><path d="M1498 262h6" stroke="#ffba06"/><path d="M1504 262h6" stroke="#ffac04"/><path d="M1510 262h6" stroke="#ffa003"/><path d="M1516 262h6" stroke="#ff9402"/><path d="M1522 262h6" stroke="#ff8a01"/><path d="M1528 262h6" stroke="#ff8000"/><path d="M1534 262h6" stroke="#ff7800"/><path d="M1540 262h6" stroke="#ff7000"/><path d="M1546 262h6" stroke="#ff6900"/><path d="M1552 262h6" stroke="#ff6200"/><path d="M1558 262h6" stroke="#ff5c00"/><path d="M1564 262h6" stroke="#ff5600"/><path d="M1570 262h6" stroke="#ff5000"/><path d="M1576 262h6" stroke="#ff4b00"/><path d="M1582 262h6" stroke="#ff4700"/><path d="M1588 262h6" stroke="#ff4200"/><path d="M1594 262h6" stroke="#ff3e00"/><path d="M1600 262h6" stroke="#ff3a00"/><path d="M1606 262h6" stroke="#ff3600"/><path d="M1612 262h6" stroke="#f30"/><path d="M1618 262h6" stroke="#ff3000"/><path d="M1624 262h6" stroke="#ff2c00"/><path d="M1630 262h6" stroke="#ff2900"/><path d="M1636 262h6" stroke="#ff2700"/><path d="M1642 262h6" stroke="#ff2400"/><path d="M1648 262h6" stroke="#ff2100"/><path d="M1654 262h6" stroke="#ff1f00"/><path d="M1660 262h6" stroke="#ff1c00"/><path d="M1666 262h6" stroke="#ff1a00"/><path d="M1672 262h6" stroke="#ff1800"/><path d="M1678 262h6" stroke="#ff1600"/><path d="M1684 262h6" stroke="#ff1400"/><path d="M1690 262h6" stroke="#ff1200"/><path d="M1696 262h6" stroke="#ff1000"/><path d="M1702 262h6" stroke="#ff0f00"/><path d="M1378 268h12" stroke="#00ff2b"/><path d="M1390 268h6" stroke="#00ff2a"/><path d="M1396 268h6" stroke="#04ff29"/><path d="M1402 268h6" stroke="#13ff29"/><path d="M1408 268h6" stroke="#23ff28"/><path d="M1414 268h6" stroke="#33ff28"/><path d="M1420 268h6" stroke="#43ff27"/><path d="M1426 268h6" stroke="#55ff26"/><path d="M1432 268h6" stroke="#67ff26"/><path d="M1438 268h6" stroke="#79ff25"/><path d="M1444 268h6" stroke="#8cff24"/><path d="M1450 268h6" stroke="#a0ff23"/><path d="M1456 268h6" stroke="#b5ff22"/><path d="M1462 268h6" stroke="#cbff22"/><path d="M1468 268h6" stroke="#e1ff21"/><path d="M1474 268h6" stroke="#f9ff20"/><path d="M1480 268h6" stroke="#ffee1d"/><path d="M1486 268h6" stroke="#ffda19"/><path d="M1492 268h6" stroke="#ffc816"/><path d="M1498 268h6" stroke="#ffb814"/><path d="M1504 268h6" stroke="#ffaa12"/><path d="M1510 268h6" stroke="#ff9d0f"/><path d="M1516 268h6" stroke="#ff920e"/><path d="M1522 268h6" stroke="#ff880c"/><path d="M1528 268h6" stroke="#ff7e0a"/><path d="M1534 268h6" stroke="#ff7609"/><path d="M1540 268h6" stroke="#ff6e08"/><path d="M1546 268h6" stroke="#ff6607"/><path d="M1552 268h6" stroke="#ff6005"/><path d="M1558 268h6" stroke="#ff5a04"/><path d="M1564 268h6" stroke="#ff5403"/><path d="M1570 268h6" stroke="#ff4e03"/><path d="M1576 268h6" stroke="#ff4902"/><path d="M1582 268h6" stroke="#ff4501"/><path d="M1588 268h6" stroke="#ff4000"/><path d="M1594 268h6" stroke="#ff3c00"/><path d="M1600 268h6" stroke="#ff3800"/><path d="M1606 268h6" stroke="#ff3500"/><path d="M1612 268h6" stroke="#ff3100"/><path d="M1618 268h6" stroke="#ff2e00"/><path d="M1624 268h6" stroke="#ff2b00"/><path d="M1630 268h6" stroke="#ff2800"/><path d="M1636 268h6" stroke="#ff2500"/><path d="M1642 268h6" stroke="#f20"/><path d="M1648 268h6" stroke="#ff2000"/><path d="M1654 268h6" stroke="#ff1d00"/><path d="M1660 268h6" stroke="#ff1b00"/><path d="M1666 268h6" stroke="#ff1900"/><path d="M1672 268h6" stroke="#ff1700"/><path d="M1678 268h6" stroke="#ff1500"/><path d="M1684 268h6" stroke="#ff1300"/><path d="M1690 268h6" stroke="#f10"/><path d="M1696 268h6" stroke="#ff0f00"/><path d="M1702 268h6" stroke="#ff0d00"/><path d="M1708 268h6" stroke="#ff0c00"/><path d="M1714 268h6" stroke="#ff0a00"/><path d="M1720 268h6" stroke="#ff0800"/><path d="M1726 268h6" stroke="#ff0700"/><path d="M1732 268h6" stroke="#ff0600"/><path d="M1738 268h6" stroke="#ff0400"/><path d="M1744 268h6" stroke="#ff0300"/><path d="M1750 268h6" stroke="#ff0200"/><path d="M1756 268h6" stroke="#f00"/><path d="M1378 274h18" stroke="#00ff39"/><path d="M1396 274h6" stroke="#02ff38"/><path d="M1402 274h6" stroke="#11ff38"/><path d="M1408 274h6" stroke="#21ff37"/><path d="M1414 274h6" stroke="#31ff37"/><path d="M1420 274h6" stroke="#42ff37"/><path d="M1426 274h6" stroke="#54ff36"/><path d="M1432 274h6" stroke="#66ff36"/><path d="M1438 274h6" stroke="#79ff35"/><path d="M1444 274h6" stroke="#8cff35"/><path d="M1450 274h6" stroke="#a1ff34"/><path d="M1456 274h6" stroke="#b6ff34"/><path d="M1462 274h6" stroke="#cf3"/><path d="M1468 274h6" stroke="#e3ff33"/><path d="M1474 274h6" stroke="#fbff32"/><path d="M1480 274h6" stroke="#ffec2e"/><path d="M1486 274h6" stroke="#ffd729"/><path d="M1492 274h6" stroke="#ffc525"/><path d="M1498 274h6" stroke="#ffb522"/><path d="M1504 274h6" stroke="#ffa71f"/><path d="M1510 274h6" stroke="#ff9b1c"/><path d="M1516 274h6" stroke="#ff8f1a"/><path d="M1522 274h6" stroke="#ff8517"/><path d="M1528 274h6" stroke="#ff7c15"/><path d="M1534 274h6" stroke="#ff7313"/><path d="M1540 274h6" stroke="#ff6b12"/><path d="M1546 274h6" stroke="#ff6410"/><path d="M1552 274h6" stroke="#ff5e0f"/><path d="M1558 274h6" stroke="#ff570d"/><path d="M1564 274h6" stroke="#ff520c"/><path d="M1570 274h6" stroke="#ff4c0b"/><path d="M1576 274h6" stroke="#ff470a"/><path d="M1582 274h6" stroke="#ff4309"/><path d="M1588 274h6" stroke="#ff3e08"/><path d="M1594 274h6" stroke="#ff3a07"/><path d="M1600 274h6" stroke="#ff3606"/><path d="M1606 274h6" stroke="#ff3305"/><path d="M1612 274h6" stroke="#ff2f04"/><path d="M1618 274h6" stroke="#ff2c04"/><path d="M1624 274h6" stroke="#ff2903"/><path d="M1630 274h6" stroke="#ff2602"/><path d="M1636 274h6" stroke="#ff2302"/><path d="M1642 274h6" stroke="#ff2101"/><path d="M1648 274h6" stroke="#ff1e01"/><path d="M1654 274h6" stroke="#ff1c00"/><path d="M1660 274h6" stroke="#ff1900"/><path d="M1666 274h6" stroke="#ff1700"/><path d="M1672 274h6" stroke="#ff1500"/><path d="M1678 274h6" stroke="#ff1300"/><path d="M1684 274h6" stroke="#f10"/><path d="M1690 274h6" stroke="#ff0f00"/><path d="M1696 274h6" stroke="#ff0e00"/><path d="M1702 274h6" stroke="#ff0c00"/><path d="M1708 274h6" stroke="#ff0a00"/><path d="M1714 274h6" stroke="#ff0900"/><path d="M1720 274h6" stroke="#ff0700"/><path d="M1726 274h6" stroke="#ff0600"/><path d="M1732 274h6" stroke="#ff0400"/><path d="M1738 274h6" stroke="#ff0300"/><path d="M1744 274h6" stroke="#ff0200"/><path d="M1750 274h12" stroke="#f00"/><path d="M1384 280h18" stroke="#00ff47"/><path d="M1402 280h6" stroke="#0fff47"/><path d="M1408 280h6" stroke="#1fff47"/><path d="M1414 280h6" stroke="#2fff47"/><path d="M1420 280h6" stroke="#41ff47"/><path d="M1426 280h6" stroke="#52ff47"/><path d="M1432 280h6" stroke="#65ff46"/><path d="M1438 280h6" stroke="#78ff46"/><path d="M1444 280h6" stroke="#8cff46"/><path d="M1450 280h6" stroke="#a1ff46"/><path d="M1456 280h6" stroke="#b7ff46"/><path d="M1462 280h6" stroke="#cdff46"/><path d="M1468 280h6" stroke="#e5ff46"/><path d="M1474 280h6" stroke="#fdff45"/><path d="M1480 280h6" stroke="#ffe93f"/><path d="M1486 280h6" stroke="#ffd53a"/><path d="M1492 280h6" stroke="#ffc335"/><path d="M1498 280h6" stroke="#ffb330"/><path d="M1504 280h6" stroke="#ffa52c"/><path d="M1510 280h6" stroke="#ff9829"/><path d="M1516 280h6" stroke="#ff8d26"/><path d="M1522 280h6" stroke="#ff8323"/><path d="M1528 280h6" stroke="#ff7920"/><path d="M1534 280h6" stroke="#ff711e"/><path d="M1540 280h6" stroke="#ff691c"/><path d="M1546 280h6" stroke="#ff621a"/><path d="M1552 280h6" stroke="#ff5b18"/><path d="M1558 280h6" stroke="#ff5516"/><path d="M1564 280h6" stroke="#ff5015"/><path d="M1570 280h6" stroke="#ff4a13"/><path d="M1576 280h6" stroke="#ff4512"/><path d="M1582 280h6" stroke="#ff4110"/><path d="M1588 280h6" stroke="#ff3c0f"/><path d="M1594 280h6" stroke="#ff380e"/><path d="M1600 280h6" stroke="#ff350d"/><path d="M1606 280h6" stroke="#ff310c"/><path d="M1612 280h6" stroke="#ff2e0b"/><path d="M1618 280h6" stroke="#ff2a0a"/><path d="M1624 280h6" stroke="#ff2709"/><path d="M1630 280h6" stroke="#ff2408"/><path d="M1636 280h6" stroke="#ff2208"/><path d="M1642 280h6" stroke="#ff1f07"/><path d="M1648 280h6" stroke="#ff1d06"/><path d="M1654 280h6" stroke="#ff1a06"/><path d="M1660 280h6" stroke="#ff1805"/><path d="M1666 280h6" stroke="#ff1604"/><path d="M1672 280h6" stroke="#ff1404"/><path d="M1678 280h6" stroke="#ff1203"/><path d="M1684 280h6" stroke="#ff1003"/><path d="M1690 280h6" stroke="#ff0e02"/><path d="M1696 280h6" stroke="#ff0c02"/><path d="M1702 280h6" stroke="#ff0a01"/><path d="M1708 280h6" stroke="#ff0901"/><path d="M1714 280h6" stroke="#ff0700"/><path d="M1720 280h6" stroke="#ff0600"/><path d="M1726 280h6" stroke="#ff0400"/><path d="M1732 280h6" stroke="#ff0300"/><path d="M1738 280h6" stroke="#ff0200"/><path d="M1744 280h18" stroke="#f00"/><path d="M1384 286h18" stroke="#00ff56"/><path d="M1402 286h6" stroke="#0dff57"/><path d="M1408 286h6" stroke="#1dff57"/><path d="M1414 286h6" stroke="#2eff57"/><path d="M1420 286h6" stroke="#3fff57"/><path d="M1426 286h6" stroke="#51ff58"/><path d="M1432 286h6" stroke="#64ff58"/><path d="M1438 286h6" stroke="#78ff58"/><path d="M1444 286h6" stroke="#8cff58"/><path d="M1450 286h6" stroke="#a1ff59"/><path d="M1456 286h6" stroke="#b7ff59"/><path d="M1462 286h6" stroke="#ceff59"/><path d="M1468 286h6" stroke="#e6ff59"/><path d="M1474 286h6" stroke="#fffe59"/><path d="M1480 286h6" stroke="#ffe751"/><path d="M1486 286h6" stroke="#ffd24a"/><path d="M1492 286h6" stroke="#ffc044"/><path d="M1498 286h6" stroke="#ffb03f"/><path d="M1504 286h6" stroke="#ffa23a"/><path d="M1510 286h6" stroke="#ff9636"/><path d="M1516 286h6" stroke="#ff8b32"/><path d="M1522 286h6" stroke="#ff802e"/><path d="M1528 286h6" stroke="#ff772b"/><path d="M1534 286h6" stroke="#ff6f28"/><path d="M1540 286h6" stroke="#ff6726"/><path d="M1546 286h6" stroke="#ff6023"/><path d="M1552 286h6" stroke="#ff5921"/><path d="M1558 286h6" stroke="#ff531f"/><path d="M1564 286h6" stroke="#ff4d1d"/><path d="M1570 286h6" stroke="#ff481b"/><path d="M1576 286h6" stroke="#ff431a"/><path d="M1582 286h6" stroke="#ff3f18"/><path d="M1588 286h6" stroke="#ff3a17"/><path d="M1594 286h6" stroke="#ff3615"/><path d="M1600 286h6" stroke="#ff3314"/><path d="M1606 286h6" stroke="#ff2f13"/><path d="M1612 286h6" stroke="#ff2c12"/><path d="M1618 286h6" stroke="#ff2911"/><path d="M1624 286h6" stroke="#ff2610"/><path d="M1630 286h6" stroke="#ff230f"/><path d="M1636 286h6" stroke="#ff200e"/><path d="M1642 286h6" stroke="#ff1d0d"/><path d="M1648 286h6" stroke="#ff1b0c"/><path d="M1654 286h6" stroke="#ff190b"/><path d="M1660 286h6" stroke="#ff160a"/><path d="M1666 286h6" stroke="#ff140a"/><path d="M1672 286h6" stroke="#ff1209"/><path d="M1678 286h6" stroke="#ff1008"/><path d="M1684 286h6" stroke="#ff0e08"/><path d="M1690 286h6" stroke="#ff0c07"/><path d="M1696 286h6" stroke="#ff0b06"/><path d="M1702 286h6" stroke="#ff0906"/><path d="M1708 286h6" stroke="#ff0705"/><path d="M1714 286h6" stroke="#ff0605"/><path d="M1720 286h6" stroke="#ff0404"/><path d="M1726 286h6" stroke="#ff0304"/><path d="M1732 286h6" stroke="#ff0203"/><path d="M1738 286h18" stroke="#ff0003"/><path d="M1756 286h6" stroke="#ff0002"/><path d="M1384 292h18" stroke="#0f6"/><path d="M1402 292h6" stroke="#0aff67"/><path d="M1408 292h6" stroke="#1bff68"/><path d="M1414 292h6" stroke="#2cff68"/><path d="M1420 292h6" stroke="#3eff69"/><path d="M1426 292h6" stroke="#50ff69"/><path d="M1432 292h6" stroke="#63ff6a"/><path d="M1438 292h6" stroke="#77ff6b"/><path d="M1444 292h6" stroke="#8cff6b"/><path d="M1450 292h6" stroke="#a1ff6c"/><path d="M1456 292h6" stroke="#b8ff6c"/><path d="M1462 292h6" stroke="#d0ff6d"/><path d="M1468 292h6" stroke="#e8ff6e"/><path d="M1474 292h6" stroke="#fffc6d"/><path d="M1480 292h6" stroke="#ffe464"/><path d="M1486 292h6" stroke="#ffd05b"/><path d="M1492 292h6" stroke="#ffbe54"/><path d="M1498 292h6" stroke="#ffae4e"/><path d="M1504 292h6" stroke="#ffa048"/><path d="M1510 292h6" stroke="#ff9343"/><path d="M1516 292h6" stroke="#ff883e"/><path d="M1522 292h6" stroke="#ff7e3a"/><path d="M1528 292h6" stroke="#ff7537"/><path d="M1534 292h6" stroke="#ff6c33"/><path d="M1540 292h6" stroke="#ff6530"/><path d="M1546 292h6" stroke="#ff5d2d"/><path d="M1552 292h6" stroke="#ff572b"/><path d="M1558 292h6" stroke="#ff5128"/><path d="M1564 292h6" stroke="#ff4b26"/><path d="M1570 292h6" stroke="#ff4624"/><path d="M1576 292h6" stroke="#ff4122"/><path d="M1582 292h6" stroke="#ff3d20"/><path d="M1588 292h6" stroke="#ff391e"/><path d="M1594 292h6" stroke="#ff351d"/><path d="M1600 292h6" stroke="#ff311b"/><path d="M1606 292h6" stroke="#ff2d1a"/><path d="M1612 292h6" stroke="#ff2a18"/><path d="M1618 292h6" stroke="#ff2717"/><path d="M1624 292h6" stroke="#ff2416"/><path d="M1630 292h6" stroke="#ff2115"/><path d="M1636 292h6" stroke="#ff1e14"/><path d="M1642 292h6" stroke="#ff1c13"/><path d="M1648 292h6" stroke="#ff1912"/><path d="M1654 292h6" stroke="#ff1711"/><path d="M1660 292h6" stroke="#ff1510"/><path d="M1666 292h6" stroke="#ff130f"/><path d="M1672 292h6" stroke="#ff110e"/><path d="M1678 292h6" stroke="#ff0f0d"/><path d="M1684 292h6" stroke="#ff0d0d"/><path d="M1690 292h6" stroke="#ff0b0c"/><path d="M1696 292h6" stroke="#ff090b"/><path d="M1702 292h6" stroke="#ff080b"/><path d="M1708 292h6" stroke="#ff060a"/><path d="M1714 292h6" stroke="#ff0509"/><path d="M1720 292h6" stroke="#ff0309"/><path d="M1726 292h6" stroke="#ff0208"/><path d="M1732 292h12" stroke="#ff0008"/><path d="M1744 292h18" stroke="#ff0007"/><path d="M1384 298h12" stroke="#00ff76"/><path d="M1396 298h6" stroke="#00ff78"/><path d="M1402 298h6" stroke="#08ff78"/><path d="M1408 298h6" stroke="#19ff79"/><path d="M1414 298h6" stroke="#2aff7a"/><path d="M1420 298h6" stroke="#3cff7b"/><path d="M1426 298h6" stroke="#4fff7c"/><path d="M1432 298h6" stroke="#62ff7d"/><path d="M1438 298h6" stroke="#77ff7e"/><path d="M1444 298h6" stroke="#8cff7f"/><path d="M1450 298h6" stroke="#a2ff80"/><path d="M1456 298h6" stroke="#b9ff81"/><path d="M1462 298h6" stroke="#d1ff82"/><path d="M1468 298h6" stroke="#eaff83"/><path d="M1474 298h6" stroke="#fff982"/><path d="M1480 298h6" stroke="#ffe276"/><path d="M1486 298h6" stroke="#ffcd6d"/><path d="M1492 298h6" stroke="#ffbb64"/><path d="M1498 298h6" stroke="#ffab5d"/><path d="M1504 298h6" stroke="#ff9d56"/><path d="M1510 298h6" stroke="#ff9150"/><path d="M1516 298h6" stroke="#ff854b"/><path d="M1522 298h6" stroke="#ff7b46"/><path d="M1528 298h6" stroke="#ff7242"/><path d="M1534 298h6" stroke="#ff6a3e"/><path d="M1540 298h6" stroke="#ff623b"/><path d="M1546 298h6" stroke="#ff5b37"/><path d="M1552 298h6" stroke="#ff5534"/><path d="M1558 298h6" stroke="#ff4f31"/><path d="M1564 298h6" stroke="#ff492f"/><path d="M1570 298h6" stroke="#ff442c"/><path d="M1576 298h6" stroke="#ff3f2a"/><path d="M1582 298h6" stroke="#ff3b28"/><path d="M1588 298h6" stroke="#ff3726"/><path d="M1594 298h6" stroke="#ff3324"/><path d="M1600 298h6" stroke="#ff2f22"/><path d="M1606 298h6" stroke="#ff2b21"/><path d="M1612 298h6" stroke="#ff281f"/><path d="M1618 298h6" stroke="#ff251e"/><path d="M1624 298h6" stroke="#ff221c"/><path d="M1630 298h6" stroke="#ff1f1b"/><path d="M1636 298h6" stroke="#ff1d1a"/><path d="M1642 298h6" stroke="#ff1a19"/><path d="M1648 298h6" stroke="#ff1818"/><path d="M1654 298h6" stroke="#ff1516"/><path d="M1660 298h6" stroke="#ff1315"/><path d="M1666 298h6" stroke="#ff1114"/><path d="M1672 298h6" stroke="#ff0f13"/><path d="M1678 298h6" stroke="#ff0d13"/><path d="M1684 298h6" stroke="#ff0b12"/><path d="M1690 298h6" stroke="#ff0a11"/><path d="M1696 298h6" stroke="#ff0810"/><path d="M1702 298h6" stroke="#ff060f"/><path d="M1708 298h6" stroke="#ff050f"/><path d="M1714 298h6" stroke="#ff030e"/><path d="M1720 298h6" stroke="#ff020d"/><path d="M1726 298h12" stroke="#ff000d"/><path d="M1738 298h12" stroke="#ff000b"/><path d="M1750 298h12" stroke="#ff000a"/><path d="M1384 304h6" stroke="#00ff87"/><path d="M1390 304h6" stroke="#0f8"/><path d="M1396 304h6" stroke="#00ff89"/><path d="M1402 304h6" stroke="#05ff8a"/><path d="M1408 304h6" stroke="#16ff8b"/><path d="M1414 304h6" stroke="#28ff8c"/><path d="M1420 304h6" stroke="#3aff8e"/><path d="M1426 304h6" stroke="#4dff8f"/><path d="M1432 304h6" stroke="#61ff90"/><path d="M1438 304h6" stroke="#76ff92"/><path d="M1444 304h6" stroke="#8cff93"/><path d="M1450 304h6" stroke="#a2ff95"/><path d="M1456 304h6" stroke="#baff96"/><path d="M1462 304h6" stroke="#d2ff98"/><path d="M1468 304h6" stroke="#ecff9a"/><path d="M1474 304h6" stroke="#fff797"/><path d="M1480 304h6" stroke="#ffdf8a"/><path d="M1486 304h6" stroke="#ffca7f"/><path d="M1492 304h6" stroke="#ffb875"/><path d="M1498 304h6" stroke="#ffa86c"/><path d="M1504 304h6" stroke="#ff9a65"/><path d="M1510 304h6" stroke="#ff8e5e"/><path d="M1516 304h6" stroke="#ff8358"/><path d="M1522 304h6" stroke="#ff7953"/><path d="M1528 304h6" stroke="#ff704e"/><path d="M1534 304h6" stroke="#ff6749"/><path d="M1540 304h6" stroke="#ff6045"/><path d="M1546 304h6" stroke="#ff5941"/><path d="M1552 304h6" stroke="#ff523e"/><path d="M1558 304h6" stroke="#ff4c3b"/><path d="M1564 304h6" stroke="#ff4738"/><path d="M1570 304h6" stroke="#ff4235"/><path d="M1576 304h6" stroke="#ff3d32"/><path d="M1582 304h6" stroke="#ff3930"/><path d="M1588 304h6" stroke="#ff342e"/><path d="M1594 304h6" stroke="#ff312c"/><path d="M1600 304h6" stroke="#ff2d2a"/><path d="M1606 304h6" stroke="#ff2928"/><path d="M1612 304h6" stroke="#ff2626"/><path d="M1618 304h6" stroke="#ff2324"/><path d="M1624 304h6" stroke="#ff2023"/><path d="M1630 304h6" stroke="#ff1d21"/><path d="M1636 304h6" stroke="#ff1b20"/><path d="M1642 304h6" stroke="#ff181f"/><path d="M1648 304h6" stroke="#ff161d"/><path d="M1654 304h6" stroke="#ff141c"/><path d="M1660 304h6" stroke="#ff121b"/><path d="M1666 304h6" stroke="#ff0f1a"/><path d="M1672 304h6" stroke="#ff0e19"/><path d="M1678 304h6" stroke="#ff0c18"/><path d="M1684 304h6" stroke="#ff0a17"/><path d="M1690 304h6" stroke="#ff0816"/><path d="M1696 304h6" stroke="#ff0615"/><path d="M1702 304h6" stroke="#ff0514"/><path d="M1708 304h6" stroke="#ff0313"/><path d="M1714 304h6" stroke="#ff0213"/><path d="M1720 304h12" stroke="#ff0012"/><path d="M1732 304h12" stroke="#ff0010"/><path d="M1744 304h12" stroke="#ff000f"/><path d="M1384 310h6" stroke="#00ff98"/><path d="M1390 310h6" stroke="#0f9"/><path d="M1396 310h6" stroke="#00ff9b"/><path d="M1402 310h6" stroke="#03ff9c"/><path d="M1408 310h6" stroke="#14ff9e"/><path d="M1414 310h6" stroke="#26ff9f"/><path d="M1420 310h6" stroke="#39ffa1"/><path d="M1426 310h6" stroke="#4cffa3"/><path d="M1432 310h6" stroke="#60ffa5"/><path d="M1438 310h6" stroke="#75ffa7"/><path d="M1444 310h6" stroke="#8bffa9"/><path d="M1450 310h6" stroke="#a3ffab"/><path d="M1456 310h6" stroke="#bbffad"/><path d="M1462 310h6" stroke="#d4ffaf"/><path d="M1468 310h6" stroke="#eeffb1"/><path d="M1474 310h6" stroke="#fff4ac"/><path d="M1480 310h6" stroke="#ffdc9e"/><path d="M1486 310h6" stroke="#ffc791"/><path d="M1492 310h6" stroke="#ffb586"/><path d="M1498 310h6" stroke="#ffa67c"/><path d="M1504 310h6" stroke="#ff9874"/><path d="M1510 310h6" stroke="#ff8b6c"/><path d="M1516 310h6" stroke="#ff8065"/><path d="M1522 310h6" stroke="#ff765f"/><path d="M1528 310h6" stroke="#ff6d5a"/><path d="M1534 310h6" stroke="#ff6555"/><path d="M1540 310h6" stroke="#ff5d50"/><path d="M1546 310h6" stroke="#ff564c"/><path d="M1552 310h6" stroke="#ff5048"/><path d="M1558 310h6" stroke="#ff4a44"/><path d="M1564 310h6" stroke="#ff4541"/><path d="M1570 310h6" stroke="#ff403e"/><path d="M1576 310h6" stroke="#ff3b3b"/><path d="M1582 310h6" stroke="#ff3738"/><path d="M1588 310h6" stroke="#ff3236"/><path d="M1594 310h6" stroke="#ff2f33"/><path d="M1600 310h6" stroke="#ff2b31"/><path d="M1606 310h6" stroke="#ff282f"/><path d="M1612 310h6" stroke="#ff242d"/><path d="M1618 310h6" stroke="#ff212b"/><path d="M1624 310h6" stroke="#ff1e29"/><path d="M1630 310h6" stroke="#ff1c28"/><path d="M1636 310h6" stroke="#ff1926"/><path d="M1642 310h6" stroke="#ff1725"/><path d="M1648 310h6" stroke="#ff1423"/><path d="M1654 310h6" stroke="#ff1222"/><path d="M1660 310h6" stroke="#ff1021"/><path d="M1666 310h6" stroke="#ff0e1f"/><path d="M1672 310h6" stroke="#ff0c1e"/><path d="M1678 310h6" stroke="#ff0a1d"/><path d="M1684 310h6" stroke="#ff081c"/><path d="M1690 310h6" stroke="#ff071b"/><path d="M1696 310h6" stroke="#ff051a"/><path d="M1702 310h6" stroke="#ff0319"/><path d="M1708 310h6" stroke="#ff0218"/><path d="M1714 310h12" stroke="#ff0017"/><path d="M1726 310h12" stroke="#ff0015"/><path d="M1738 310h12" stroke="#ff0014"/><path d="M1384 316h6" stroke="#0fa"/><path d="M1390 316h6" stroke="#00ffac"/><path d="M1396 316h6" stroke="#00ffad"/><path d="M1402 316h6" stroke="#00ffaf"/><path d="M1408 316h6" stroke="#11ffb1"/><path d="M1414 316h6" stroke="#24ffb3"/><path d="M1420 316h6" stroke="#37ffb5"/><path d="M1426 316h6" stroke="#4bffb8"/><path d="M1432 316h6" stroke="#5fffba"/><path d="M1438 316h6" stroke="#75ffbc"/><path d="M1444 316h6" stroke="#8bffbf"/><path d="M1450 316h6" stroke="#a3ffc1"/><path d="M1456 316h6" stroke="#bcffc4"/><path d="M1462 316h6" stroke="#d5ffc7"/><path d="M1468 316h6" stroke="#f1ffca"/><path d="M1474 316h6" stroke="#fff2c2"/><path d="M1480 316h6" stroke="#ffd9b2"/><path d="M1486 316h6" stroke="#ffc5a3"/><path d="M1492 316h6" stroke="#ffb397"/><path d="M1498 316h6" stroke="#ffa38c"/><path d="M1504 316h6" stroke="#ff9583"/><path d="M1510 316h6" stroke="#ff887a"/><path d="M1516 316h6" stroke="#ff7d73"/><path d="M1522 316h6" stroke="#ff736c"/><path d="M1528 316h6" stroke="#ff6a66"/><path d="M1534 316h6" stroke="#ff6260"/><path d="M1540 316h6" stroke="#ff5b5b"/><path d="M1546 316h6" stroke="#ff5456"/><path d="M1552 316h6" stroke="#ff4e52"/><path d="M1558 316h6" stroke="#ff484e"/><path d="M1564 316h6" stroke="#ff424a"/><path d="M1570 316h6" stroke="#ff3d47"/><path d="M1576 316h6" stroke="#ff3943"/><path d="M1582 316h6" stroke="#ff3440"/><path d="M1588 316h6" stroke="#ff303e"/><path d="M1594 316h6" stroke="#ff2d3b"/><path d="M1600 316h6" stroke="#ff2939"/><path d="M1606 316h6" stroke="#ff2636"/><path d="M1612 316h6" stroke="#ff2234"/><path d="M1618 316h6" stroke="#ff1f32"/><path d="M1624 316h6" stroke="#ff1d30"/><path d="M1630 316h6" stroke="#ff1a2e"/><path d="M1636 316h6" stroke="#ff172c"/><path d="M1642 316h6" stroke="#ff152b"/><path d="M1648 316h6" stroke="#ff1329"/><path d="M1654 316h6" stroke="#ff1028"/><path d="M1660 316h6" stroke="#ff0e26"/><path d="M1666 316h6" stroke="#ff0c25"/><path d="M1672 316h6" stroke="#ff0a24"/><path d="M1678 316h6" stroke="#ff0922"/><path d="M1684 316h6" stroke="#ff0721"/><path d="M1690 316h6" stroke="#ff0520"/><path d="M1696 316h6" stroke="#ff041f"/><path d="M1702 316h6" stroke="#ff021e"/><path d="M1708 316h12" stroke="#ff011d"/><path d="M1720 316h12" stroke="#ff001b"/><path d="M1732 316h12" stroke="#ff0019"/><path d="M1390 322h6" stroke="#00ffbf"/><path d="M1396 322h6" stroke="#00ffc1"/><path d="M1402 322h6" stroke="#00ffc3"/><path d="M1408 322h6" stroke="#0fffc5"/><path d="M1414 322h6" stroke="#21ffc8"/><path d="M1420 322h6" stroke="#35ffcb"/><path d="M1426 322h6" stroke="#49ffcd"/><path d="M1432 322h6" stroke="#5effd0"/><path d="M1438 322h6" stroke="#74ffd3"/><path d="M1444 322h6" stroke="#8bffd6"/><path d="M1450 322h6" stroke="#a3ffd9"/><path d="M1456 322h6" stroke="#bdffdd"/><path d="M1462 322h6" stroke="#d7ffe0"/><path d="M1468 322h6" stroke="#f3ffe4"/><path d="M1474 322h6" stroke="#ffefd9"/><path d="M1480 322h6" stroke="#ffd6c7"/><path d="M1486 322h6" stroke="#ffc2b7"/><path d="M1492 322h6" stroke="#ffb0a9"/><path d="M1498 322h6" stroke="#ffa09d"/><path d="M1504 322h6" stroke="#ff9292"/><path d="M1510 322h6" stroke="#ff8689"/><path d="M1516 322h6" stroke="#ff7b80"/><path d="M1522 322h6" stroke="#ff7179"/><path d="M1528 322h6" stroke="#ff6872"/><path d="M1534 322h6" stroke="#ff606c"/><path d="M1540 322h6" stroke="#ff5866"/><path d="M1546 322h6" stroke="#ff5161"/><path d="M1552 322h6" stroke="#ff4b5c"/><path d="M1558 322h6" stroke="#ff4557"/><path d="M1564 322h6" stroke="#ff4053"/><path d="M1570 322h6" stroke="#ff3b50"/><path d="M1576 322h6" stroke="#ff374c"/><path d="M1582 322h6" stroke="#ff3249"/><path d="M1588 322h6" stroke="#ff2e46"/><path d="M1594 322h6" stroke="#ff2b43"/><path d="M1600 322h6" stroke="#ff2740"/><path d="M1606 322h6" stroke="#ff243e"/><path d="M1612 322h6" stroke="#ff213b"/><path d="M1618 322h6" stroke="#ff1e39"/><path d="M1624 322h6" stroke="#ff1b37"/><path d="M1630 322h6" stroke="#ff1835"/><path d="M1636 322h6" stroke="#ff1633"/><path d="M1642 322h6" stroke="#ff1331"/><path d="M1648 322h6" stroke="#ff112f"/><path d="M1654 322h6" stroke="#ff0f2e"/><path d="M1660 322h6" stroke="#ff0d2c"/><path d="M1666 322h6" stroke="#ff0b2a"/><path d="M1672 322h6" stroke="#ff0929"/><path d="M1678 322h6" stroke="#ff0728"/><path d="M1684 322h6" stroke="#ff0526"/><path d="M1690 322h6" stroke="#ff0425"/><path d="M1696 322h6" stroke="#ff0224"/><path d="M1702 322h6" stroke="#ff0123"/><path d="M1708 322h6" stroke="#f02"/><path d="M1714 322h6" stroke="#ff0020"/><path d="M1720 322h12" stroke="#ff001f"/><path d="M1732 322h6" stroke="#ff001d"/><path d="M1390 328h6" stroke="#00ffd2"/><path d="M1396 328h6" stroke="#00ffd5"/><path d="M1402 328h6" stroke="#00ffd8"/><path d="M1408 328h6" stroke="#0cffda"/><path d="M1414 328h6" stroke="#1fffdd"/><path d="M1420 328h6" stroke="#33ffe1"/><path d="M1426 328h6" stroke="#47ffe4"/><path d="M1432 328h6" stroke="#5dffe7"/><path d="M1438 328h6" stroke="#73ffeb"/><path d="M1444 328h6" stroke="#8bffee"/><path d="M1450 328h6" stroke="#a4fff2"/><path d="M1456 328h6" stroke="#befff6"/><path d="M1462 328h6" stroke="#d9fffb"/><path d="M1468 328h6" stroke="#f5ffff"/><path d="M1474 328h6" stroke="#ffecf1"/><path d="M1480 328h6" stroke="#ffd3dc"/><path d="M1486 328h6" stroke="#ffbfca"/><path d="M1492 328h6" stroke="#ffadbb"/><path d="M1498 328h6" stroke="#ff9dad"/><path d="M1504 328h6" stroke="#ff8fa2"/><path d="M1510 328h6" stroke="#ff8397"/><path d="M1516 328h6" stroke="#ff788e"/><path d="M1522 328h6" stroke="#ff6e86"/><path d="M1528 328h6" stroke="#ff657e"/><path d="M1534 328h6" stroke="#ff5d77"/><path d="M1540 328h6" stroke="#ff5671"/><path d="M1546 328h6" stroke="#ff4f6b"/><path d="M1552 328h6" stroke="#ff4966"/><path d="M1558 328h6" stroke="#ff4361"/><path d="M1564 328h6" stroke="#ff3e5d"/><path d="M1570 328h6" stroke="#ff3959"/><path d="M1576 328h6" stroke="#ff3455"/><path d="M1582 328h6" stroke="#ff3051"/><path d="M1588 328h6" stroke="#ff2c4e"/><path d="M1594 328h6" stroke="#ff284b"/><path d="M1600 328h6" stroke="#ff2548"/><path d="M1606 328h6" stroke="#ff2245"/><path d="M1612 328h6" stroke="#ff1f42"/><path d="M1618 328h6" stroke="#ff1c40"/><path d="M1624 328h6" stroke="#ff193d"/><path d="M1630 328h6" stroke="#ff163b"/><path d="M1636 328h6" stroke="#ff1439"/><path d="M1642 328h6" stroke="#ff1137"/><path d="M1648 328h6" stroke="#ff0f35"/><path d="M1654 328h6" stroke="#ff0d33"/><path d="M1660 328h6" stroke="#ff0b32"/><path d="M1666 328h6" stroke="#ff0930"/><path d="M1672 328h6" stroke="#ff072e"/><path d="M1678 328h6" stroke="#ff052d"/><path d="M1684 328h6" stroke="#ff042b"/><path d="M1690 328h6" stroke="#ff022a"/><path d="M1696 328h6" stroke="#ff0129"/><path d="M1702 328h6" stroke="#ff0028"/><path d="M1708 328h6" stroke="#ff0026"/><path d="M1714 328h6" stroke="#ff0025"/><path d="M1720 328h6" stroke="#ff0024"/><path d="M1726 328h6" stroke="#ff0023"/><path d="M1390 334h6" stroke="#00ffe7"/><path d="M1396 334h6" stroke="#00ffea"/><path d="M1402 334h6" stroke="#00ffed"/><path d="M1408 334h6" stroke="#09fff0"/><path d="M1414 334h6" stroke="#1dfff4"/><path d="M1420 334h6" stroke="#31fff8"/><path d="M1426 334h6" stroke="#46fffb"/><path d="M1432 334h6" stroke="#5cffff"/><path d="M1438 334h6" stroke="#71faff"/><path d="M1444 334h6" stroke="#86f6ff"/><path d="M1450 334h6" stroke="#9cf2ff"/><path d="M1456 334h6" stroke="#b2eeff"/><path d="M1462 334h6" stroke="#c8e9ff"/><path d="M1468 334h6" stroke="#dfe5ff"/><path d="M1474 334h6" stroke="#f6e0ff"/><path d="M1480 334h6" stroke="#ffd0f2"/><path d="M1486 334h6" stroke="#ffbcde"/><path d="M1492 334h6" stroke="#ffaacd"/><path d="M1498 334h6" stroke="#ff9abf"/><path d="M1504 334h6" stroke="#ff8cb2"/><path d="M1510 334h6" stroke="#ff80a6"/><path d="M1516 334h6" stroke="#ff759c"/><path d="M1522 334h6" stroke="#ff6b93"/><path d="M1528 334h6" stroke="#ff628b"/><path d="M1534 334h6" stroke="#ff5a83"/><path d="M1540 334h6" stroke="#ff537c"/><path d="M1546 334h6" stroke="#ff4c76"/><path d="M1552 334h6" stroke="#ff4670"/><path d="M1558 334h6" stroke="#ff416b"/><path d="M1564 334h6" stroke="#ff3b66"/><path d="M1570 334h6" stroke="#ff3762"/><path d="M1576 334h6" stroke="#ff325e"/><path d="M1582 334h6" stroke="#ff2e5a"/><path d="M1588 334h6" stroke="#ff2a56"/><path d="M1594 334h6" stroke="#ff2653"/><path d="M1600 334h6" stroke="#ff234f"/><path d="M1606 334h6" stroke="#ff204c"/><path d="M1612 334h6" stroke="#ff1d49"/><path d="M1618 334h6" stroke="#ff1a47"/><path d="M1624 334h6" stroke="#ff1744"/><path d="M1630 334h6" stroke="#ff1442"/><path d="M1636 334h6" stroke="#ff1240"/><path d="M1642 334h6" stroke="#ff103d"/><path d="M1648 334h6" stroke="#ff0d3b"/><path d="M1654 334h6" stroke="#ff0b39"/><path d="M1660 334h6" stroke="#ff0937"/><path d="M1666 334h6" stroke="#ff0736"/><path d="M1672 334h6" stroke="#ff0634"/><path d="M1678 334h6" stroke="#ff0432"/><path d="M1684 334h6" stroke="#ff0231"/><path d="M1690 334h6" stroke="#ff012f"/><path d="M1696 334h6" stroke="#ff002e"/><path d="M1702 334h6" stroke="#ff002c"/><path d="M1708 334h6" stroke="#ff002b"/><path d="M1714 334h6" stroke="#ff002a"/><path d="M1720 334h6" stroke="#ff0029"/><path d="M1390 340h6" stroke="#00fffc"/><path d="M1396 340h6" stroke="#0ff"/><path d="M1402 340h6" stroke="#00fbff"/><path d="M1408 340h6" stroke="#06f7ff"/><path d="M1414 340h6" stroke="#19f3ff"/><path d="M1420 340h6" stroke="#2cefff"/><path d="M1426 340h6" stroke="#3fecff"/><path d="M1432 340h6" stroke="#52e8ff"/><path d="M1438 340h6" stroke="#66e4ff"/><path d="M1444 340h6" stroke="#7ae0ff"/><path d="M1450 340h6" stroke="#8edcff"/><path d="M1456 340h6" stroke="#a2d7ff"/><path d="M1462 340h6" stroke="#b7d3ff"/><path d="M1468 340h6" stroke="#cccfff"/><path d="M1474 340h6" stroke="#e1cbff"/><path d="M1480 340h6" stroke="#f6c6ff"/><path d="M1486 340h6" stroke="#ffb8f3"/><path d="M1492 340h6" stroke="#ffa6e0"/><path d="M1498 340h6" stroke="#ff97d0"/><path d="M1504 340h6" stroke="#ff89c2"/><path d="M1510 340h6" stroke="#ff7db6"/><path d="M1516 340h6" stroke="#ff72aa"/><path d="M1522 340h6" stroke="#ff68a0"/><path d="M1528 340h6" stroke="#ff6098"/><path d="M1534 340h6" stroke="#ff588f"/><path d="M1540 340h6" stroke="#ff5188"/><path d="M1546 340h6" stroke="#ff4a81"/><path d="M1552 340h6" stroke="#ff447b"/><path d="M1558 340h6" stroke="#ff3e75"/><path d="M1564 340h6" stroke="#ff3970"/><path d="M1570 340h6" stroke="#ff346b"/><path d="M1576 340h6" stroke="#ff3066"/><path d="M1582 340h6" stroke="#ff2c62"/><path d="M1588 340h6" stroke="#ff285e"/><path d="M1594 340h6" stroke="#ff245b"/><path d="M1600 340h6" stroke="#ff2157"/><path d="M1606 340h6" stroke="#ff1e54"/><path d="M1612 340h6" stroke="#ff1b51"/><path d="M1618 340h6" stroke="#ff184e"/><path d="M1624 340h6" stroke="#ff154b"/><path d="M1630 340h6" stroke="#ff1348"/><path d="M1636 340h6" stroke="#ff1046"/><path d="M1642 340h6" stroke="#ff0e44"/><path d="M1648 340h6" stroke="#ff0c41"/><path d="M1654 340h6" stroke="#ff0a3f"/><path d="M1660 340h6" stroke="#ff083d"/><path d="M1666 340h6" stroke="#ff063b"/><path d="M1672 340h6" stroke="#ff0439"/><path d="M1678 340h6" stroke="#ff0238"/><path d="M1684 340h6" stroke="#ff0136"/><path d="M1690 340h6" stroke="#ff0034"/><path d="M1696 340h6" stroke="#f03"/><path d="M1702 340h6" stroke="#ff0031"/><path d="M1708 340h6" stroke="#ff0030"/><path d="M1714 340h6" stroke="#ff002f"/><path d="M1390 346h6" stroke="#00edff"/><path d="M1396 346h6" stroke="#00eaff"/><path d="M1402 346h6" stroke="#00e6ff"/><path d="M1408 346h6" stroke="#03e3ff"/><path d="M1414 346h6" stroke="#15dfff"/><path d="M1420 346h6" stroke="#26dbff"/><path d="M1426 346h6" stroke="#38d7ff"/><path d="M1432 346h6" stroke="#4ad4ff"/><path d="M1438 346h6" stroke="#5cd0ff"/><path d="M1444 346h6" stroke="#6fccff"/><path d="M1450 346h6" stroke="#81c8ff"/><path d="M1456 346h6" stroke="#94c4ff"/><path d="M1462 346h6" stroke="#a8c0ff"/><path d="M1468 346h6" stroke="#bbbcff"/><path d="M1474 346h6" stroke="#cfb8ff"/><path d="M1480 346h6" stroke="#e2b4ff"/><path d="M1486 346h6" stroke="#f7afff"/><path d="M1492 346h6" stroke="#ffa3f3"/><path d="M1498 346h6" stroke="#ff94e2"/><path d="M1504 346h6" stroke="#ff86d3"/><path d="M1510 346h6" stroke="#ff7ac5"/><path d="M1516 346h6" stroke="#ff6fb9"/><path d="M1522 346h6" stroke="#ff66ae"/><path d="M1528 346h6" stroke="#ff5da5"/><path d="M1534 346h6" stroke="#ff559c"/><path d="M1540 346h6" stroke="#ff4e94"/><path d="M1546 346h6" stroke="#ff478c"/><path d="M1552 346h6" stroke="#ff4186"/><path d="M1558 346h6" stroke="#ff3c7f"/><path d="M1564 346h6" stroke="#ff377a"/><path d="M1570 346h6" stroke="#ff3274"/><path d="M1576 346h6" stroke="#ff2e70"/><path d="M1582 346h6" stroke="#ff2a6b"/><path d="M1588 346h6" stroke="#ff2667"/><path d="M1594 346h6" stroke="#ff2263"/><path d="M1600 346h6" stroke="#ff1f5f"/><path d="M1606 346h6" stroke="#ff1c5b"/><path d="M1612 346h6" stroke="#ff1958"/><path d="M1618 346h6" stroke="#ff1655"/><path d="M1624 346h6" stroke="#ff1352"/><path d="M1630 346h6" stroke="#ff114f"/><path d="M1636 346h6" stroke="#ff0e4c"/><path d="M1642 346h6" stroke="#ff0c4a"/><path d="M1648 346h6" stroke="#ff0a48"/><path d="M1654 346h6" stroke="#ff0845"/><path d="M1660 346h6" stroke="#ff0643"/><path d="M1666 346h6" stroke="#ff0441"/><path d="M1672 346h6" stroke="#ff023f"/><path d="M1678 346h6" stroke="#ff013d"/><path d="M1684 346h6" stroke="#ff003b"/><path d="M1690 346h6" stroke="#ff003a"/><path d="M1696 346h6" stroke="#ff0038"/><path d="M1702 346h6" stroke="#ff0036"/><path d="M1708 346h6" stroke="#ff0035"/><path d="M1390 352h6" stroke="#00dbff"/><path d="M1396 352h6" stroke="#00d8ff"/><path d="M1402 352h6" stroke="#00d4ff"/><path d="M1408 352h6" stroke="#00d1ff"/><path d="M1414 352h6" stroke="#11cdff"/><path d="M1420 352h6" stroke="#21c9ff"/><path d="M1426 352h6" stroke="#32c6ff"/><path d="M1432 352h6" stroke="#43c2ff"/><path d="M1438 352h6" stroke="#54beff"/><path d="M1444 352h6" stroke="#65bbff"/><path d="M1450 352h6" stroke="#77b7ff"/><path d="M1456 352h6" stroke="#88b3ff"/><path d="M1462 352h6" stroke="#9aafff"/><path d="M1468 352h6" stroke="#acabff"/><path d="M1474 352h6" stroke="#bfa7ff"/><path d="M1480 352h6" stroke="#d1a3ff"/><path d="M1486 352h6" stroke="#e49fff"/><path d="M1492 352h6" stroke="#f79bff"/><path d="M1498 352h6" stroke="#ff90f4"/><path d="M1504 352h6" stroke="#ff83e4"/><path d="M1510 352h6" stroke="#ff77d5"/><path d="M1516 352h6" stroke="#ff6cc8"/><path d="M1522 352h6" stroke="#ff63bc"/><path d="M1528 352h6" stroke="#ff5ab2"/><path d="M1534 352h6" stroke="#ff52a8"/><path d="M1540 352h6" stroke="#ff4ba0"/><path d="M1546 352h6" stroke="#ff4598"/><path d="M1552 352h6" stroke="#ff3f90"/><path d="M1558 352h6" stroke="#ff398a"/><path d="M1564 352h6" stroke="#ff3484"/><path d="M1570 352h6" stroke="#ff307e"/><path d="M1576 352h6" stroke="#ff2b79"/><path d="M1582 352h6" stroke="#ff2774"/><path d="M1588 352h6" stroke="#ff246f"/><path d="M1594 352h6" stroke="#ff206b"/><path d="M1600 352h6" stroke="#ff1d67"/><path d="M1606 352h6" stroke="#ff1a63"/><path d="M1612 352h6" stroke="#ff175f"/><path d="M1618 352h6" stroke="#ff145c"/><path d="M1624 352h6" stroke="#ff1159"/><path d="M1630 352h6" stroke="#ff0f56"/><path d="M1636 352h6" stroke="#ff0d53"/><path d="M1642 352h6" stroke="#ff0a50"/><path d="M1648 352h6" stroke="#ff084e"/><path d="M1654 352h6" stroke="#ff064b"/><path d="M1660 352h6" stroke="#ff0449"/><path d="M1666 352h6" stroke="#ff0347"/><path d="M1672 352h6" stroke="#ff0145"/><path d="M1678 352h6" stroke="#ff0043"/><path d="M1684 352h6" stroke="#ff0041"/><path d="M1690 352h6" stroke="#ff003f"/><path d="M1696 352h6" stroke="#ff003d"/><path d="M1702 352h6" stroke="#ff003b"/><path d="M1396 358h6" stroke="#00c7ff"/><path d="M1402 358h6" stroke="#00c4ff"/><path d="M1408 358h6" stroke="#00c1ff"/><path d="M1414 358h6" stroke="#0dbdff"/><path d="M1420 358h6" stroke="#1dbaff"/><path d="M1426 358h6" stroke="#2db6ff"/><path d="M1432 358h6" stroke="#3cb3ff"/><path d="M1438 358h6" stroke="#4dafff"/><path d="M1444 358h6" stroke="#5dabff"/><path d="M1450 358h6" stroke="#6da8ff"/><path d="M1456 358h6" stroke="#7ea4ff"/><path d="M1462 358h6" stroke="#8fa0ff"/><path d="M1468 358h6" stroke="#a09cff"/><path d="M1474 358h6" stroke="#b199ff"/><path d="M1480 358h6" stroke="#c295ff"/><path d="M1486 358h6" stroke="#d491ff"/><path d="M1492 358h6" stroke="#e58dff"/><path d="M1498 358h6" stroke="#f789ff"/><path d="M1504 358h6" stroke="#ff80f5"/><path d="M1510 358h6" stroke="#ff74e5"/><path d="M1516 358h6" stroke="#ff69d7"/><path d="M1522 358h6" stroke="#ff60ca"/><path d="M1528 358h6" stroke="#ff57bf"/><path d="M1534 358h6" stroke="#ff4fb5"/><path d="M1540 358h6" stroke="#ff48ac"/><path d="M1546 358h6" stroke="#ff42a3"/><path d="M1552 358h6" stroke="#ff3c9b"/><path d="M1558 358h6" stroke="#ff3794"/><path d="M1564 358h6" stroke="#ff328e"/><path d="M1570 358h6" stroke="#ff2d88"/><path d="M1576 358h6" stroke="#ff2982"/><path d="M1582 358h6" stroke="#ff257d"/><path d="M1588 358h6" stroke="#ff2178"/><path d="M1594 358h6" stroke="#ff1e73"/><path d="M1600 358h6" stroke="#ff1b6f"/><path d="M1606 358h6" stroke="#ff186b"/><path d="M1612 358h6" stroke="#ff1567"/><path d="M1618 358h6" stroke="#ff1263"/><path d="M1624 358h6" stroke="#ff0f60"/><path d="M1630 358h6" stroke="#ff0d5d"/><path d="M1636 358h6" stroke="#ff0b5a"/><path d="M1642 358h6" stroke="#ff0957"/><path d="M1648 358h6" stroke="#ff0654"/><path d="M1654 358h6" stroke="#ff0551"/><path d="M1660 358h6" stroke="#ff034f"/><path d="M1666 358h6" stroke="#ff014d"/><path d="M1672 358h6" stroke="#ff004a"/><path d="M1678 358h6" stroke="#ff0048"/><path d="M1684 358h6" stroke="#ff0046"/><path d="M1690 358h6" stroke="#f04"/><path d="M1696 358h6" stroke="#ff0042"/><path d="M1396 364h6" stroke="#00b9ff"/><path d="M1402 364h6" stroke="#00b6ff"/><path d="M1408 364h6" stroke="#00b2ff"/><path d="M1414 364h6" stroke="#0aafff"/><path d="M1420 364h6" stroke="#19acff"/><path d="M1426 364h6" stroke="#28a8ff"/><path d="M1432 364h6" stroke="#37a5ff"/><path d="M1438 364h6" stroke="#46a1ff"/><path d="M1444 364h6" stroke="#559eff"/><path d="M1450 364h6" stroke="#659aff"/><path d="M1456 364h6" stroke="#7497ff"/><path d="M1462 364h6" stroke="#8493ff"/><path d="M1468 364h6" stroke="#948fff"/><path d="M1474 364h6" stroke="#a48cff"/><path d="M1480 364h6" stroke="#b588ff"/><path d="M1486 364h6" stroke="#c584ff"/><path d="M1492 364h6" stroke="#d680ff"/><path d="M1498 364h6" stroke="#e77dff"/><path d="M1504 364h6" stroke="#f879ff"/><path d="M1510 364h6" stroke="#ff70f6"/><path d="M1516 364h6" stroke="#ff66e6"/><path d="M1522 364h6" stroke="#ff5dd9"/><path d="M1528 364h6" stroke="#ff54cd"/><path d="M1534 364h6" stroke="#ff4dc2"/><path d="M1540 364h6" stroke="#ff46b8"/><path d="M1546 364h6" stroke="#ff3faf"/><path d="M1552 364h6" stroke="#ff3aa6"/><path d="M1558 364h6" stroke="#ff349f"/><path d="M1564 364h6" stroke="#ff2f98"/><path d="M1570 364h6" stroke="#ff2b91"/><path d="M1576 364h6" stroke="#ff278b"/><path d="M1582 364h6" stroke="#ff2386"/><path d="M1588 364h6" stroke="#ff1f80"/><path d="M1594 364h6" stroke="#ff1c7b"/><path d="M1600 364h6" stroke="#ff1877"/><path d="M1606 364h6" stroke="#ff1573"/><path d="M1612 364h6" stroke="#ff136e"/><path d="M1618 364h6" stroke="#ff106b"/><path d="M1624 364h6" stroke="#ff0d67"/><path d="M1630 364h6" stroke="#ff0b64"/><path d="M1636 364h6" stroke="#ff0960"/><path d="M1642 364h6" stroke="#ff075d"/><path d="M1648 364h6" stroke="#ff055a"/><path d="M1654 364h6" stroke="#ff0358"/><path d="M1660 364h6" stroke="#ff0155"/><path d="M1666 364h6" stroke="#ff0052"/><path d="M1672 364h6" stroke="#ff0050"/><path d="M1678 364h6" stroke="#ff004e"/><path d="M1684 364h6" stroke="#ff004c"/><path d="M1690 364h6" stroke="#ff004a"/><path d="M1396 370h6" stroke="#00acff"/><path d="M1402 370h6" stroke="#00a9ff"/><path d="M1408 370h6" stroke="#00a5ff"/><path d="M1414 370h6" stroke="#07a2ff"/><path d="M1420 370h6" stroke="#159fff"/><path d="M1426 370h6" stroke="#239cff"/><path d="M1432 370h6" stroke="#3298ff"/><path d="M1438 370h6" stroke="#4095ff"/><path d="M1444 370h6" stroke="#4f92ff"/><path d="M1450 370h6" stroke="#5d8eff"/><path d="M1456 370h6" stroke="#6c8bff"/><path d="M1462 370h6" stroke="#7b87ff"/><path d="M1468 370h6" stroke="#8a84ff"/><path d="M1474 370h6" stroke="#9980ff"/><path d="M1480 370h6" stroke="#a97dff"/><path d="M1486 370h6" stroke="#b879ff"/><path d="M1492 370h6" stroke="#c875ff"/><path d="M1498 370h6" stroke="#d872ff"/><path d="M1504 370h6" stroke="#e86eff"/><path d="M1510 370h6" stroke="#f86aff"/><path d="M1516 370h6" stroke="#ff63f6"/><path d="M1522 370h6" stroke="#ff59e8"/><path d="M1528 370h6" stroke="#ff51db"/><path d="M1534 370h6" stroke="#ff4acf"/><path d="M1540 370h6" stroke="#ff43c4"/><path d="M1546 370h6" stroke="#ff3dbb"/><path d="M1552 370h6" stroke="#ff37b2"/><path d="M1558 370h6" stroke="#ff32aa"/><path d="M1564 370h6" stroke="#ff2da2"/><path d="M1570 370h6" stroke="#ff289b"/><path d="M1576 370h6" stroke="#ff2495"/><path d="M1582 370h6" stroke="#ff208f"/><path d="M1588 370h6" stroke="#ff1d89"/><path d="M1594 370h6" stroke="#ff1984"/><path d="M1600 370h6" stroke="#ff167f"/><path d="M1606 370h6" stroke="#ff137a"/><path d="M1612 370h6" stroke="#ff1176"/><path d="M1618 370h6" stroke="#ff0e72"/><path d="M1624 370h6" stroke="#ff0b6e"/><path d="M1630 370h6" stroke="#ff096b"/><path d="M1636 370h6" stroke="#ff0767"/><path d="M1642 370h6" stroke="#ff0564"/><path d="M1648 370h6" stroke="#ff0361"/><path d="M1654 370h6" stroke="#ff015e"/><path d="M1660 370h6" stroke="#ff005b"/><path d="M1666 370h6" stroke="#ff0058"/><path d="M1672 370h6" stroke="#ff0056"/><path d="M1678 370h6" stroke="#ff0053"/><path d="M1684 370h6" stroke="#ff0051"/><path d="M1396 376h6" stroke="#00a0ff"/><path d="M1402 376h6" stroke="#009dff"/><path d="M1408 376h6" stroke="#009aff"/><path d="M1414 376h6" stroke="#0597ff"/><path d="M1420 376h6" stroke="#1293ff"/><path d="M1426 376h6" stroke="#2090ff"/><path d="M1432 376h6" stroke="#2d8dff"/><path d="M1438 376h6" stroke="#3b8aff"/><path d="M1444 376h6" stroke="#4887ff"/><path d="M1450 376h6" stroke="#5683ff"/><path d="M1456 376h6" stroke="#6480ff"/><path d="M1462 376h6" stroke="#737dff"/><path d="M1468 376h6" stroke="#8179ff"/><path d="M1474 376h6" stroke="#8f76ff"/><path d="M1480 376h6" stroke="#9e72ff"/><path d="M1486 376h6" stroke="#ad6fff"/><path d="M1492 376h6" stroke="#bb6bff"/><path d="M1498 376h6" stroke="#ca68ff"/><path d="M1504 376h6" stroke="#d964ff"/><path d="M1510 376h6" stroke="#e961ff"/><path d="M1516 376h6" stroke="#f85dff"/><path d="M1522 376h6" stroke="#ff56f7"/><path d="M1528 376h6" stroke="#ff4ee9"/><path d="M1534 376h6" stroke="#ff47dc"/><path d="M1540 376h6" stroke="#ff40d1"/><path d="M1546 376h6" stroke="#ff3ac7"/><path d="M1552 376h6" stroke="#ff34bd"/><path d="M1558 376h6" stroke="#ff2fb4"/><path d="M1564 376h6" stroke="#ff2aac"/><path d="M1570 376h6" stroke="#ff26a5"/><path d="M1576 376h6" stroke="#ff229e"/><path d="M1582 376h6" stroke="#ff1e98"/><path d="M1588 376h6" stroke="#ff1a92"/><path d="M1594 376h6" stroke="#ff178c"/><path d="M1600 376h6" stroke="#ff1487"/><path d="M1606 376h6" stroke="#ff1182"/><path d="M1612 376h6" stroke="#ff0e7e"/><path d="M1618 376h6" stroke="#ff0c79"/><path d="M1624 376h6" stroke="#ff0975"/><path d="M1630 376h6" stroke="#ff0772"/><path d="M1636 376h6" stroke="#ff056e"/><path d="M1642 376h6" stroke="#ff036a"/><path d="M1648 376h6" stroke="#ff0167"/><path d="M1654 376h6" stroke="#ff0064"/><path d="M1660 376h6" stroke="#ff0061"/><path d="M1666 376h6" stroke="#ff005e"/><path d="M1672 376h6" stroke="#ff005c"/><path d="M1678 376h6" stroke="#ff0059"/><path d="M1396 382h6" stroke="#0095ff"/><path d="M1402 382h6" stroke="#0092ff"/><path d="M1408 382h6" stroke="#008fff"/><path d="M1414 382h6" stroke="#038cff"/><path d="M1420 382h6" stroke="#0f89ff"/><path d="M1426 382h6" stroke="#1c86ff"/><path d="M1432 382h6" stroke="#2983ff"/><path d="M1438 382h6" stroke="#3680ff"/><path d="M1444 382h6" stroke="#437dff"/><path d="M1450 382h6" stroke="#5079ff"/><path d="M1456 382h6" stroke="#5e76ff"/><path d="M1462 382h6" stroke="#6b73ff"/><path d="M1468 382h6" stroke="#7970ff"/><path d="M1474 382h6" stroke="#866cff"/><path d="M1480 382h6" stroke="#9469ff"/><path d="M1486 382h6" stroke="#a266ff"/><path d="M1492 382h6" stroke="#b062ff"/><path d="M1498 382h6" stroke="#be5fff"/><path d="M1504 382h6" stroke="#cd5cff"/><path d="M1510 382h6" stroke="#db58ff"/><path d="M1516 382h6" stroke="#ea55ff"/><path d="M1522 382h6" stroke="#f851ff"/><path d="M1528 382h6" stroke="#ff4bf7"/><path d="M1534 382h6" stroke="#ff44ea"/><path d="M1540 382h6" stroke="#ff3dde"/><path d="M1546 382h6" stroke="#ff37d3"/><path d="M1552 382h6" stroke="#ff31c9"/><path d="M1558 382h6" stroke="#ff2cbf"/><path d="M1564 382h6" stroke="#ff28b7"/><path d="M1570 382h6" stroke="#ff23af"/><path d="M1576 382h6" stroke="#ff1fa8"/><path d="M1582 382h6" stroke="#ff1ca1"/><path d="M1588 382h6" stroke="#ff189b"/><path d="M1594 382h6" stroke="#ff1595"/><path d="M1600 382h6" stroke="#ff1290"/><path d="M1606 382h6" stroke="#ff0f8a"/><path d="M1612 382h6" stroke="#ff0c86"/><path d="M1618 382h6" stroke="#ff0a81"/><path d="M1624 382h6" stroke="#ff077d"/><path d="M1630 382h6" stroke="#ff0579"/><path d="M1636 382h6" stroke="#ff0375"/><path d="M1642 382h6" stroke="#ff0171"/><path d="M1648 382h6" stroke="#ff006e"/><path d="M1654 382h6" stroke="#ff006a"/><path d="M1660 382h6" stroke="#ff0067"/><path d="M1666 382h6" stroke="#ff0064"/><path d="M1672 382h6" stroke="#ff0061"/><path d="M1396 388h6" stroke="#008bff"/><path d="M1402 388h6" stroke="#08f"/><path d="M1408 388h6" stroke="#0085ff"/><path d="M1414 388h6" stroke="#0183ff"/><path d="M1420 388h6" stroke="#0d80ff"/><path d="M1426 388h6" stroke="#197dff"/><path d="M1432 388h6" stroke="#257aff"/><path d="M1438 388h6" stroke="#3277ff"/><path d="M1444 388h6" stroke="#3e74ff"/><path d="M1450 388h6" stroke="#4b70ff"/><path d="M1456 388h6" stroke="#576dff"/><path d="M1462 388h6" stroke="#646aff"/><path d="M1468 388h6" stroke="#7167ff"/><path d="M1474 388h6" stroke="#7e64ff"/><path d="M1480 388h6" stroke="#8b61ff"/><path d="M1486 388h6" stroke="#985dff"/><path d="M1492 388h6" stroke="#a65aff"/><path d="M1498 388h6" stroke="#b357ff"/><path d="M1504 388h6" stroke="#c154ff"/><path d="M1510 388h6" stroke="#cf50ff"/><path d="M1516 388h6" stroke="#dc4dff"/><path d="M1522 388h6" stroke="#ea49ff"/><path d="M1528 388h6" stroke="#f946ff"/><path d="M1534 388h6" stroke="#ff41f7"/><path d="M1540 388h6" stroke="#ff3aeb"/><path d="M1546 388h6" stroke="#ff34df"/><path d="M1552 388h6" stroke="#ff2fd4"/><path d="M1558 388h6" stroke="#ff2acb"/><path d="M1564 388h6" stroke="#ff25c2"/><path d="M1570 388h6" stroke="#ff21b9"/><path d="M1576 388h6" stroke="#ff1db2"/><path d="M1582 388h6" stroke="#ff19ab"/><path d="M1588 388h6" stroke="#ff16a4"/><path d="M1594 388h6" stroke="#ff139e"/><path d="M1600 388h6" stroke="#ff1098"/><path d="M1606 388h6" stroke="#ff0d92"/><path d="M1612 388h6" stroke="#ff0a8d"/><path d="M1618 388h6" stroke="#ff0889"/><path d="M1624 388h6" stroke="#ff0584"/><path d="M1630 388h6" stroke="#ff0380"/><path d="M1636 388h6" stroke="#ff017c"/><path d="M1642 388h6" stroke="#ff0078"/><path d="M1648 388h6" stroke="#ff0074"/><path d="M1654 388h6" stroke="#ff0071"/><path d="M1660 388h6" stroke="#ff006e"/><path d="M1666 388h6" stroke="#ff006a"/><path d="M1402 394h6" stroke="#007fff"/><path d="M1408 394h6" stroke="#007dff"/><path d="M1414 394h6" stroke="#007aff"/><path d="M1420 394h6" stroke="#0a77ff"/><path d="M1426 394h6" stroke="#1674ff"/><path d="M1432 394h6" stroke="#2271ff"/><path d="M1438 394h6" stroke="#2e6eff"/><path d="M1444 394h6" stroke="#396bff"/><path d="M1450 394h6" stroke="#4568ff"/><path d="M1456 394h6" stroke="#5265ff"/><path d="M1462 394h6" stroke="#5e62ff"/><path d="M1468 394h6" stroke="#6a5fff"/><path d="M1474 394h6" stroke="#775cff"/><path d="M1480 394h6" stroke="#8359ff"/><path d="M1486 394h6" stroke="#9056ff"/><path d="M1492 394h6" stroke="#9c53ff"/><path d="M1498 394h6" stroke="#a950ff"/><path d="M1504 394h6" stroke="#b64cff"/><path d="M1510 394h6" stroke="#c349ff"/><path d="M1516 394h6" stroke="#d146ff"/><path d="M1522 394h6" stroke="#de43ff"/><path d="M1528 394h6" stroke="#eb3fff"/><path d="M1534 394h6" stroke="#f93cff"/><path d="M1540 394h6" stroke="#ff37f8"/><path d="M1546 394h6" stroke="#ff31ec"/><path d="M1552 394h6" stroke="#ff2ce0"/><path d="M1558 394h6" stroke="#ff27d6"/><path d="M1564 394h6" stroke="#f2c"/><path d="M1570 394h6" stroke="#ff1ec4"/><path d="M1576 394h6" stroke="#ff1abc"/><path d="M1582 394h6" stroke="#ff17b4"/><path d="M1588 394h6" stroke="#ff13ad"/><path d="M1594 394h6" stroke="#ff10a7"/><path d="M1600 394h6" stroke="#ff0da0"/><path d="M1606 394h6" stroke="#ff0b9b"/><path d="M1612 394h6" stroke="#ff0895"/><path d="M1618 394h6" stroke="#ff0690"/><path d="M1624 394h6" stroke="#ff038b"/><path d="M1630 394h6" stroke="#ff0187"/><path d="M1636 394h6" stroke="#ff0083"/><path d="M1642 394h6" stroke="#ff007f"/><path d="M1648 394h6" stroke="#ff007b"/><path d="M1654 394h6" stroke="#f07"/><path d="M1660 394h6" stroke="#ff0074"/><path d="M1402 400h6" stroke="#07f"/><path d="M1408 400h6" stroke="#0074ff"/><path d="M1414 400h6" stroke="#0072ff"/><path d="M1420 400h6" stroke="#086fff"/><path d="M1426 400h6" stroke="#136cff"/><path d="M1432 400h6" stroke="#1e69ff"/><path d="M1438 400h6" stroke="#2a67ff"/><path d="M1444 400h6" stroke="#3564ff"/><path d="M1450 400h6" stroke="#4161ff"/><path d="M1456 400h6" stroke="#4c5eff"/><path d="M1462 400h6" stroke="#585bff"/><path d="M1468 400h6" stroke="#6458ff"/><path d="M1474 400h6" stroke="#7055ff"/><path d="M1480 400h6" stroke="#7c52ff"/><path d="M1486 400h6" stroke="#884fff"/><path d="M1492 400h6" stroke="#944cff"/><path d="M1498 400h6" stroke="#a049ff"/><path d="M1504 400h6" stroke="#ad46ff"/><path d="M1510 400h6" stroke="#b943ff"/><path d="M1516 400h6" stroke="#c640ff"/><path d="M1522 400h6" stroke="#d23cff"/><path d="M1528 400h6" stroke="#df39ff"/><path d="M1534 400h6" stroke="#ec36ff"/><path d="M1540 400h6" stroke="#f933ff"/><path d="M1546 400h6" stroke="#ff2ef8"/><path d="M1552 400h6" stroke="#ff29ec"/><path d="M1558 400h6" stroke="#ff24e1"/><path d="M1564 400h6" stroke="#ff20d7"/><path d="M1570 400h6" stroke="#ff1cce"/><path d="M1576 400h6" stroke="#ff18c6"/><path d="M1582 400h6" stroke="#ff14be"/><path d="M1588 400h6" stroke="#ff11b6"/><path d="M1594 400h6" stroke="#ff0eaf"/><path d="M1600 400h6" stroke="#ff0ba9"/><path d="M1606 400h6" stroke="#ff08a3"/><path d="M1612 400h6" stroke="#ff069d"/><path d="M1618 400h6" stroke="#ff0498"/><path d="M1624 400h6" stroke="#ff0193"/><path d="M1630 400h6" stroke="#ff008e"/><path d="M1636 400h6" stroke="#ff008a"/><path d="M1642 400h6" stroke="#ff0086"/><path d="M1648 400h6" stroke="#ff0081"/><path d="M1654 400h6" stroke="#ff007e"/><path d="M1402 406h6" stroke="#0070ff"/><path d="M1408 406h6" stroke="#006dff"/><path d="M1414 406h6" stroke="#006aff"/><path d="M1420 406h6" stroke="#0668ff"/><path d="M1426 406h6" stroke="#1165ff"/><path d="M1432 406h6" stroke="#1c62ff"/><path d="M1438 406h6" stroke="#265fff"/><path d="M1444 406h6" stroke="#315dff"/><path d="M1450 406h6" stroke="#3c5aff"/><path d="M1456 406h6" stroke="#4857ff"/><path d="M1462 406h6" stroke="#5354ff"/><path d="M1468 406h6" stroke="#5e51ff"/><path d="M1474 406h6" stroke="#694eff"/><path d="M1480 406h6" stroke="#754cff"/><path d="M1486 406h6" stroke="#8049ff"/><path d="M1492 406h6" stroke="#8c46ff"/><path d="M1498 406h6" stroke="#9843ff"/><path d="M1504 406h6" stroke="#a440ff"/><path d="M1510 406h6" stroke="#b03dff"/><path d="M1516 406h6" stroke="#bc3aff"/><path d="M1522 406h6" stroke="#c837ff"/><path d="M1528 406h6" stroke="#d434ff"/><path d="M1534 406h6" stroke="#e030ff"/><path d="M1540 406h6" stroke="#ed2dff"/><path d="M1546 406h6" stroke="#f92aff"/><path d="M1552 406h6" stroke="#ff26f9"/><path d="M1558 406h6" stroke="#ff21ed"/><path d="M1564 406h6" stroke="#ff1de2"/><path d="M1570 406h6" stroke="#ff19d9"/><path d="M1576 406h6" stroke="#ff15d0"/><path d="M1582 406h6" stroke="#ff12c7"/><path d="M1588 406h6" stroke="#ff0fc0"/><path d="M1594 406h6" stroke="#ff0cb8"/><path d="M1600 406h6" stroke="#ff09b2"/><path d="M1606 406h6" stroke="#ff06ab"/><path d="M1612 406h6" stroke="#ff04a5"/><path d="M1618 406h6" stroke="#ff01a0"/><path d="M1624 406h6" stroke="#ff009b"/><path d="M1630 406h6" stroke="#ff0096"/><path d="M1636 406h6" stroke="#ff0091"/><path d="M1642 406h6" stroke="#ff008c"/><path d="M1648 406h6" stroke="#f08"/><path d="M1402 412h6" stroke="#0069ff"/><path d="M1408 412h6" stroke="#06f"/><path d="M1414 412h6" stroke="#0063ff"/><path d="M1420 412h6" stroke="#0461ff"/><path d="M1426 412h6" stroke="#0e5eff"/><path d="M1432 412h6" stroke="#195cff"/><path d="M1438 412h6" stroke="#2359ff"/><path d="M1444 412h6" stroke="#2e56ff"/><path d="M1450 412h6" stroke="#3853ff"/><path d="M1456 412h6" stroke="#4351ff"/><path d="M1462 412h6" stroke="#4e4eff"/><path d="M1468 412h6" stroke="#594bff"/><path d="M1474 412h6" stroke="#6448ff"/><path d="M1480 412h6" stroke="#6f46ff"/><path d="M1486 412h6" stroke="#7a43ff"/><path d="M1492 412h6" stroke="#8540ff"/><path d="M1498 412h6" stroke="#903dff"/><path d="M1504 412h6" stroke="#9b3aff"/><path d="M1510 412h6" stroke="#a737ff"/><path d="M1516 412h6" stroke="#b234ff"/><path d="M1522 412h6" stroke="#be31ff"/><path d="M1528 412h6" stroke="#ca2eff"/><path d="M1534 412h6" stroke="#d52bff"/><path d="M1540 412h6" stroke="#e128ff"/><path d="M1546 412h6" stroke="#ed25ff"/><path d="M1552 412h6" stroke="#f922ff"/><path d="M1558 412h6" stroke="#ff1ef9"/><path d="M1564 412h6" stroke="#ff1aee"/><path d="M1570 412h6" stroke="#ff16e3"/><path d="M1576 412h6" stroke="#ff13da"/><path d="M1582 412h6" stroke="#ff0fd1"/><path d="M1588 412h6" stroke="#ff0cc9"/><path d="M1594 412h6" stroke="#ff09c2"/><path d="M1600 412h6" stroke="#ff06ba"/><path d="M1606 412h6" stroke="#ff04b4"/><path d="M1612 412h6" stroke="#ff02ae"/><path d="M1618 412h6" stroke="#ff00a8"/><path d="M1624 412h6" stroke="#ff00a2"/><path d="M1630 412h6" stroke="#ff009d"/><path d="M1636 412h6" stroke="#ff0098"/><path d="M1642 412h6" stroke="#ff0093"/><path d="M1402 418h6" stroke="#0062ff"/><path d="M1408 418h6" stroke="#0060ff"/><path d="M1414 418h6" stroke="#005dff"/><path d="M1420 418h6" stroke="#025bff"/><path d="M1426 418h6" stroke="#0c58ff"/><path d="M1432 418h6" stroke="#1655ff"/><path d="M1438 418h6" stroke="#2053ff"/><path d="M1444 418h6" stroke="#2b50ff"/><path d="M1450 418h6" stroke="#354eff"/><path d="M1456 418h6" stroke="#3f4bff"/><path d="M1462 418h6" stroke="#4948ff"/><path d="M1468 418h6" stroke="#5446ff"/><path d="M1474 418h6" stroke="#5e43ff"/><path d="M1480 418h6" stroke="#6940ff"/><path d="M1486 418h6" stroke="#733dff"/><path d="M1492 418h6" stroke="#7e3bff"/><path d="M1498 418h6" stroke="#8938ff"/><path d="M1504 418h6" stroke="#9435ff"/><path d="M1510 418h6" stroke="#9f32ff"/><path d="M1516 418h6" stroke="#aa2fff"/><path d="M1522 418h6" stroke="#b52dff"/><path d="M1528 418h6" stroke="#c02aff"/><path d="M1534 418h6" stroke="#cb27ff"/><path d="M1540 418h6" stroke="#d724ff"/><path d="M1546 418h6" stroke="#e221ff"/><path d="M1552 418h6" stroke="#ee1eff"/><path d="M1558 418h6" stroke="#f91bff"/><path d="M1564 418h6" stroke="#ff17f9"/><path d="M1570 418h6" stroke="#ff14ee"/><path d="M1576 418h6" stroke="#ff10e4"/><path d="M1582 418h6" stroke="#ff0ddb"/><path d="M1588 418h6" stroke="#ff0ad3"/><path d="M1594 418h6" stroke="#ff07cb"/><path d="M1600 418h6" stroke="#ff04c3"/><path d="M1606 418h6" stroke="#ff02bc"/><path d="M1612 418h6" stroke="#ff00b6"/><path d="M1618 418h6" stroke="#ff00b0"/><path d="M1624 418h6" stroke="#f0a"/><path d="M1630 418h6" stroke="#ff00a4"/><path d="M1636 418h6" stroke="#ff009f"/><path d="M1402 424h6" stroke="#005cff"/><path d="M1408 424h6" stroke="#005aff"/><path d="M1414 424h6" stroke="#0057ff"/><path d="M1420 424h6" stroke="#0155ff"/><path d="M1426 424h6" stroke="#0a52ff"/><path d="M1432 424h6" stroke="#1450ff"/><path d="M1438 424h6" stroke="#1e4dff"/><path d="M1444 424h6" stroke="#274bff"/><path d="M1450 424h6" stroke="#3148ff"/><path d="M1456 424h6" stroke="#3b45ff"/><path d="M1462 424h6" stroke="#4543ff"/><path d="M1468 424h6" stroke="#4f40ff"/><path d="M1474 424h6" stroke="#593eff"/><path d="M1480 424h6" stroke="#633bff"/><path d="M1486 424h6" stroke="#6e38ff"/><path d="M1492 424h6" stroke="#7836ff"/><path d="M1498 424h6" stroke="#8233ff"/><path d="M1504 424h6" stroke="#8d30ff"/><path d="M1510 424h6" stroke="#972eff"/><path d="M1516 424h6" stroke="#a22bff"/><path d="M1522 424h6" stroke="#ad28ff"/><path d="M1528 424h6" stroke="#b725ff"/><path d="M1534 424h6" stroke="#c222ff"/><path d="M1540 424h6" stroke="#cd20ff"/><path d="M1546 424h6" stroke="#d81dff"/><path d="M1552 424h6" stroke="#e31aff"/><path d="M1558 424h6" stroke="#ee17ff"/><path d="M1564 424h6" stroke="#f914ff"/><path d="M1570 424h6" stroke="#ff11f9"/><path d="M1576 424h6" stroke="#ff0def"/><path d="M1582 424h6" stroke="#ff0ae5"/><path d="M1588 424h6" stroke="#ff07dc"/><path d="M1594 424h6" stroke="#ff04d4"/><path d="M1600 424h6" stroke="#ff02cc"/><path d="M1606 424h6" stroke="#ff00c5"/><path d="M1612 424h6" stroke="#ff00be"/><path d="M1618 424h6" stroke="#ff00b8"/><path d="M1624 424h6" stroke="#ff00b2"/><path d="M1630 424h6" stroke="#ff00ac"/><path d="M1408 430h6" stroke="#0054ff"/><path d="M1414 430h6" stroke="#0052ff"/><path d="M1420 430h6" stroke="#004fff"/><path d="M1426 430h6" stroke="#084dff"/><path d="M1432 430h6" stroke="#124aff"/><path d="M1438 430h6" stroke="#1b48ff"/><path d="M1444 430h6" stroke="#2545ff"/><path d="M1450 430h6" stroke="#2e43ff"/><path d="M1456 430h6" stroke="#3840ff"/><path d="M1462 430h6" stroke="#413eff"/><path d="M1468 430h6" stroke="#4b3bff"/><path d="M1474 430h6" stroke="#5539ff"/><path d="M1480 430h6" stroke="#5e36ff"/><path d="M1486 430h6" stroke="#6834ff"/><path d="M1492 430h6" stroke="#7231ff"/><path d="M1498 430h6" stroke="#7c2eff"/><path d="M1504 430h6" stroke="#862cff"/><path d="M1510 430h6" stroke="#9029ff"/><path d="M1516 430h6" stroke="#9b27ff"/><path d="M1522 430h6" stroke="#a524ff"/><path d="M1528 430h6" stroke="#af21ff"/><path d="M1534 430h6" stroke="#ba1eff"/><path d="M1540 430h6" stroke="#c41cff"/><path d="M1546 430h6" stroke="#cf19ff"/><path d="M1552 430h6" stroke="#d916ff"/><path d="M1558 430h6" stroke="#e413ff"/><path d="M1564 430h6" stroke="#ef11ff"/><path d="M1570 430h6" stroke="#fa0eff"/><path d="M1576 430h6" stroke="#ff0bfa"/><path d="M1582 430h6" stroke="#ff07f0"/><path d="M1588 430h6" stroke="#ff05e6"/><path d="M1594 430h6" stroke="#ff02dd"/><path d="M1600 430h6" stroke="#ff00d5"/><path d="M1606 430h6" stroke="#ff00ce"/><path d="M1612 430h6" stroke="#ff00c7"/><path d="M1618 430h6" stroke="#ff00c0"/><path d="M1624 430h6" stroke="#ff00ba"/><path d="M1408 436h6" stroke="#004fff"/><path d="M1414 436h6" stroke="#004cff"/><path d="M1420 436h6" stroke="#004aff"/><path d="M1426 436h6" stroke="#0748ff"/><path d="M1432 436h6" stroke="#1045ff"/><path d="M1438 436h6" stroke="#1943ff"/><path d="M1444 436h6" stroke="#2241ff"/><path d="M1450 436h6" stroke="#2b3eff"/><path d="M1456 436h6" stroke="#343cff"/><path d="M1462 436h6" stroke="#3e39ff"/><path d="M1468 436h6" stroke="#4737ff"/><path d="M1474 436h6" stroke="#5034ff"/><path d="M1480 436h6" stroke="#5a32ff"/><path d="M1486 436h6" stroke="#632fff"/><path d="M1492 436h6" stroke="#6d2dff"/><path d="M1498 436h6" stroke="#772aff"/><path d="M1504 436h6" stroke="#8028ff"/><path d="M1510 436h6" stroke="#8a25ff"/><path d="M1516 436h6" stroke="#9423ff"/><path d="M1522 436h6" stroke="#9e20ff"/><path d="M1528 436h6" stroke="#a81dff"/><path d="M1534 436h6" stroke="#b21bff"/><path d="M1540 436h6" stroke="#bc18ff"/><path d="M1546 436h6" stroke="#c615ff"/><path d="M1552 436h6" stroke="#d013ff"/><path d="M1558 436h6" stroke="#da10ff"/><path d="M1564 436h6" stroke="#e50dff"/><path d="M1570 436h6" stroke="#ef0aff"/><path d="M1576 436h6" stroke="#fa08ff"/><path d="M1582 436h6" stroke="#ff05fa"/><path d="M1588 436h6" stroke="#ff02f0"/><path d="M1594 436h6" stroke="#ff00e7"/><path d="M1600 436h6" stroke="#ff00de"/><path d="M1606 436h6" stroke="#ff00d6"/><path d="M1612 436h6" stroke="#ff00cf"/><path d="M1618 436h6" stroke="#ff00c8"/><path d="M1408 442h6" stroke="#004aff"/><path d="M1414 442h6" stroke="#0048ff"/><path d="M1420 442h6" stroke="#0045ff"/><path d="M1426 442h6" stroke="#0543ff"/><path d="M1432 442h6" stroke="#0e41ff"/><path d="M1438 442h6" stroke="#173eff"/><path d="M1444 442h6" stroke="#1f3cff"/><path d="M1450 442h6" stroke="#283aff"/><path d="M1456 442h6" stroke="#3137ff"/><path d="M1462 442h6" stroke="#3a35ff"/><path d="M1468 442h6" stroke="#4333ff"/><path d="M1474 442h6" stroke="#4c30ff"/><path d="M1480 442h6" stroke="#552eff"/><path d="M1486 442h6" stroke="#5f2bff"/><path d="M1492 442h6" stroke="#6829ff"/><path d="M1498 442h6" stroke="#7126ff"/><path d="M1504 442h6" stroke="#7b24ff"/><path d="M1510 442h6" stroke="#8421ff"/><path d="M1516 442h6" stroke="#8d1fff"/><path d="M1522 442h6" stroke="#971cff"/><path d="M1528 442h6" stroke="#a11aff"/><path d="M1534 442h6" stroke="#aa17ff"/><path d="M1540 442h6" stroke="#b415ff"/><path d="M1546 442h6" stroke="#be12ff"/><path d="M1552 442h6" stroke="#c80fff"/><path d="M1558 442h6" stroke="#d20dff"/><path d="M1564 442h6" stroke="#db0aff"/><path d="M1570 442h6" stroke="#e607ff"/><path d="M1576 442h6" stroke="#f005ff"/><path d="M1582 442h6" stroke="#fa02ff"/><path d="M1588 442h6" stroke="#ff00fa"/><path d="M1594 442h6" stroke="#ff00f1"/><path d="M1600 442h6" stroke="#ff00e8"/><path d="M1606 442h6" stroke="#ff00df"/><path d="M1612 442h6" stroke="#ff00d8"/><path d="M1408 448h6" stroke="#0045ff"/><path d="M1414 448h6" stroke="#0043ff"/><path d="M1420 448h6" stroke="#0041ff"/><path d="M1426 448h6" stroke="#043fff"/><path d="M1432 448h6" stroke="#0c3cff"/><path d="M1438 448h6" stroke="#153aff"/><path d="M1444 448h6" stroke="#1d38ff"/><path d="M1450 448h6" stroke="#2635ff"/><path d="M1456 448h6" stroke="#2e33ff"/><path d="M1462 448h6" stroke="#3731ff"/><path d="M1468 448h6" stroke="#402fff"/><path d="M1474 448h6" stroke="#482cff"/><path d="M1480 448h6" stroke="#512aff"/><path d="M1486 448h6" stroke="#5a27ff"/><path d="M1492 448h6" stroke="#6325ff"/><path d="M1498 448h6" stroke="#6c23ff"/><path d="M1504 448h6" stroke="#7520ff"/><path d="M1510 448h6" stroke="#7e1eff"/><path d="M1516 448h6" stroke="#871bff"/><path d="M1522 448h6" stroke="#9119ff"/><path d="M1528 448h6" stroke="#9a16ff"/><path d="M1534 448h6" stroke="#a314ff"/><path d="M1540 448h6" stroke="#ad11ff"/><path d="M1546 448h6" stroke="#b60fff"/><path d="M1552 448h6" stroke="#c00cff"/><path d="M1558 448h6" stroke="#c90aff"/><path d="M1564 448h6" stroke="#d307ff"/><path d="M1570 448h6" stroke="#dc05ff"/><path d="M1576 448h6" stroke="#e602ff"/><path d="M1582 448h6" stroke="#f000ff"/><path d="M1588 448h6" stroke="#fa00ff"/><path d="M1594 448h6" stroke="#ff00fa"/><path d="M1600 448h6" stroke="#ff00f1"/><path d="M1606 448h6" stroke="#ff00e8"/><path d="M1408 454h6" stroke="#0041ff"/><path d="M1414 454h6" stroke="#003fff"/><path d="M1420 454h6" stroke="#003dff"/><path d="M1426 454h6" stroke="#023aff"/><path d="M1432 454h6" stroke="#0a38ff"/><path d="M1438 454h6" stroke="#1336ff"/><path d="M1444 454h6" stroke="#1b34ff"/><path d="M1450 454h6" stroke="#2332ff"/><path d="M1456 454h6" stroke="#2c2fff"/><path d="M1462 454h6" stroke="#342dff"/><path d="M1468 454h6" stroke="#3c2bff"/><path d="M1474 454h6" stroke="#4528ff"/><path d="M1480 454h6" stroke="#4d26ff"/><path d="M1486 454h6" stroke="#5624ff"/><path d="M1492 454h6" stroke="#5f22ff"/><path d="M1498 454h6" stroke="#671fff"/><path d="M1504 454h6" stroke="#701dff"/><path d="M1510 454h6" stroke="#791aff"/><path d="M1516 454h6" stroke="#8218ff"/><path d="M1522 454h6" stroke="#8b16ff"/><path d="M1528 454h6" stroke="#9413ff"/><path d="M1534 454h6" stroke="#9d11ff"/><path d="M1540 454h6" stroke="#a60eff"/><path d="M1546 454h6" stroke="#af0cff"/><path d="M1552 454h6" stroke="#b80aff"/><path d="M1558 454h6" stroke="#c107ff"/><path d="M1564 454h6" stroke="#cb05ff"/><path d="M1570 454h6" stroke="#d402ff"/><path d="M1576 454h6" stroke="#d0f"/><path d="M1582 454h6" stroke="#e700ff"/><path d="M1588 454h6" stroke="#f000ff"/><path d="M1594 454h6" stroke="#fa00ff"/><path d="M1600 454h6" stroke="#ff00fa"/><path d="M1408 460h6" stroke="#003dff"/><path d="M1414 460h6" stroke="#003bff"/><path d="M1420 460h6" stroke="#0039ff"/><path d="M1426 460h6" stroke="#0136ff"/><path d="M1432 460h6" stroke="#0934ff"/><path d="M1438 460h6" stroke="#1132ff"/><path d="M1444 460h6" stroke="#1930ff"/><path d="M1450 460h6" stroke="#212eff"/><path d="M1456 460h6" stroke="#292cff"/><path d="M1462 460h6" stroke="#3129ff"/><path d="M1468 460h6" stroke="#3927ff"/><path d="M1474 460h6" stroke="#4225ff"/><path d="M1480 460h6" stroke="#4a23ff"/><path d="M1486 460h6" stroke="#5220ff"/><path d="M1492 460h6" stroke="#5b1eff"/><path d="M1498 460h6" stroke="#631cff"/><path d="M1504 460h6" stroke="#6c1aff"/><path d="M1510 460h6" stroke="#7417ff"/><path d="M1516 460h6" stroke="#7d15ff"/><path d="M1522 460h6" stroke="#8513ff"/><path d="M1528 460h6" stroke="#8e10ff"/><path d="M1534 460h6" stroke="#970eff"/><path d="M1540 460h6" stroke="#9f0cff"/><path d="M1546 460h6" stroke="#a809ff"/><path d="M1552 460h6" stroke="#b107ff"/><path d="M1558 460h6" stroke="#ba04ff"/><path d="M1564 460h6" stroke="#c302ff"/><path d="M1570 460h6" stroke="#c0f"/><path d="M1576 460h6" stroke="#d500ff"/><path d="M1582 460h6" stroke="#de00ff"/><path d="M1588 460h6" stroke="#e800ff"/><path d="M1594 460h6" stroke="#f100ff"/><path d="M1408 466h6" stroke="#0039ff"/><path d="M1414 466h6" stroke="#0037ff"/><path d="M1420 466h6" stroke="#0035ff"/><path d="M1426 466h6" stroke="#03f"/><path d="M1432 466h6" stroke="#0731ff"/><path d="M1438 466h6" stroke="#0f2fff"/><path d="M1444 466h6" stroke="#172cff"/><path d="M1450 466h6" stroke="#1f2aff"/><path d="M1456 466h6" stroke="#2728ff"/><path d="M1462 466h6" stroke="#2e26ff"/><path d="M1468 466h6" stroke="#3624ff"/><path d="M1474 466h6" stroke="#3e22ff"/><path d="M1480 466h6" stroke="#461fff"/><path d="M1486 466h6" stroke="#4f1dff"/><path d="M1492 466h6" stroke="#571bff"/><path d="M1498 466h6" stroke="#5f19ff"/><path d="M1504 466h6" stroke="#6717ff"/><path d="M1510 466h6" stroke="#6f14ff"/><path d="M1516 466h6" stroke="#7812ff"/><path d="M1522 466h6" stroke="#8010ff"/><path d="M1528 466h6" stroke="#880eff"/><path d="M1534 466h6" stroke="#910bff"/><path d="M1540 466h6" stroke="#9909ff"/><path d="M1546 466h6" stroke="#a207ff"/><path d="M1552 466h6" stroke="#ab04ff"/><path d="M1558 466h6" stroke="#b302ff"/><path d="M1564 466h6" stroke="#bc00ff"/><path d="M1570 466h6" stroke="#c500ff"/><path d="M1576 466h6" stroke="#cd00ff"/><path d="M1582 466h6" stroke="#d600ff"/><path d="M1588 466h6" stroke="#df00ff"/><path d="M1414 472h6" stroke="#03f"/><path d="M1420 472h6" stroke="#0031ff"/><path d="M1426 472h6" stroke="#002fff"/><path d="M1432 472h6" stroke="#062dff"/><path d="M1438 472h6" stroke="#0d2bff"/><path d="M1444 472h6" stroke="#1529ff"/><path d="M1450 472h6" stroke="#1d27ff"/><path d="M1456 472h6" stroke="#2425ff"/><path d="M1462 472h6" stroke="#2c23ff"/><path d="M1468 472h6" stroke="#3421ff"/><path d="M1474 472h6" stroke="#3b1fff"/><path d="M1480 472h6" stroke="#431cff"/><path d="M1486 472h6" stroke="#4b1aff"/><path d="M1492 472h6" stroke="#5318ff"/><path d="M1498 472h6" stroke="#5b16ff"/><path d="M1504 472h6" stroke="#6314ff"/><path d="M1510 472h6" stroke="#6b12ff"/><path d="M1516 472h6" stroke="#730fff"/><path d="M1522 472h6" stroke="#7b0dff"/><path d="M1528 472h6" stroke="#830bff"/><path d="M1534 472h6" stroke="#8b09ff"/><path d="M1540 472h6" stroke="#9407ff"/><path d="M1546 472h6" stroke="#9c04ff"/><path d="M1552 472h6" stroke="#a402ff"/><path d="M1558 472h6" stroke="#ad00ff"/><path d="M1564 472h6" stroke="#b500ff"/><path d="M1570 472h6" stroke="#be00ff"/><path d="M1576 472h6" stroke="#c600ff"/><path d="M1582 472h6" stroke="#cf00ff"/><path d="M1414 478h6" stroke="#0030ff"/><path d="M1420 478h6" stroke="#002eff"/><path d="M1426 478h6" stroke="#002cff"/><path d="M1432 478h6" stroke="#052aff"/><path d="M1438 478h6" stroke="#0c28ff"/><path d="M1444 478h6" stroke="#1326ff"/><path d="M1450 478h6" stroke="#1b24ff"/><path d="M1456 478h6" stroke="#22f"/><path d="M1462 478h6" stroke="#2a20ff"/><path d="M1468 478h6" stroke="#311eff"/><path d="M1474 478h6" stroke="#391cff"/><path d="M1480 478h6" stroke="#401aff"/><path d="M1486 478h6" stroke="#4817ff"/><path d="M1492 478h6" stroke="#5015ff"/><path d="M1498 478h6" stroke="#5713ff"/><path d="M1504 478h6" stroke="#5f11ff"/><path d="M1510 478h6" stroke="#670fff"/><path d="M1516 478h6" stroke="#6f0dff"/><path d="M1522 478h6" stroke="#760bff"/><path d="M1528 478h6" stroke="#7e09ff"/><path d="M1534 478h6" stroke="#8606ff"/><path d="M1540 478h6" stroke="#8e04ff"/><path d="M1546 478h6" stroke="#9602ff"/><path d="M1552 478h6" stroke="#9e00ff"/><path d="M1558 478h6" stroke="#a700ff"/><path d="M1564 478h6" stroke="#af00ff"/><path d="M1570 478h6" stroke="#b700ff"/><path d="M1576 478h6" stroke="#bf00ff"/><path d="M1414 484h6" stroke="#002dff"/><path d="M1420 484h6" stroke="#002bff"/><path d="M1426 484h6" stroke="#0029ff"/><path d="M1432 484h6" stroke="#0327ff"/><path d="M1438 484h6" stroke="#0a25ff"/><path d="M1444 484h6" stroke="#1223ff"/><path d="M1450 484h6" stroke="#1921ff"/><path d="M1456 484h6" stroke="#201fff"/><path d="M1462 484h6" stroke="#271dff"/><path d="M1468 484h6" stroke="#2f1bff"/><path d="M1474 484h6" stroke="#3619ff"/><path d="M1480 484h6" stroke="#3d17ff"/><path d="M1486 484h6" stroke="#4515ff"/><path d="M1492 484h6" stroke="#4c13ff"/><path d="M1498 484h6" stroke="#5411ff"/><path d="M1504 484h6" stroke="#5b0fff"/><path d="M1510 484h6" stroke="#630dff"/><path d="M1516 484h6" stroke="#6a0aff"/><path d="M1522 484h6" stroke="#7208ff"/><path d="M1528 484h6" stroke="#7a06ff"/><path d="M1534 484h6" stroke="#8204ff"/><path d="M1540 484h6" stroke="#8902ff"/><path d="M1546 484h6" stroke="#9100ff"/><path d="M1552 484h6" stroke="#90f"/><path d="M1558 484h6" stroke="#a100ff"/><path d="M1564 484h6" stroke="#a900ff"/><path d="M1570 484h6" stroke="#b100ff"/><path d="M1414 490h6" stroke="#002aff"/><path d="M1420 490h6" stroke="#0028ff"/><path d="M1426 490h6" stroke="#0026ff"/><path d="M1432 490h6" stroke="#0224ff"/><path d="M1438 490h6" stroke="#0922ff"/><path d="M1444 490h6" stroke="#1020ff"/><path d="M1450 490h6" stroke="#171eff"/><path d="M1456 490h6" stroke="#1e1cff"/><path d="M1462 490h6" stroke="#251aff"/><path d="M1468 490h6" stroke="#2c18ff"/><path d="M1474 490h6" stroke="#3316ff"/><path d="M1480 490h6" stroke="#3b14ff"/><path d="M1486 490h6" stroke="#4212ff"/><path d="M1492 490h6" stroke="#4910ff"/><path d="M1498 490h6" stroke="#500eff"/><path d="M1504 490h6" stroke="#580cff"/><path d="M1510 490h6" stroke="#5f0aff"/><path d="M1516 490h6" stroke="#6608ff"/><path d="M1522 490h6" stroke="#6e06ff"/><path d="M1528 490h6" stroke="#7504ff"/><path d="M1534 490h6" stroke="#7d02ff"/><path d="M1540 490h6" stroke="#8400ff"/><path d="M1546 490h6" stroke="#8c00ff"/><path d="M1552 490h6" stroke="#9400ff"/><path d="M1558 490h6" stroke="#9b00ff"/><path d="M1564 490h6" stroke="#a300ff"/><path d="M1414 496h6" stroke="#0027ff"/><path d="M1420 496h6" stroke="#0025ff"/><path d="M1426 496h6" stroke="#0023ff"/><path d="M1432 496h6" stroke="#0121ff"/><path d="M1438 496h6" stroke="#081fff"/><path d="M1444 496h6" stroke="#0e1dff"/><path d="M1450 496h6" stroke="#151bff"/><path d="M1456 496h6" stroke="#1c19ff"/><path d="M1462 496h6" stroke="#2318ff"/><path d="M1468 496h6" stroke="#2a16ff"/><path d="M1474 496h6" stroke="#3114ff"/><path d="M1480 496h6" stroke="#3812ff"/><path d="M1486 496h6" stroke="#3f10ff"/><path d="M1492 496h6" stroke="#460eff"/><path d="M1498 496h6" stroke="#4d0cff"/><path d="M1504 496h6" stroke="#540aff"/><path d="M1510 496h6" stroke="#5c08ff"/><path d="M1516 496h6" stroke="#6306ff"/><path d="M1522 496h6" stroke="#6a04ff"/><path d="M1528 496h6" stroke="#7102ff"/><path d="M1534 496h6" stroke="#7900ff"/><path d="M1540 496h6" stroke="#8000ff"/><path d="M1546 496h6" stroke="#8700ff"/><path d="M1552 496h6" stroke="#8f00ff"/><path d="M1558 496h6" stroke="#9600ff"/><path d="M1414 502h6" stroke="#0024ff"/><path d="M1420 502h6" stroke="#02f"/><path d="M1426 502h6" stroke="#0020ff"/><path d="M1432 502h6" stroke="#001eff"/><path d="M1438 502h6" stroke="#061dff"/><path d="M1444 502h6" stroke="#0d1bff"/><path d="M1450 502h6" stroke="#1419ff"/><path d="M1456 502h6" stroke="#1a17ff"/><path d="M1462 502h6" stroke="#2115ff"/><path d="M1468 502h6" stroke="#2813ff"/><path d="M1474 502h6" stroke="#2f11ff"/><path d="M1480 502h6" stroke="#360fff"/><path d="M1486 502h6" stroke="#3c0eff"/><path d="M1492 502h6" stroke="#430cff"/><path d="M1498 502h6" stroke="#4a0aff"/><path d="M1504 502h6" stroke="#5108ff"/><path d="M1510 502h6" stroke="#5806ff"/><path d="M1516 502h6" stroke="#5f04ff"/><path d="M1522 502h6" stroke="#6602ff"/><path d="M1528 502h6" stroke="#6d00ff"/><path d="M1534 502h6" stroke="#7400ff"/><path d="M1540 502h6" stroke="#7c00ff"/><path d="M1546 502h6" stroke="#8300ff"/><path d="M1552 502h6" stroke="#8a00ff"/><path d="M1420 508h6" stroke="#001fff"/><path d="M1426 508h6" stroke="#001eff"/><path d="M1432 508h6" stroke="#001cff"/><path d="M1438 508h6" stroke="#051aff"/><path d="M1444 508h6" stroke="#0c18ff"/><path d="M1450 508h6" stroke="#1216ff"/><path d="M1456 508h6" stroke="#1915ff"/><path d="M1462 508h6" stroke="#1f13ff"/><path d="M1468 508h6" stroke="#2611ff"/><path d="M1474 508h6" stroke="#2d0fff"/><path d="M1480 508h6" stroke="#330dff"/><path d="M1486 508h6" stroke="#3a0bff"/><path d="M1492 508h6" stroke="#4109ff"/><path d="M1498 508h6" stroke="#4708ff"/><path d="M1504 508h6" stroke="#4e06ff"/><path d="M1510 508h6" stroke="#5504ff"/><path d="M1516 508h6" stroke="#5c02ff"/><path d="M1522 508h6" stroke="#6300ff"/><path d="M1528 508h6" stroke="#6a00ff"/><path d="M1534 508h6" stroke="#7100ff"/><path d="M1540 508h6" stroke="#70f"/><path d="M1546 508h6" stroke="#7e00ff"/><path d="M1420 514h6" stroke="#001dff"/><path d="M1426 514h6" stroke="#001bff"/><path d="M1432 514h6" stroke="#0019ff"/><path d="M1438 514h6" stroke="#0418ff"/><path d="M1444 514h6" stroke="#0a16ff"/><path d="M1450 514h6" stroke="#1114ff"/><path d="M1456 514h6" stroke="#1712ff"/><path d="M1462 514h6" stroke="#1e11ff"/><path d="M1468 514h6" stroke="#240fff"/><path d="M1474 514h6" stroke="#2a0dff"/><path d="M1480 514h6" stroke="#310bff"/><path d="M1486 514h6" stroke="#3709ff"/><path d="M1492 514h6" stroke="#3e07ff"/><path d="M1498 514h6" stroke="#4506ff"/><path d="M1504 514h6" stroke="#4b04ff"/><path d="M1510 514h6" stroke="#5202ff"/><path d="M1516 514h6" stroke="#5900ff"/><path d="M1522 514h6" stroke="#5f00ff"/><path d="M1528 514h6" stroke="#60f"/><path d="M1534 514h6" stroke="#6d00ff"/><path d="M1540 514h6" stroke="#7400ff"/><path d="M1420 520h6" stroke="#001bff"/><path d="M1426 520h6" stroke="#0019ff"/><path d="M1432 520h6" stroke="#0017ff"/><path d="M1438 520h6" stroke="#0315ff"/><path d="M1444 520h6" stroke="#0914ff"/><path d="M1450 520h6" stroke="#0f12ff"/><path d="M1456 520h6" stroke="#1610ff"/><path d="M1462 520h6" stroke="#1c0eff"/><path d="M1468 520h6" stroke="#220dff"/><path d="M1474 520h6" stroke="#280bff"/><path d="M1480 520h6" stroke="#2f09ff"/><path d="M1486 520h6" stroke="#3507ff"/><path d="M1492 520h6" stroke="#3c05ff"/><path d="M1498 520h6" stroke="#4204ff"/><path d="M1504 520h6" stroke="#4802ff"/><path d="M1510 520h6" stroke="#4f00ff"/><path d="M1516 520h6" stroke="#50f"/><path d="M1522 520h6" stroke="#5c00ff"/><path d="M1528 520h6" stroke="#6300ff"/><path d="M1534 520h6" stroke="#6900ff"/><path d="M1420 526h6" stroke="#0018ff"/><path d="M1426 526h6" stroke="#0017ff"/><path d="M1432 526h6" stroke="#0015ff"/><path d="M1438 526h6" stroke="#0213ff"/><path d="M1444 526h6" stroke="#0812ff"/><path d="M1450 526h6" stroke="#0e10ff"/><path d="M1456 526h6" stroke="#140eff"/><path d="M1462 526h6" stroke="#1a0cff"/><path d="M1468 526h6" stroke="#200bff"/><path d="M1474 526h6" stroke="#2709ff"/><path d="M1480 526h6" stroke="#2d07ff"/><path d="M1486 526h6" stroke="#3305ff"/><path d="M1492 526h6" stroke="#3904ff"/><path d="M1498 526h6" stroke="#4002ff"/><path d="M1504 526h6" stroke="#4600ff"/><path d="M1510 526h6" stroke="#4c00ff"/><path d="M1516 526h6" stroke="#5300ff"/><path d="M1522 526h6" stroke="#5900ff"/><path d="M1528 526h6" stroke="#5f00ff"/><path d="M1420 532h6" stroke="#0016ff"/><path d="M1426 532h6" stroke="#0014ff"/><path d="M1432 532h6" stroke="#0013ff"/><path d="M1438 532h6" stroke="#0111ff"/><path d="M1444 532h6" stroke="#070fff"/><path d="M1450 532h6" stroke="#0d0eff"/><path d="M1456 532h6" stroke="#130cff"/><path d="M1462 532h6" stroke="#190aff"/><path d="M1468 532h6" stroke="#1f09ff"/><path d="M1474 532h6" stroke="#2507ff"/><path d="M1480 532h6" stroke="#2b05ff"/><path d="M1486 532h6" stroke="#3104ff"/><path d="M1492 532h6" stroke="#3702ff"/><path d="M1498 532h6" stroke="#3d00ff"/><path d="M1504 532h6" stroke="#4300ff"/><path d="M1510 532h6" stroke="#4a00ff"/><path d="M1516 532h6" stroke="#5000ff"/><path d="M1522 532h6" stroke="#5600ff"/><path d="M1420 538h6" stroke="#0014ff"/><path d="M1426 538h6" stroke="#0012ff"/><path d="M1432 538h6" stroke="#01f"/><path d="M1438 538h6" stroke="#000fff"/><path d="M1444 538h6" stroke="#060dff"/><path d="M1450 538h6" stroke="#0c0cff"/><path d="M1456 538h6" stroke="#110aff"/><path d="M1462 538h6" stroke="#1709ff"/><path d="M1468 538h6" stroke="#1d07ff"/><path d="M1474 538h6" stroke="#2305ff"/><path d="M1480 538h6" stroke="#2904ff"/><path d="M1486 538h6" stroke="#2f02ff"/><path d="M1492 538h6" stroke="#3500ff"/><path d="M1498 538h6" stroke="#3b00ff"/><path d="M1504 538h6" stroke="#4100ff"/><path d="M1510 538h6" stroke="#4700ff"/><path d="M1516 538h6" stroke="#4d00ff"/><path d="M1426 544h6" stroke="#0010ff"/><path d="M1432 544h6" stroke="#000fff"/><path d="M1438 544h6" stroke="#000dff"/><path d="M1444 544h6" stroke="#050cff"/><path d="M1450 544h6" stroke="#0a0aff"/><path d="M1456 544h6" stroke="#1008ff"/><path d="M1462 544h6" stroke="#1607ff"/><path d="M1468 544h6" stroke="#1c05ff"/><path d="M1474 544h6" stroke="#2103ff"/><path d="M1480 544h6" stroke="#2702ff"/><path d="M1486 544h6" stroke="#2d00ff"/><path d="M1492 544h6" stroke="#30f"/><path d="M1498 544h6" stroke="#3900ff"/><path d="M1504 544h6" stroke="#3f00ff"/><path d="M1510 544h6" stroke="#4500ff"/><path d="M1426 550h6" stroke="#000fff"/><path d="M1432 550h6" stroke="#000dff"/><path d="M1438 550h6" stroke="#000bff"/><path d="M1444 550h6" stroke="#040aff"/><path d="M1450 550h6" stroke="#0908ff"/><path d="M1456 550h6" stroke="#0f07ff"/><path d="M1462 550h6" stroke="#1405ff"/><path d="M1468 550h6" stroke="#1a03ff"/><path d="M1474 550h6" stroke="#2002ff"/><path d="M1480 550h6" stroke="#2500ff"/><path d="M1486 550h6" stroke="#2b00ff"/><path d="M1492 550h6" stroke="#3100ff"/><path d="M1498 550h6" stroke="#3700ff"/><path d="M1504 550h6" stroke="#3c00ff"/><path d="M1426 556h6" stroke="#000dff"/><path d="M1432 556h6" stroke="#000bff"/><path d="M1438 556h6" stroke="#000aff"/><path d="M1444 556h6" stroke="#0308ff"/><path d="M1450 556h6" stroke="#0806ff"/><path d="M1456 556h6" stroke="#0e05ff"/><path d="M1462 556h6" stroke="#1303ff"/><path d="M1468 556h6" stroke="#1902ff"/><path d="M1474 556h6" stroke="#1e00ff"/><path d="M1480 556h6" stroke="#2400ff"/><path d="M1486 556h6" stroke="#2900ff"/><path d="M1492 556h6" stroke="#2f00ff"/><path d="M1498 556h6" stroke="#3500ff"/><path d="M1426 562h6" stroke="#000bff"/><path d="M1432 562h6" stroke="#0009ff"/><path d="M1438 562h6" stroke="#0008ff"/><path d="M1444 562h6" stroke="#0206ff"/><path d="M1450 562h6" stroke="#0705ff"/><path d="M1456 562h6" stroke="#0d03ff"/><path d="M1462 562h6" stroke="#1202ff"/><path d="M1468 562h6" stroke="#1700ff"/><path d="M1474 562h6" stroke="#1d00ff"/><path d="M1480 562h6" stroke="#20f"/><path d="M1486 562h6" stroke="#2800ff"/><path d="M1492 562h6" stroke="#2d00ff"/><path d="M1426 568h6" stroke="#0009ff"/><path d="M1432 568h6" stroke="#0008ff"/><path d="M1438 568h6" stroke="#0006ff"/><path d="M1444 568h6" stroke="#0105ff"/><path d="M1450 568h6" stroke="#0603ff"/><path d="M1456 568h6" stroke="#0b02ff"/><path d="M1462 568h6" stroke="#10f"/><path d="M1468 568h6" stroke="#1600ff"/><path d="M1474 568h6" stroke="#1b00ff"/><path d="M1480 568h6" stroke="#2100ff"/><path d="M1486 568h6" stroke="#2600ff"/><path d="M1426 574h6" stroke="#0008ff"/><path d="M1432 574h6" stroke="#0006ff"/><path d="M1438 574h6" stroke="#0005ff"/><path d="M1444 574h6" stroke="#0003ff"/><path d="M1450 574h6" stroke="#0502ff"/><path d="M1456 574h6" stroke="#0a00ff"/><path d="M1462 574h6" stroke="#1000ff"/><path d="M1468 574h6" stroke="#1500ff"/><path d="M1474 574h6" stroke="#1a00ff"/><path d="M1480 574h6" stroke="#1f00ff"/><path d="M1486 574h6" stroke="#2500ff"/><path d="M1432 580h6" stroke="#0005ff"/><path d="M1438 580h6" stroke="#0003ff"/><path d="M1444 580h6" stroke="#0002ff"/><path d="M1450 580h6" stroke="#0400ff"/><path d="M1456 580h6" stroke="#0900ff"/><path d="M1462 580h6" stroke="#0e00ff"/><path d="M1468 580h6" stroke="#1400ff"/><path d="M1474 580h6" stroke="#1900ff"/><path d="M1480 580h6" stroke="#1e00ff"/><path d="M1432 586h6" stroke="#0003ff"/><path d="M1438 586h6" stroke="#0002ff"/><path d="M1444 586h6" stroke="#00f"/><path d="M1450 586h6" stroke="#0300ff"/><path d="M1456 586h6" stroke="#0800ff"/><path d="M1462 586h6" stroke="#0d00ff"/><path d="M1468 586h6" stroke="#1200ff"/><path d="M1474 586h6" stroke="#1700ff"/><path d="M1432 592h6" stroke="#0002ff"/><path d="M1438 592h12" stroke="#00f"/><path d="M1450 592h6" stroke="#0300ff"/><path d="M1456 592h6" stroke="#0700ff"/><path d="M1462 592h6" stroke="#0c00ff"/><path d="M1468 592h6" stroke="#10f"/><path d="M1432 598h18" stroke="#00f"/><path d="M1450 598h6" stroke="#0200ff"/><path d="M1456 598h6" stroke="#0700ff"/><path d="M1462 598h6" stroke="#0b00ff"/></g></g><rect x="1258.70" y="217.80" width="649.90" height="500.00" fill="none" stroke="#a8a8a8" stroke-width="1.5"/><rect x="1258.40" y="717.8" width="1.4" height="6" fill="#b0b0b0"/><rect x="1252.7" y="717.05" width="6" height="1.4" fill="#b0b0b0"/><rect x="1312.45" y="717.8" width="1.4" height="6" fill="#b0b0b0"/><rect x="1252.7" y="675.55" width="6" height="1.4" fill="#b0b0b0"/><rect x="1366.50" y="717.8" width="1.4" height="6" fill="#b0b0b0"/><rect x="1252.7" y="634.05" width="6" height="1.4" fill="#b0b0b0"/><rect x="1420.55" y="717.8" width="1.4" height="6" fill="#b0b0b0"/><rect x="1252.7" y="592.55" width="6" height="1.4" fill="#b0b0b0"/><rect x="1474.60" y="717.8" width="1.4" height="6" fill="#b0b0b0"/><rect x="1252.7" y="551.05" width="6" height="1.4" fill="#b0b0b0"/><rect x="1528.65" y="717.8" width="1.4" height="6" fill="#b0b0b0"/><rect x="1252.7" y="509.55" width="6" height="1.4" fill="#b0b0b0"/><rect x="1582.70" y="717.8" width="1.4" height="6" fill="#b0b0b0"/><rect x="1252.7" y="468.05" width="6" height="1.4" fill="#b0b0b0"/><rect x="1636.75" y="717.8" width="1.4" height="6" fill="#b0b0b0"/><rect x="1252.7" y="426.55" width="6" height="1.4" fill="#b0b0b0"/><rect x="1690.80" y="717.8" width="1.4" height="6" fill="#b0b0b0"/><rect x="1252.7" y="385.05" width="6" height="1.4" fill="#b0b0b0"/><rect x="1744.85" y="717.8" width="1.4" height="6" fill="#b0b0b0"/><rect x="1252.7" y="343.55" width="6" height="1.4" fill="#b0b0b0"/><rect x="1798.90" y="717.8" width="1.4" height="6" fill="#b0b0b0"/><rect x="1252.7" y="302.05" width="6" height="1.4" fill="#b0b0b0"/><rect x="1852.95" y="717.8" width="1.4" height="6" fill="#b0b0b0"/><rect x="1252.7" y="260.55" width="6" height="1.4" fill="#b0b0b0"/><rect x="1386.8" y="241.7" width="13.4" height="13.4" fill="none" stroke="#fff" stroke-opacity="0.92" stroke-width="1.7"/><rect x="1411.7" y="266.4" width="13.4" height="13.4" fill="none" stroke="#fff" stroke-opacity="0.92" stroke-width="1.7"/><rect x="1451.7" y="257.9" width="13.4" height="13.4" fill="none" stroke="#fff" stroke-opacity="0.92" stroke-width="1.7"/><rect x="1472.7" y="249.6" width="13.4" height="13.4" fill="none" stroke="#fff" stroke-opacity="0.92" stroke-width="1.7"/><rect x="1499.9" y="253.9" width="13.4" height="13.4" fill="none" stroke="#fff" stroke-opacity="0.92" stroke-width="1.7"/><rect x="1532.0" y="260.8" width="13.4" height="13.4" fill="none" stroke="#fff" stroke-opacity="0.92" stroke-width="1.7"/><rect x="1576.2" y="264.8" width="13.4" height="13.4" fill="none" stroke="#fff" stroke-opacity="0.92" stroke-width="1.7"/><rect x="1449.0" y="280.2" width="13.4" height="13.4" fill="none" stroke="#fff" stroke-opacity="0.92" stroke-width="1.7"/><rect x="1514.9" y="293.9" width="13.4" height="13.4" fill="none" stroke="#fff" stroke-opacity="0.92" stroke-width="1.7"/><rect x="1504.2" y="300.8" width="13.4" height="13.4" fill="none" stroke="#fff" stroke-opacity="0.92" stroke-width="1.7"/><rect x="1595.6" y="308.1" width="13.4" height="13.4" fill="none" stroke="#fff" stroke-opacity="0.92" stroke-width="1.7"/><rect x="1418.4" y="311.8" width="13.4" height="13.4" fill="none" stroke="#fff" stroke-opacity="0.92" stroke-width="1.7"/><rect x="1401.8" y="331.7" width="13.4" height="13.4" fill="none" stroke="#fff" stroke-opacity="0.92" stroke-width="1.7"/><rect x="1562.4" y="354.8" width="13.4" height="13.4" fill="none" stroke="#fff" stroke-opacity="0.92" stroke-width="1.7"/><rect x="1407.3" y="362.9" width="13.4" height="13.4" fill="none" stroke="#fff" stroke-opacity="0.92" stroke-width="1.7"/><rect x="1442.4" y="360.4" width="13.4" height="13.4" fill="none" stroke="#fff" stroke-opacity="0.92" stroke-width="1.7"/><rect x="1462.7" y="366.1" width="13.4" height="13.4" fill="none" stroke="#fff" stroke-opacity="0.92" stroke-width="1.7"/><rect x="1498.7" y="383.9" width="13.4" height="13.4" fill="none" stroke="#fff" stroke-opacity="0.92" stroke-width="1.7"/><rect x="1444.7" y="413.9" width="13.4" height="13.4" fill="none" stroke="#fff" stroke-opacity="0.92" stroke-width="1.7"/><rect x="1581.8" y="435.2" width="13.4" height="13.4" fill="none" stroke="#fff" stroke-opacity="0.92" stroke-width="1.7"/><rect x="1444.7" y="465.4" width="13.4" height="13.4" fill="none" stroke="#fff" stroke-opacity="0.92" stroke-width="1.7"/><rect x="1739.5" y="274.6" width="13.4" height="13.4" fill="none" stroke="#fff" stroke-opacity="0.92" stroke-width="1.7"/><rect x="1657.8" y="295.8" width="13.4" height="13.4" fill="none" stroke="#fff" stroke-opacity="0.92" stroke-width="1.7"/><rect x="1442.4" y="578.6" width="13.4" height="13.4" fill="none" stroke="#fff" stroke-opacity="0.92" stroke-width="1.7"/><rect x="1465.8" y="320.2" width="13.4" height="13.4" fill="none" stroke="#000" stroke-width="1.9"/><circle cx="1411.2" cy="252.2" r="4.1" fill="#00ff00" stroke="#111" stroke-opacity="0.9" stroke-width="1.4"/><circle cx="1415.8" cy="273.4" r="4.1" fill="#4a9a4a" stroke="#111" stroke-opacity="0.9" stroke-width="1.4"/><circle cx="1455.4" cy="263.5" r="4.1" fill="#a0bc48" stroke="#111" stroke-opacity="0.9" stroke-width="1.4"/><circle cx="1483.1" cy="259.0" r="4.1" fill="#ffff00" stroke="#111" stroke-opacity="0.9" stroke-width="1.4"/><circle cx="1504.0" cy="262.1" r="4.1" fill="#e8c820" stroke="#111" stroke-opacity="0.9" stroke-width="1.4"/><circle cx="1537.1" cy="266.2" r="4.1" fill="#e0a030" stroke="#111" stroke-opacity="0.9" stroke-width="1.4"/><circle cx="1581.5" cy="271.9" r="4.1" fill="#d87c30" stroke="#111" stroke-opacity="0.9" stroke-width="1.4"/><circle cx="1454.4" cy="286.9" r="4.1" fill="#566c44" stroke="#111" stroke-opacity="0.9" stroke-width="1.4"/><circle cx="1517.8" cy="300.6" r="4.1" fill="#70503e" stroke="#111" stroke-opacity="0.9" stroke-width="1.4"/><circle cx="1507.8" cy="306.0" r="4.1" fill="#c0907c" stroke="#111" stroke-opacity="0.9" stroke-width="1.4"/><circle cx="1601.0" cy="314.8" r="4.1" fill="#c0485c" stroke="#111" stroke-opacity="0.9" stroke-width="1.4"/><circle cx="1423.8" cy="318.5" r="4.1" fill="#68bca8" stroke="#111" stroke-opacity="0.9" stroke-width="1.4"/><circle cx="1415.8" cy="337.8" r="4.1" fill="#00ffff" stroke="#111" stroke-opacity="0.9" stroke-width="1.4"/><circle cx="1567.9" cy="361.5" r="4.1" fill="#b8509c" stroke="#111" stroke-opacity="0.9" stroke-width="1.4"/><circle cx="1417.1" cy="367.1" r="4.1" fill="#008ca0" stroke="#111" stroke-opacity="0.9" stroke-width="1.4"/><circle cx="1446.1" cy="367.1" r="4.1" fill="#6080a8" stroke="#111" stroke-opacity="0.9" stroke-width="1.4"/><circle cx="1468.2" cy="371.5" r="4.1" fill="#8880b8" stroke="#111" stroke-opacity="0.9" stroke-width="1.4"/><circle cx="1489.1" cy="394.8" r="4.1" fill="#5c3c68" stroke="#111" stroke-opacity="0.9" stroke-width="1.4"/><circle cx="1534.2" cy="406.9" r="4.1" fill="#ff00ff" stroke="#111" stroke-opacity="0.9" stroke-width="1.4"/><circle cx="1450.2" cy="418.1" r="4.1" fill="#5060a8" stroke="#111" stroke-opacity="0.9" stroke-width="1.4"/><circle cx="1451.6" cy="469.4" r="4.1" fill="#3c4498" stroke="#111" stroke-opacity="0.9" stroke-width="1.4"/><circle cx="1437.4" cy="494.4" r="4.1" fill="#0000ff" stroke="#111" stroke-opacity="0.9" stroke-width="1.4"/><circle cx="1673.0" cy="278.7" r="4.1" fill="#ff0000" stroke="#111" stroke-opacity="0.9" stroke-width="1.4"/><circle cx="1650.5" cy="298.0" r="4.1" fill="#b83848" stroke="#111" stroke-opacity="0.9" stroke-width="1.4"/><circle cx="1471.2" cy="325.9" r="4.1" fill="#a4a4a4" stroke="#111" stroke-opacity="0.9" stroke-width="1.4"/><circle cx="1463.75" cy="339.4" r="4.8" fill="#000"/><defs><linearGradient id="ig1" x1="0" y1="0.3" x2="1" y2="0"><stop offset="0" stop-color="#a428ff"/><stop offset="0.25" stop-color="#c818ff"/><stop offset="0.5" stop-color="#ff10ff"/><stop offset="0.75" stop-color="#ff08c8"/><stop offset="1" stop-color="#ff0894"/></linearGradient><linearGradient id="ig2"><stop offset="0" stop-color="#5c0098"/><stop offset="0.5" stop-color="#94009c"/><stop offset="1" stop-color="#a00068"/></linearGradient><radialGradient id="ig3" cx="0.5" cy="0" r="0.5" gradientTransform="translate(0.5 0) scale(0.8 1.3) translate(-0.5 0)"><stop offset="0" stop-color="#fff" stop-opacity="0.2"/><stop offset="1" stop-color="#fff" stop-opacity="0"/></radialGradient></defs><rect x="1700.7" y="542.5" width="200.8" height="132.0" fill="url(#ig1)"/><rect x="1700.7" y="542.5" width="200.8" height="132.0" fill="url(#ig3)"/><path d="M1700.7 644.9L1901.5 572V674.5H1700.7Z" fill="url(#ig2)"/><rect x="1700.7" y="542.5" width="200.8" height="132.0" fill="none" stroke="#a89aa8" stroke-width="1.6"/><rect x="1793.8" y="601.5" width="13.8" height="13.8" fill="none" stroke="#fff" stroke-width="1.4"/><circle cx="1796.6" cy="641" r="3.9" fill="#ffff00" stroke="#111" stroke-width="1.3"/><rect x="1649.4" y="684.8" width="256.2" height="27.5" fill="#323232"/></svg>
<span class="t" style="left:1522.94px;top:200.00px;font-size:14.80px;line-height:16.00px;color:#e4e4e4;">CIE 1976 u'v'</span>
<span class="t" style="left:1649.28px;top:688.00px;font-size:20.60px;line-height:23.00px;color:#fff;transform:scaleX(0.8767);">RGB</span>
<span class="t" style="left:1693.23px;top:688.00px;font-size:20.60px;line-height:23.00px;color:#fff;transform:scaleX(1.0549);">Triplet:</span>
<span class="t" style="left:1762.19px;top:688.00px;font-size:20.60px;line-height:23.00px;color:#fff;transform:scaleX(1.0080);">255, 255, 0</span>
<span class="t" style="left:1255.09px;top:726.00px;font-size:14.70px;line-height:16.00px;color:#e8e8e8;transform:scaleX(0.9800);">0</span>
<span class="t" style="left:1244.49px;top:713.00px;font-size:14.70px;line-height:16.00px;color:#e8e8e8;transform:scaleX(0.9800);">0</span>
<span class="t" style="left:1299.13px;top:726.00px;font-size:14.70px;line-height:16.00px;color:#e8e8e8;transform:scaleX(0.9800);">0.05</span>
<span class="t" style="left:1224.46px;top:671.00px;font-size:14.70px;line-height:16.00px;color:#e8e8e8;transform:scaleX(0.9800);">0.05</span>
<span class="t" style="left:1357.19px;top:726.00px;font-size:14.70px;line-height:16.00px;color:#e8e8e8;transform:scaleX(0.9800);">0.1</span>
<span class="t" style="left:1232.47px;top:629.00px;font-size:14.70px;line-height:16.00px;color:#e8e8e8;transform:scaleX(0.9800);">0.1</span>
<span class="t" style="left:1407.23px;top:726.00px;font-size:14.70px;line-height:16.00px;color:#e8e8e8;transform:scaleX(0.9800);">0.15</span>
<span class="t" style="left:1224.46px;top:587.00px;font-size:14.70px;line-height:16.00px;color:#e8e8e8;transform:scaleX(0.9800);">0.15</span>
<span class="t" style="left:1465.29px;top:726.00px;font-size:14.70px;line-height:16.00px;color:#e8e8e8;transform:scaleX(0.9800);">0.2</span>
<span class="t" style="left:1232.47px;top:546.00px;font-size:14.70px;line-height:16.00px;color:#e8e8e8;transform:scaleX(0.9800);">0.2</span>
<span class="t" style="left:1515.33px;top:726.00px;font-size:14.70px;line-height:16.00px;color:#e8e8e8;transform:scaleX(0.9800);">0.25</span>
<span class="t" style="left:1224.46px;top:504.00px;font-size:14.70px;line-height:16.00px;color:#e8e8e8;transform:scaleX(0.9800);">0.25</span>
<span class="t" style="left:1573.39px;top:726.00px;font-size:14.70px;line-height:16.00px;color:#e8e8e8;transform:scaleX(0.9800);">0.3</span>
<span class="t" style="left:1232.47px;top:462.00px;font-size:14.70px;line-height:16.00px;color:#e8e8e8;transform:scaleX(0.9800);">0.3</span>
<span class="t" style="left:1623.43px;top:726.00px;font-size:14.70px;line-height:16.00px;color:#e8e8e8;transform:scaleX(0.9800);">0.35</span>
<span class="t" style="left:1224.46px;top:420.00px;font-size:14.70px;line-height:16.00px;color:#e8e8e8;transform:scaleX(0.9800);">0.35</span>
<span class="t" style="left:1681.49px;top:726.00px;font-size:14.70px;line-height:16.00px;color:#e8e8e8;transform:scaleX(0.9800);">0.4</span>
<span class="t" style="left:1232.47px;top:379.00px;font-size:14.70px;line-height:16.00px;color:#e8e8e8;transform:scaleX(0.9800);">0.4</span>
<span class="t" style="left:1731.53px;top:726.00px;font-size:14.70px;line-height:16.00px;color:#e8e8e8;transform:scaleX(0.9800);">0.45</span>
<span class="t" style="left:1224.46px;top:337.00px;font-size:14.70px;line-height:16.00px;color:#e8e8e8;transform:scaleX(0.9800);">0.45</span>
<span class="t" style="left:1789.59px;top:726.00px;font-size:14.70px;line-height:16.00px;color:#e8e8e8;transform:scaleX(0.9800);">0.5</span>
<span class="t" style="left:1232.47px;top:295.00px;font-size:14.70px;line-height:16.00px;color:#e8e8e8;transform:scaleX(0.9800);">0.5</span>
<span class="t" style="left:1839.63px;top:726.00px;font-size:14.70px;line-height:16.00px;color:#e8e8e8;transform:scaleX(0.9800);">0.55</span>
<span class="t" style="left:1224.46px;top:253.00px;font-size:14.70px;line-height:16.00px;color:#e8e8e8;transform:scaleX(0.9800);">0.55</span>
<div style="left:551.20px;top:768.20px;width:1367.30px;height:230.50px;background:#1a1a1a"></div>
<div style="left:552.50px;top:769.50px;width:1364.50px;height:228.00px;overflow:hidden"><div style="left:0.00px;top:0.00px;width:1365.00px;height:24.30px;background:linear-gradient(#222 0,#1c1c1c 45%,#0a0a0a 50%,#0e0e0e 100%)"></div><div style="left:0.00px;top:24.25px;width:1365.00px;height:24.25px;background:#3d3d3d"></div><div style="left:0.00px;top:48.50px;width:1365.00px;height:23.25px;background:#848484"></div><div style="left:0.00px;top:71.75px;width:1365.00px;height:23.75px;background:#3d3d3d"></div><div style="left:0.00px;top:95.50px;width:1365.00px;height:23.75px;background:#848484"></div><div style="left:0.00px;top:119.25px;width:1365.00px;height:23.75px;background:#3d3d3d"></div><div style="left:0.00px;top:143.00px;width:1365.00px;height:23.25px;background:#848484"></div><div style="left:0.00px;top:166.25px;width:1365.00px;height:23.50px;background:#3d3d3d"></div><div style="left:0.00px;top:189.75px;width:1365.00px;height:24.00px;background:#848484"></div><div style="left:0.00px;top:213.75px;width:1365.00px;height:14.30px;background:#646464"></div><div style="left:21.20px;top:214.80px;width:658.00px;height:12.40px;background:#454545;border-radius:6.5px"></div><div style="left:1.00px;top:215.00px;width:17.50px;height:12.00px;background:#7e7e7e;border-radius:2.5px"></div><div style="left:1347.00px;top:215.00px;width:17.00px;height:12.00px;background:#7e7e7e;border-radius:2.5px"></div><svg style="left:6px;top:216.8px" width="8" height="9"><path d="M7 0.3v8.4l-6.4-4.2z" fill="#222"/></svg><svg style="left:1351.5px;top:216.8px" width="8" height="9"><path d="M1 0.3v8.4l6.4-4.2z" fill="#222"/></svg></div>
<div style="left:552.00px;top:769.00px;width:1365.00px;height:228.50px;overflow:hidden"><span class="t" style="left:174.25px;top:5.00px;font-size:14.00px;line-height:16.00px;color:#fff;transform:scaleX(1.3475);">White</span><span class="t" style="left:168.60px;top:30.00px;font-size:14.20px;line-height:16.00px;color:#fff;transform:scaleX(1.3065);-webkit-text-stroke:0.12px;">0.31</span><span class="t" style="left:168.61px;top:53.00px;font-size:14.20px;line-height:16.00px;color:#f2f2f2;transform:scaleX(1.2943);-webkit-text-stroke:0.12px;">0.33</span><span class="t" style="left:168.58px;top:77.00px;font-size:14.20px;line-height:16.00px;color:#fff;transform:scaleX(1.3427);-webkit-text-stroke:0.12px;">329.40</span><span class="t" style="left:168.60px;top:101.00px;font-size:14.20px;line-height:16.00px;color:#f2f2f2;transform:scaleX(1.3065);-webkit-text-stroke:0.12px;">0.31</span><span class="t" style="left:168.61px;top:124.00px;font-size:14.20px;line-height:16.00px;color:#fff;transform:scaleX(1.2943);-webkit-text-stroke:0.12px;">0.33</span><span class="t" style="left:168.58px;top:148.00px;font-size:14.20px;line-height:16.00px;color:#f2f2f2;transform:scaleX(1.3427);-webkit-text-stroke:0.12px;">329.40</span><span class="t" style="left:168.60px;top:171.00px;font-size:14.20px;line-height:16.00px;color:#fff;transform:scaleX(1.3065);-webkit-text-stroke:0.12px;">3.62</span><span class="t" style="left:168.61px;top:195.00px;font-size:14.20px;line-height:16.00px;color:#f2f2f2;transform:scaleX(1.2943);-webkit-text-stroke:0.12px;">2.55</span><span class="t" style="left:236.62px;top:5.00px;font-size:14.00px;line-height:16.00px;color:#fff;transform:scaleX(1.2564);">Gray 80</span><span class="t" style="left:236.60px;top:30.00px;font-size:14.20px;line-height:16.00px;color:#fff;transform:scaleX(1.3065);-webkit-text-stroke:0.12px;">0.31</span><span class="t" style="left:236.61px;top:53.00px;font-size:14.20px;line-height:16.00px;color:#f2f2f2;transform:scaleX(1.2943);-webkit-text-stroke:0.12px;">0.33</span><span class="t" style="left:236.58px;top:77.00px;font-size:14.20px;line-height:16.00px;color:#fff;transform:scaleX(1.3506);-webkit-text-stroke:0.12px;">256.92</span><span class="t" style="left:236.60px;top:101.00px;font-size:14.20px;line-height:16.00px;color:#f2f2f2;transform:scaleX(1.3065);-webkit-text-stroke:0.12px;">0.31</span><span class="t" style="left:236.61px;top:124.00px;font-size:14.20px;line-height:16.00px;color:#fff;transform:scaleX(1.2943);-webkit-text-stroke:0.12px;">0.33</span><span class="t" style="left:236.58px;top:148.00px;font-size:14.20px;line-height:16.00px;color:#f2f2f2;transform:scaleX(1.3427);-webkit-text-stroke:0.12px;">260.66</span><span class="t" style="left:236.60px;top:171.00px;font-size:14.20px;line-height:16.00px;color:#fff;transform:scaleX(1.3065);-webkit-text-stroke:0.12px;">2.71</span><span class="t" style="left:236.61px;top:195.00px;font-size:14.20px;line-height:16.00px;color:#f2f2f2;transform:scaleX(1.2943);-webkit-text-stroke:0.12px;">2.36</span><span class="t" style="left:308.37px;top:5.00px;font-size:14.00px;line-height:16.00px;color:#fff;transform:scaleX(1.2513);">Gray 65</span><span class="t" style="left:308.35px;top:30.00px;font-size:14.20px;line-height:16.00px;color:#fff;transform:scaleX(1.3065);-webkit-text-stroke:0.12px;">0.31</span><span class="t" style="left:308.36px;top:53.00px;font-size:14.20px;line-height:16.00px;color:#f2f2f2;transform:scaleX(1.2943);-webkit-text-stroke:0.12px;">0.33</span><span class="t" style="left:308.33px;top:77.00px;font-size:14.20px;line-height:16.00px;color:#fff;transform:scaleX(1.3506);-webkit-text-stroke:0.12px;">209.12</span><span class="t" style="left:308.35px;top:101.00px;font-size:14.20px;line-height:16.00px;color:#f2f2f2;transform:scaleX(1.3065);-webkit-text-stroke:0.12px;">0.31</span><span class="t" style="left:308.36px;top:124.00px;font-size:14.20px;line-height:16.00px;color:#fff;transform:scaleX(1.2943);-webkit-text-stroke:0.12px;">0.33</span><span class="t" style="left:308.33px;top:148.00px;font-size:14.20px;line-height:16.00px;color:#f2f2f2;transform:scaleX(1.3427);-webkit-text-stroke:0.12px;">210.03</span><span class="t" style="left:308.36px;top:171.00px;font-size:14.20px;line-height:16.00px;color:#fff;transform:scaleX(1.2943);-webkit-text-stroke:0.12px;">2.53</span><span class="t" style="left:308.35px;top:195.00px;font-size:14.20px;line-height:16.00px;color:#f2f2f2;transform:scaleX(1.3065);-webkit-text-stroke:0.12px;">2.07</span><span class="t" style="left:380.37px;top:5.00px;font-size:14.00px;line-height:16.00px;color:#fff;transform:scaleX(1.2564);">Gray 50</span><span class="t" style="left:380.35px;top:30.00px;font-size:14.20px;line-height:16.00px;color:#fff;transform:scaleX(1.3065);-webkit-text-stroke:0.12px;">0.31</span><span class="t" style="left:380.36px;top:53.00px;font-size:14.20px;line-height:16.00px;color:#f2f2f2;transform:scaleX(1.2943);-webkit-text-stroke:0.12px;">0.33</span><span class="t" style="left:379.64px;top:77.00px;font-size:14.20px;line-height:16.00px;color:#fff;transform:scaleX(1.3667);-webkit-text-stroke:0.12px;">160.52</span><span class="t" style="left:380.35px;top:101.00px;font-size:14.20px;line-height:16.00px;color:#f2f2f2;transform:scaleX(1.3065);-webkit-text-stroke:0.12px;">0.31</span><span class="t" style="left:380.36px;top:124.00px;font-size:14.20px;line-height:16.00px;color:#fff;transform:scaleX(1.2943);-webkit-text-stroke:0.12px;">0.33</span><span class="t" style="left:379.65px;top:148.00px;font-size:14.20px;line-height:16.00px;color:#f2f2f2;transform:scaleX(1.3506);-webkit-text-stroke:0.12px;">161.74</span><span class="t" style="left:380.36px;top:171.00px;font-size:14.20px;line-height:16.00px;color:#fff;transform:scaleX(1.2943);-webkit-text-stroke:0.12px;">2.38</span><span class="t" style="left:379.69px;top:195.00px;font-size:14.20px;line-height:16.00px;color:#f2f2f2;transform:scaleX(1.3189);-webkit-text-stroke:0.12px;">1.98</span><span class="t" style="left:451.87px;top:5.00px;font-size:14.00px;line-height:16.00px;color:#fff;transform:scaleX(1.2564);">Gray 35</span><span class="t" style="left:451.85px;top:30.00px;font-size:14.20px;line-height:16.00px;color:#fff;transform:scaleX(1.3065);-webkit-text-stroke:0.12px;">0.31</span><span class="t" style="left:451.86px;top:53.00px;font-size:14.20px;line-height:16.00px;color:#f2f2f2;transform:scaleX(1.2943);-webkit-text-stroke:0.12px;">0.33</span><span class="t" style="left:451.10px;top:77.00px;font-size:14.20px;line-height:16.00px;color:#fff;transform:scaleX(1.4086);-webkit-text-stroke:0.12px;">112.87</span><span class="t" style="left:451.85px;top:101.00px;font-size:14.20px;line-height:16.00px;color:#f2f2f2;transform:scaleX(1.3065);-webkit-text-stroke:0.12px;">0.31</span><span class="t" style="left:451.86px;top:124.00px;font-size:14.20px;line-height:16.00px;color:#fff;transform:scaleX(1.2943);-webkit-text-stroke:0.12px;">0.33</span><span class="t" style="left:451.10px;top:148.00px;font-size:14.20px;line-height:16.00px;color:#f2f2f2;transform:scaleX(1.4000);-webkit-text-stroke:0.12px;">112.63</span><span class="t" style="left:451.86px;top:171.00px;font-size:14.20px;line-height:16.00px;color:#fff;transform:scaleX(1.2943);-webkit-text-stroke:0.12px;">2.30</span><span class="t" style="left:451.85px;top:195.00px;font-size:14.20px;line-height:16.00px;color:#f2f2f2;transform:scaleX(1.3065);-webkit-text-stroke:0.12px;">2.07</span><span class="t" style="left:526.27px;top:5.00px;font-size:14.00px;line-height:16.00px;color:#fff;transform:scaleX(1.2313);">Black</span><span class="t" style="left:523.85px;top:30.00px;font-size:14.20px;line-height:16.00px;color:#fff;transform:scaleX(1.3065);-webkit-text-stroke:0.12px;">0.29</span><span class="t" style="left:523.85px;top:53.00px;font-size:14.20px;line-height:16.00px;color:#f2f2f2;transform:scaleX(1.3065);-webkit-text-stroke:0.12px;">0.31</span><span class="t" style="left:523.85px;top:77.00px;font-size:14.20px;line-height:16.00px;color:#fff;transform:scaleX(1.3065);-webkit-text-stroke:0.12px;">0.57</span><span class="t" style="left:523.85px;top:101.00px;font-size:14.20px;line-height:16.00px;color:#f2f2f2;transform:scaleX(1.3065);-webkit-text-stroke:0.12px;">0.31</span><span class="t" style="left:523.86px;top:124.00px;font-size:14.20px;line-height:16.00px;color:#fff;transform:scaleX(1.2943);-webkit-text-stroke:0.12px;">0.33</span><span class="t" style="left:523.86px;top:148.00px;font-size:14.20px;line-height:16.00px;color:#f2f2f2;transform:scaleX(1.2943);-webkit-text-stroke:0.12px;">0.00</span><span class="t" style="left:523.19px;top:171.00px;font-size:14.20px;line-height:16.00px;color:#fff;transform:scaleX(1.3189);-webkit-text-stroke:0.12px;">1.03</span><span class="t" style="left:523.83px;top:195.00px;font-size:14.20px;line-height:16.00px;color:#f2f2f2;transform:scaleX(1.3351);-webkit-text-stroke:0.12px;">88.77</span><span class="t" style="left:581.00px;top:5.00px;font-size:14.00px;line-height:16.00px;color:#fff;transform:scaleX(1.2542);">Dark Skin</span><span class="t" style="left:581.61px;top:30.00px;font-size:14.20px;line-height:16.00px;color:#fff;transform:scaleX(1.2943);-webkit-text-stroke:0.12px;">0.40</span><span class="t" style="left:581.60px;top:53.00px;font-size:14.20px;line-height:16.00px;color:#f2f2f2;transform:scaleX(1.3065);-webkit-text-stroke:0.12px;">0.37</span><span class="t" style="left:581.59px;top:77.00px;font-size:14.20px;line-height:16.00px;color:#fff;transform:scaleX(1.3255);-webkit-text-stroke:0.12px;">33.30</span><span class="t" style="left:581.61px;top:101.00px;font-size:14.20px;line-height:16.00px;color:#f2f2f2;transform:scaleX(1.2943);-webkit-text-stroke:0.12px;">0.40</span><span class="t" style="left:581.61px;top:124.00px;font-size:14.20px;line-height:16.00px;color:#fff;transform:scaleX(1.2943);-webkit-text-stroke:0.12px;">0.36</span><span class="t" style="left:581.59px;top:148.00px;font-size:14.20px;line-height:16.00px;color:#f2f2f2;transform:scaleX(1.3255);-webkit-text-stroke:0.12px;">33.18</span><span class="t" style="left:580.94px;top:171.00px;font-size:14.20px;line-height:16.00px;color:#fff;transform:scaleX(1.3189);-webkit-text-stroke:0.12px;">1.25</span><span class="t" style="left:581.60px;top:195.00px;font-size:14.20px;line-height:16.00px;color:#f2f2f2;transform:scaleX(1.3065);-webkit-text-stroke:0.12px;">2.91</span><span class="t" style="left:666.24px;top:5.00px;font-size:14.00px;line-height:16.00px;color:#fff;transform:scaleX(1.2636);">Light Skin</span><span class="t" style="left:666.86px;top:30.00px;font-size:14.20px;line-height:16.00px;color:#fff;transform:scaleX(1.2943);-webkit-text-stroke:0.12px;">0.38</span><span class="t" style="left:666.86px;top:53.00px;font-size:14.20px;line-height:16.00px;color:#f2f2f2;transform:scaleX(1.2943);-webkit-text-stroke:0.12px;">0.36</span><span class="t" style="left:666.11px;top:77.00px;font-size:14.20px;line-height:16.00px;color:#fff;transform:scaleX(1.3915);-webkit-text-stroke:0.12px;">113.94</span><span class="t" style="left:666.86px;top:101.00px;font-size:14.20px;line-height:16.00px;color:#f2f2f2;transform:scaleX(1.2943);-webkit-text-stroke:0.12px;">0.38</span><span class="t" style="left:666.86px;top:124.00px;font-size:14.20px;line-height:16.00px;color:#fff;transform:scaleX(1.2943);-webkit-text-stroke:0.12px;">0.36</span><span class="t" style="left:666.10px;top:148.00px;font-size:14.20px;line-height:16.00px;color:#f2f2f2;transform:scaleX(1.4000);-webkit-text-stroke:0.12px;">114.95</span><span class="t" style="left:666.19px;top:171.00px;font-size:14.20px;line-height:16.00px;color:#fff;transform:scaleX(1.3189);-webkit-text-stroke:0.12px;">1.40</span><span class="t" style="left:666.86px;top:195.00px;font-size:14.20px;line-height:16.00px;color:#f2f2f2;transform:scaleX(1.2943);-webkit-text-stroke:0.12px;">2.20</span><span class="t" style="left:753.02px;top:5.00px;font-size:14.00px;line-height:16.00px;color:#fff;transform:scaleX(1.2304);">Blue Sky</span><span class="t" style="left:753.61px;top:30.00px;font-size:14.20px;line-height:16.00px;color:#fff;transform:scaleX(1.2943);-webkit-text-stroke:0.12px;">0.25</span><span class="t" style="left:753.60px;top:53.00px;font-size:14.20px;line-height:16.00px;color:#f2f2f2;transform:scaleX(1.3065);-webkit-text-stroke:0.12px;">0.27</span><span class="t" style="left:753.59px;top:77.00px;font-size:14.20px;line-height:16.00px;color:#fff;transform:scaleX(1.3255);-webkit-text-stroke:0.12px;">60.73</span><span class="t" style="left:753.61px;top:101.00px;font-size:14.20px;line-height:16.00px;color:#f2f2f2;transform:scaleX(1.2943);-webkit-text-stroke:0.12px;">0.25</span><span class="t" style="left:753.60px;top:124.00px;font-size:14.20px;line-height:16.00px;color:#fff;transform:scaleX(1.3065);-webkit-text-stroke:0.12px;">0.27</span><span class="t" style="left:753.58px;top:148.00px;font-size:14.20px;line-height:16.00px;color:#f2f2f2;transform:scaleX(1.3351);-webkit-text-stroke:0.12px;">61.59</span><span class="t" style="left:752.92px;top:171.00px;font-size:14.20px;line-height:16.00px;color:#fff;transform:scaleX(1.3316);-webkit-text-stroke:0.12px;">1.17</span><span class="t" style="left:753.61px;top:195.00px;font-size:14.20px;line-height:16.00px;color:#f2f2f2;transform:scaleX(1.2943);-webkit-text-stroke:0.12px;">2.15</span><span class="t" style="left:830.49px;top:5.00px;font-size:14.00px;line-height:16.00px;color:#fff;transform:scaleX(1.2640);">Foliage</span><span class="t" style="left:831.11px;top:30.00px;font-size:14.20px;line-height:16.00px;color:#fff;transform:scaleX(1.2823);-webkit-text-stroke:0.12px;">0.34</span><span class="t" style="left:831.11px;top:53.00px;font-size:14.20px;line-height:16.00px;color:#f2f2f2;transform:scaleX(1.2943);-webkit-text-stroke:0.12px;">0.43</span><span class="t" style="left:831.42px;top:77.00px;font-size:14.20px;line-height:16.00px;color:#fff;transform:scaleX(1.3160);-webkit-text-stroke:0.12px;">42.40</span><span class="t" style="left:831.11px;top:101.00px;font-size:14.20px;line-height:16.00px;color:#f2f2f2;transform:scaleX(1.2823);-webkit-text-stroke:0.12px;">0.34</span><span class="t" style="left:831.11px;top:124.00px;font-size:14.20px;line-height:16.00px;color:#fff;transform:scaleX(1.2943);-webkit-text-stroke:0.12px;">0.43</span><span class="t" style="left:831.42px;top:148.00px;font-size:14.20px;line-height:16.00px;color:#f2f2f2;transform:scaleX(1.3160);-webkit-text-stroke:0.12px;">42.93</span><span class="t" style="left:831.11px;top:171.00px;font-size:14.20px;line-height:16.00px;color:#fff;transform:scaleX(1.2943);-webkit-text-stroke:0.12px;">0.45</span><span class="t" style="left:830.42px;top:195.00px;font-size:14.20px;line-height:16.00px;color:#f2f2f2;transform:scaleX(1.3316);-webkit-text-stroke:0.12px;">1.39</span><span class="t" style="left:897.45px;top:5.00px;font-size:14.00px;line-height:16.00px;color:#fff;transform:scaleX(1.2955);">Blue Flower</span><span class="t" style="left:898.10px;top:30.00px;font-size:14.20px;line-height:16.00px;color:#fff;transform:scaleX(1.3065);-webkit-text-stroke:0.12px;">0.27</span><span class="t" style="left:898.11px;top:53.00px;font-size:14.20px;line-height:16.00px;color:#f2f2f2;transform:scaleX(1.2943);-webkit-text-stroke:0.12px;">0.25</span><span class="t" style="left:898.08px;top:77.00px;font-size:14.20px;line-height:16.00px;color:#fff;transform:scaleX(1.3351);-webkit-text-stroke:0.12px;">76.12</span><span class="t" style="left:898.10px;top:101.00px;font-size:14.20px;line-height:16.00px;color:#f2f2f2;transform:scaleX(1.3065);-webkit-text-stroke:0.12px;">0.27</span><span class="t" style="left:898.11px;top:124.00px;font-size:14.20px;line-height:16.00px;color:#fff;transform:scaleX(1.2943);-webkit-text-stroke:0.12px;">0.25</span><span class="t" style="left:898.08px;top:148.00px;font-size:14.20px;line-height:16.00px;color:#f2f2f2;transform:scaleX(1.3351);-webkit-text-stroke:0.12px;">76.81</span><span class="t" style="left:898.11px;top:171.00px;font-size:14.20px;line-height:16.00px;color:#fff;transform:scaleX(1.2943);-webkit-text-stroke:0.12px;">0.65</span><span class="t" style="left:897.42px;top:195.00px;font-size:14.20px;line-height:16.00px;color:#f2f2f2;transform:scaleX(1.3316);-webkit-text-stroke:0.12px;">1.41</span><span class="t" style="left:1002.97px;top:5.00px;font-size:14.00px;line-height:16.00px;color:#fff;transform:scaleX(1.2776);">Bluish Green</span><span class="t" style="left:1003.61px;top:30.00px;font-size:14.20px;line-height:16.00px;color:#fff;transform:scaleX(1.2943);-webkit-text-stroke:0.12px;">0.26</span><span class="t" style="left:1003.61px;top:53.00px;font-size:14.20px;line-height:16.00px;color:#f2f2f2;transform:scaleX(1.2943);-webkit-text-stroke:0.12px;">0.36</span><span class="t" style="left:1002.90px;top:77.00px;font-size:14.20px;line-height:16.00px;color:#fff;transform:scaleX(1.3506);-webkit-text-stroke:0.12px;">136.74</span><span class="t" style="left:1003.61px;top:101.00px;font-size:14.20px;line-height:16.00px;color:#f2f2f2;transform:scaleX(1.2943);-webkit-text-stroke:0.12px;">0.26</span><span class="t" style="left:1003.61px;top:124.00px;font-size:14.20px;line-height:16.00px;color:#fff;transform:scaleX(1.2943);-webkit-text-stroke:0.12px;">0.36</span><span class="t" style="left:1002.90px;top:148.00px;font-size:14.20px;line-height:16.00px;color:#f2f2f2;transform:scaleX(1.3586);-webkit-text-stroke:0.12px;">137.93</span><span class="t" style="left:1003.61px;top:171.00px;font-size:14.20px;line-height:16.00px;color:#fff;transform:scaleX(1.2943);-webkit-text-stroke:0.12px;">0.68</span><span class="t" style="left:1002.94px;top:195.00px;font-size:14.20px;line-height:16.00px;color:#f2f2f2;transform:scaleX(1.3189);-webkit-text-stroke:0.12px;">1.86</span><span class="t" style="left:1115.62px;top:5.00px;font-size:14.00px;line-height:16.00px;color:#fff;transform:scaleX(1.2678);">Orange</span><span class="t" style="left:1115.60px;top:30.00px;font-size:14.20px;line-height:16.00px;color:#fff;transform:scaleX(1.3065);-webkit-text-stroke:0.12px;">0.51</span><span class="t" style="left:1115.60px;top:53.00px;font-size:14.20px;line-height:16.00px;color:#f2f2f2;transform:scaleX(1.3065);-webkit-text-stroke:0.12px;">0.41</span><span class="t" style="left:1115.59px;top:77.00px;font-size:14.20px;line-height:16.00px;color:#fff;transform:scaleX(1.3255);-webkit-text-stroke:0.12px;">92.45</span><span class="t" style="left:1115.60px;top:101.00px;font-size:14.20px;line-height:16.00px;color:#f2f2f2;transform:scaleX(1.3065);-webkit-text-stroke:0.12px;">0.51</span><span class="t" style="left:1115.60px;top:124.00px;font-size:14.20px;line-height:16.00px;color:#fff;transform:scaleX(1.3065);-webkit-text-stroke:0.12px;">0.41</span><span class="t" style="left:1115.59px;top:148.00px;font-size:14.20px;line-height:16.00px;color:#f2f2f2;transform:scaleX(1.3255);-webkit-text-stroke:0.12px;">93.38</span><span class="t" style="left:1115.60px;top:171.00px;font-size:14.20px;line-height:16.00px;color:#fff;transform:scaleX(1.3065);-webkit-text-stroke:0.12px;">0.82</span><span class="t" style="left:1115.61px;top:195.00px;font-size:14.20px;line-height:16.00px;color:#f2f2f2;transform:scaleX(1.2943);-webkit-text-stroke:0.12px;">2.23</span><span class="t" style="left:1184.21px;top:5.00px;font-size:14.00px;line-height:16.00px;color:#fff;transform:scaleX(1.2901);">Purplish Blue</span><span class="t" style="left:1184.85px;top:30.00px;font-size:14.20px;line-height:16.00px;color:#fff;transform:scaleX(1.3065);-webkit-text-stroke:0.12px;">0.22</span><span class="t" style="left:1184.86px;top:53.00px;font-size:14.20px;line-height:16.00px;color:#f2f2f2;transform:scaleX(1.2943);-webkit-text-stroke:0.12px;">0.20</span><span class="t" style="left:1184.84px;top:77.00px;font-size:14.20px;line-height:16.00px;color:#fff;transform:scaleX(1.3255);-webkit-text-stroke:0.12px;">39.06</span><span class="t" style="left:1184.85px;top:101.00px;font-size:14.20px;line-height:16.00px;color:#f2f2f2;transform:scaleX(1.3065);-webkit-text-stroke:0.12px;">0.22</span><span class="t" style="left:1184.85px;top:124.00px;font-size:14.20px;line-height:16.00px;color:#fff;transform:scaleX(1.3065);-webkit-text-stroke:0.12px;">0.19</span><span class="t" style="left:1184.83px;top:148.00px;font-size:14.20px;line-height:16.00px;color:#f2f2f2;transform:scaleX(1.3351);-webkit-text-stroke:0.12px;">38.72</span><span class="t" style="left:1184.86px;top:171.00px;font-size:14.20px;line-height:16.00px;color:#fff;transform:scaleX(1.2943);-webkit-text-stroke:0.12px;">0.65</span><span class="t" style="left:1184.19px;top:195.00px;font-size:14.20px;line-height:16.00px;color:#f2f2f2;transform:scaleX(1.3189);-webkit-text-stroke:0.12px;">1.63</span><span class="t" style="left:1301.00px;top:5.00px;font-size:14.00px;line-height:16.00px;color:#fff;transform:scaleX(1.2668);">Moderate Red</span><span class="t" style="left:1300.36px;top:30.00px;font-size:14.20px;line-height:16.00px;color:#fff;transform:scaleX(1.2943);-webkit-text-stroke:0.12px;">0.46</span><span class="t" style="left:1300.35px;top:53.00px;font-size:14.20px;line-height:16.00px;color:#f2f2f2;transform:scaleX(1.3065);-webkit-text-stroke:0.12px;">0.31</span><span class="t" style="left:1300.34px;top:77.00px;font-size:14.20px;line-height:16.00px;color:#fff;transform:scaleX(1.3255);-webkit-text-stroke:0.12px;">61.06</span><span class="t" style="left:1300.36px;top:101.00px;font-size:14.20px;line-height:16.00px;color:#f2f2f2;transform:scaleX(1.2943);-webkit-text-stroke:0.12px;">0.46</span><span class="t" style="left:1300.35px;top:124.00px;font-size:14.20px;line-height:16.00px;color:#fff;transform:scaleX(1.3065);-webkit-text-stroke:0.12px;">0.31</span><span class="t" style="left:1300.33px;top:148.00px;font-size:14.20px;line-height:16.00px;color:#f2f2f2;transform:scaleX(1.3351);-webkit-text-stroke:0.12px;">61.52</span><span class="t" style="left:1300.35px;top:171.00px;font-size:14.20px;line-height:16.00px;color:#fff;transform:scaleX(1.3065);-webkit-text-stroke:0.12px;">0.41</span><span class="t" style="left:1299.69px;top:195.00px;font-size:14.20px;line-height:16.00px;color:#f2f2f2;transform:scaleX(1.3189);-webkit-text-stroke:0.12px;">1.28</span><span class="t" style="left:16.00px;top:31.00px;font-size:13.60px;line-height:15.00px;color:#fff;font-weight:bold;transform:scaleX(1.3485);">x: CIE31</span><span class="t" style="left:16.00px;top:54.00px;font-size:13.60px;line-height:15.00px;color:#f2f2f2;font-weight:bold;transform:scaleX(1.3485);">y: CIE31</span><span class="t" style="left:16.00px;top:78.00px;font-size:13.60px;line-height:15.00px;color:#fff;font-weight:bold;transform:scaleX(1.2408);">Y</span><span class="t" style="left:16.00px;top:102.00px;font-size:13.60px;line-height:15.00px;color:#f2f2f2;font-weight:bold;transform:scaleX(1.3998);">Target x:CIE31</span><span class="t" style="left:16.00px;top:125.00px;font-size:13.60px;line-height:15.00px;color:#fff;font-weight:bold;transform:scaleX(1.3998);">Target y:CIE31</span><span class="t" style="left:16.00px;top:149.00px;font-size:13.60px;line-height:15.00px;color:#f2f2f2;font-weight:bold;transform:scaleX(1.4349);">Target Y</span><span class="t" style="left:15.27px;top:172.00px;font-size:13.60px;line-height:15.00px;color:#fff;font-weight:bold;transform:scaleX(1.4504);">ΔE 2000</span><span class="t" style="left:15.30px;top:196.00px;font-size:13.60px;line-height:15.00px;color:#f2f2f2;font-weight:bold;transform:scaleX(1.3816);">ΔE ITP</span></div>
<div style="left:226.00px;top:1076.00px;width:1329.60px;height:55.30px;overflow:hidden"><div style="left:-13.71px;top:0.30px;width:55.90px;height:54.70px;background:linear-gradient(#9c9c9c,#8a8a8a 45%,#6c6c6c);border-radius:4.5px;box-shadow:inset 0 1px 0 #b0b0b0"></div><div style="left:-7.81px;top:6.20px;width:44.70px;height:26.80px;background:#c99b86;border-radius:4px;box-shadow:inset 1.5px 1.5px 2px rgba(0,0,0,.35), inset -1px -1px 1px rgba(255,255,255,.12)"></div><span class="t" style="left:-13.46px;top:40.00px;font-size:11.60px;line-height:12.00px;color:#262626;font-weight:bold;transform:scaleX(0.9900);">Light Skin</span><div style="left:44.80px;top:0.30px;width:55.90px;height:54.70px;background:linear-gradient(#9c9c9c,#8a8a8a 45%,#6c6c6c);border-radius:4.5px;box-shadow:inset 0 1px 0 #b0b0b0"></div><div style="left:50.70px;top:6.20px;width:44.70px;height:26.80px;background:#5f7da3;border-radius:4px;box-shadow:inset 1.5px 1.5px 2px rgba(0,0,0,.35), inset -1px -1px 1px rgba(255,255,255,.12)"></div><span class="t" style="left:48.55px;top:40.00px;font-size:11.60px;line-height:12.00px;color:#262626;font-weight:bold;transform:scaleX(0.9900);">Blue Sky</span><div style="left:103.31px;top:0.30px;width:55.90px;height:54.70px;background:linear-gradient(#9c9c9c,#8a8a8a 45%,#6c6c6c);border-radius:4.5px;box-shadow:inset 0 1px 0 #b0b0b0"></div><div style="left:109.21px;top:6.20px;width:44.70px;height:26.80px;background:#566c42;border-radius:4px;box-shadow:inset 1.5px 1.5px 2px rgba(0,0,0,.35), inset -1px -1px 1px rgba(255,255,255,.12)"></div><span class="t" style="left:111.21px;top:40.00px;font-size:11.60px;line-height:12.00px;color:#262626;font-weight:bold;transform:scaleX(0.9900);">Foliage</span><div style="left:161.82px;top:0.30px;width:55.90px;height:54.70px;background:linear-gradient(#9c9c9c,#8a8a8a 45%,#6c6c6c);border-radius:4.5px;box-shadow:inset 0 1px 0 #b0b0b0"></div><div style="left:167.72px;top:6.20px;width:44.70px;height:13.00px;background:#8582b8;border-radius:5px;box-shadow:inset 1.5px 1.5px 2px rgba(0,0,0,.35), inset -1px -1px 1px rgba(255,255,255,.12)"></div><span class="t" style="left:171.32px;top:27.00px;font-size:11.60px;line-height:12.00px;color:#262626;font-weight:bold;transform:scaleX(0.9900);">Blue</span><span class="t" style="left:171.32px;top:40.00px;font-size:11.60px;line-height:12.00px;color:#262626;font-weight:bold;transform:scaleX(0.9900);">Flower</span><div style="left:220.33px;top:0.30px;width:55.90px;height:54.70px;background:linear-gradient(#9c9c9c,#8a8a8a 45%,#6c6c6c);border-radius:4.5px;box-shadow:inset 0 1px 0 #b0b0b0"></div><div style="left:226.23px;top:6.20px;width:44.70px;height:13.00px;background:#64c2ae;border-radius:5px;box-shadow:inset 1.5px 1.5px 2px rgba(0,0,0,.35), inset -1px -1px 1px rgba(255,255,255,.12)"></div><span class="t" style="left:230.79px;top:27.00px;font-size:11.60px;line-height:12.00px;color:#262626;font-weight:bold;transform:scaleX(0.9900);">Bluish</span><span class="t" style="left:230.79px;top:40.00px;font-size:11.60px;line-height:12.00px;color:#262626;font-weight:bold;transform:scaleX(0.9900);">Green</span><div style="left:278.84px;top:0.30px;width:55.90px;height:54.70px;background:linear-gradient(#9c9c9c,#8a8a8a 45%,#6c6c6c);border-radius:4.5px;box-shadow:inset 0 1px 0 #b0b0b0"></div><div style="left:284.74px;top:6.20px;width:44.70px;height:26.80px;background:#dd7a2a;border-radius:4px;box-shadow:inset 1.5px 1.5px 2px rgba(0,0,0,.35), inset -1px -1px 1px rgba(255,255,255,.12)"></div><span class="t" style="left:286.74px;top:40.00px;font-size:11.60px;line-height:12.00px;color:#262626;font-weight:bold;transform:scaleX(0.9900);">Orange</span><div style="left:337.35px;top:0.30px;width:55.90px;height:54.70px;background:linear-gradient(#9c9c9c,#8a8a8a 45%,#6c6c6c);border-radius:4.5px;box-shadow:inset 0 1px 0 #b0b0b0"></div><div style="left:343.25px;top:6.20px;width:44.70px;height:13.00px;background:#4a5aac;border-radius:5px;box-shadow:inset 1.5px 1.5px 2px rgba(0,0,0,.35), inset -1px -1px 1px rgba(255,255,255,.12)"></div><span class="t" style="left:342.38px;top:27.00px;font-size:11.60px;line-height:12.00px;color:#262626;font-weight:bold;transform:scaleX(0.9900);">Purplish</span><span class="t" style="left:342.38px;top:40.00px;font-size:11.60px;line-height:12.00px;color:#262626;font-weight:bold;transform:scaleX(0.9900);">Blue</span><div style="left:395.86px;top:0.30px;width:55.90px;height:54.70px;background:linear-gradient(#9c9c9c,#8a8a8a 45%,#6c6c6c);border-radius:4.5px;box-shadow:inset 0 1px 0 #b0b0b0"></div><div style="left:401.76px;top:6.20px;width:44.70px;height:13.00px;background:#cc5062;border-radius:5px;box-shadow:inset 1.5px 1.5px 2px rgba(0,0,0,.35), inset -1px -1px 1px rgba(255,255,255,.12)"></div><span class="t" style="left:397.06px;top:27.00px;font-size:11.60px;line-height:12.00px;color:#262626;font-weight:bold;transform:scaleX(0.9900);">Moderate</span><span class="t" style="left:397.06px;top:40.00px;font-size:11.60px;line-height:12.00px;color:#262626;font-weight:bold;transform:scaleX(0.9900);">Red</span><div style="left:454.37px;top:0.30px;width:55.90px;height:54.70px;background:linear-gradient(#9c9c9c,#8a8a8a 45%,#6c6c6c);border-radius:4.5px;box-shadow:inset 0 1px 0 #b0b0b0"></div><div style="left:460.27px;top:6.20px;width:44.70px;height:26.80px;background:#5c3a6c;border-radius:4px;box-shadow:inset 1.5px 1.5px 2px rgba(0,0,0,.35), inset -1px -1px 1px rgba(255,255,255,.12)"></div><span class="t" style="left:464.50px;top:40.00px;font-size:11.60px;line-height:12.00px;color:#262626;font-weight:bold;transform:scaleX(0.9900);">Purple</span><div style="left:512.88px;top:0.30px;width:55.90px;height:54.70px;background:linear-gradient(#9c9c9c,#8a8a8a 45%,#6c6c6c);border-radius:4.5px;box-shadow:inset 0 1px 0 #b0b0b0"></div><div style="left:518.78px;top:6.20px;width:44.70px;height:13.00px;background:#a6c240;border-radius:5px;box-shadow:inset 1.5px 1.5px 2px rgba(0,0,0,.35), inset -1px -1px 1px rgba(255,255,255,.12)"></div><span class="t" style="left:523.01px;top:27.00px;font-size:11.60px;line-height:12.00px;color:#262626;font-weight:bold;transform:scaleX(0.9900);">Yellow</span><span class="t" style="left:523.01px;top:40.00px;font-size:11.60px;line-height:12.00px;color:#262626;font-weight:bold;transform:scaleX(0.9900);">Green</span><div style="left:571.39px;top:0.30px;width:55.90px;height:54.70px;background:linear-gradient(#9c9c9c,#8a8a8a 45%,#6c6c6c);border-radius:4.5px;box-shadow:inset 0 1px 0 #b0b0b0"></div><div style="left:577.29px;top:6.20px;width:44.70px;height:13.00px;background:#f0a42c;border-radius:5px;box-shadow:inset 1.5px 1.5px 2px rgba(0,0,0,.35), inset -1px -1px 1px rgba(255,255,255,.12)"></div><span class="t" style="left:579.29px;top:27.00px;font-size:11.60px;line-height:12.00px;color:#262626;font-weight:bold;transform:scaleX(0.9900);">Orange</span><span class="t" style="left:579.29px;top:40.00px;font-size:11.60px;line-height:12.00px;color:#262626;font-weight:bold;transform:scaleX(0.9900);">Yellow</span><div style="left:629.90px;top:0.30px;width:55.90px;height:54.70px;background:linear-gradient(#9c9c9c,#8a8a8a 45%,#6c6c6c);border-radius:4.5px;box-shadow:inset 0 1px 0 #b0b0b0"></div><div style="left:635.80px;top:6.20px;width:44.70px;height:26.80px;background:#2c349c;border-radius:4px;box-shadow:inset 1.5px 1.5px 2px rgba(0,0,0,.35), inset -1px -1px 1px rgba(255,255,255,.12)"></div><span class="t" style="left:645.46px;top:40.00px;font-size:11.60px;line-height:12.00px;color:#262626;font-weight:bold;transform:scaleX(0.9900);">Blue</span><div style="left:688.41px;top:0.30px;width:55.90px;height:54.70px;background:linear-gradient(#9c9c9c,#8a8a8a 45%,#6c6c6c);border-radius:4.5px;box-shadow:inset 0 1px 0 #b0b0b0"></div><div style="left:694.31px;top:6.20px;width:44.70px;height:26.80px;background:#48984a;border-radius:4px;box-shadow:inset 1.5px 1.5px 2px rgba(0,0,0,.35), inset -1px -1px 1px rgba(255,255,255,.12)"></div><span class="t" style="left:699.82px;top:40.00px;font-size:11.60px;line-height:12.00px;color:#262626;font-weight:bold;transform:scaleX(0.9900);">Green</span><div style="left:746.92px;top:0.30px;width:55.90px;height:54.70px;background:linear-gradient(#9c9c9c,#8a8a8a 45%,#6c6c6c);border-radius:4.5px;box-shadow:inset 0 1px 0 #b0b0b0"></div><div style="left:752.82px;top:6.20px;width:44.70px;height:26.80px;background:#b62c38;border-radius:4px;box-shadow:inset 1.5px 1.5px 2px rgba(0,0,0,.35), inset -1px -1px 1px rgba(255,255,255,.12)"></div><span class="t" style="left:764.07px;top:40.00px;font-size:11.60px;line-height:12.00px;color:#262626;font-weight:bold;transform:scaleX(0.9900);">Red</span><div style="left:805.43px;top:0.30px;width:55.90px;height:54.70px;background:linear-gradient(#9c9c9c,#8a8a8a 45%,#6c6c6c);border-radius:4.5px;box-shadow:inset 0 1px 0 #b0b0b0"></div><div style="left:811.33px;top:6.20px;width:44.70px;height:26.80px;background:#f0cc1e;border-radius:4px;box-shadow:inset 1.5px 1.5px 2px rgba(0,0,0,.35), inset -1px -1px 1px rgba(255,255,255,.12)"></div><span class="t" style="left:815.56px;top:40.00px;font-size:11.60px;line-height:12.00px;color:#262626;font-weight:bold;transform:scaleX(0.9900);">Yellow</span><div style="left:863.94px;top:0.30px;width:55.90px;height:54.70px;background:linear-gradient(#9c9c9c,#8a8a8a 45%,#6c6c6c);border-radius:4.5px;box-shadow:inset 0 1px 0 #b0b0b0"></div><div style="left:869.84px;top:6.20px;width:44.70px;height:26.80px;background:#c0569c;border-radius:4px;box-shadow:inset 1.5px 1.5px 2px rgba(0,0,0,.35), inset -1px -1px 1px rgba(255,255,255,.12)"></div><span class="t" style="left:868.65px;top:40.00px;font-size:11.60px;line-height:12.00px;color:#262626;font-weight:bold;transform:scaleX(0.9900);">Magenta</span><div style="left:922.45px;top:0.30px;width:55.90px;height:54.70px;background:linear-gradient(#9c9c9c,#8a8a8a 45%,#6c6c6c);border-radius:4.5px;box-shadow:inset 0 1px 0 #b0b0b0"></div><div style="left:928.35px;top:6.20px;width:44.70px;height:26.80px;background:#0088a8;border-radius:4px;box-shadow:inset 1.5px 1.5px 2px rgba(0,0,0,.35), inset -1px -1px 1px rgba(255,255,255,.12)"></div><span class="t" style="left:936.41px;top:40.00px;font-size:11.60px;line-height:12.00px;color:#262626;font-weight:bold;transform:scaleX(0.9900);">Cyan</span><div style="left:980.96px;top:0.30px;width:55.90px;height:54.70px;background:linear-gradient(#9c9c9c,#8a8a8a 45%,#6c6c6c);border-radius:4.5px;box-shadow:inset 0 1px 0 #b0b0b0"></div><div style="left:986.86px;top:6.20px;width:44.70px;height:26.80px;background:#ff0000;border-radius:4px;box-shadow:inset 1.5px 1.5px 2px rgba(0,0,0,.35), inset -1px -1px 1px rgba(255,255,255,.12)"></div><span class="t" style="left:981.92px;top:40.00px;font-size:11.60px;line-height:12.00px;color:#262626;font-weight:bold;transform:scaleX(0.9867);">100% Red</span><div style="left:1039.47px;top:0.30px;width:55.90px;height:54.70px;background:linear-gradient(#9c9c9c,#8a8a8a 45%,#6c6c6c);border-radius:4.5px;box-shadow:inset 0 1px 0 #b0b0b0"></div><div style="left:1045.37px;top:6.20px;width:44.70px;height:13.00px;background:#00ff00;border-radius:5px;box-shadow:inset 1.5px 1.5px 2px rgba(0,0,0,.35), inset -1px -1px 1px rgba(255,255,255,.12)"></div><span class="t" style="left:1050.88px;top:27.00px;font-size:11.60px;line-height:12.00px;color:#262626;font-weight:bold;transform:scaleX(0.9900);">100%</span><span class="t" style="left:1050.88px;top:40.00px;font-size:11.60px;line-height:12.00px;color:#262626;font-weight:bold;transform:scaleX(0.9900);">Green</span><div style="left:1097.98px;top:0.30px;width:55.90px;height:54.70px;background:linear-gradient(#9c9c9c,#8a8a8a 45%,#6c6c6c);border-radius:4.5px;box-shadow:inset 0 1px 0 #b0b0b0"></div><div style="left:1103.88px;top:6.20px;width:44.70px;height:13.00px;background:#0000ff;border-radius:5px;box-shadow:inset 1.5px 1.5px 2px rgba(0,0,0,.35), inset -1px -1px 1px rgba(255,255,255,.12)"></div><span class="t" style="left:1111.30px;top:27.00px;font-size:11.60px;line-height:12.00px;color:#262626;font-weight:bold;transform:scaleX(0.9900);">100%</span><span class="t" style="left:1111.30px;top:40.00px;font-size:11.60px;line-height:12.00px;color:#262626;font-weight:bold;transform:scaleX(0.9900);">Blue</span><div style="left:1156.49px;top:0.30px;width:55.90px;height:54.70px;background:linear-gradient(#9c9c9c,#8a8a8a 45%,#6c6c6c);border-radius:4.5px;box-shadow:inset 0 1px 0 #b0b0b0"></div><div style="left:1162.39px;top:6.20px;width:44.70px;height:13.00px;background:#00ffff;border-radius:5px;box-shadow:inset 1.5px 1.5px 2px rgba(0,0,0,.35), inset -1px -1px 1px rgba(255,255,255,.12)"></div><span class="t" style="left:1169.81px;top:27.00px;font-size:11.60px;line-height:12.00px;color:#262626;font-weight:bold;transform:scaleX(0.9900);">100%</span><span class="t" style="left:1169.81px;top:40.00px;font-size:11.60px;line-height:12.00px;color:#262626;font-weight:bold;transform:scaleX(0.9900);">Cyan</span><div style="left:1215.00px;top:0.30px;width:55.90px;height:54.70px;background:linear-gradient(#9c9c9c,#8a8a8a 45%,#6c6c6c);border-radius:4.5px;box-shadow:inset 0 1px 0 #b0b0b0"></div><div style="left:1220.90px;top:6.20px;width:44.70px;height:13.00px;background:#ff00ff;border-radius:5px;box-shadow:inset 1.5px 1.5px 2px rgba(0,0,0,.35), inset -1px -1px 1px rgba(255,255,255,.12)"></div><span class="t" style="left:1218.50px;top:27.00px;font-size:11.60px;line-height:12.00px;color:#262626;font-weight:bold;transform:scaleX(0.9900);">100%</span><span class="t" style="left:1218.50px;top:40.00px;font-size:11.60px;line-height:12.00px;color:#262626;font-weight:bold;transform:scaleX(0.9900);">Magenta</span><div style="left:1273.51px;top:0.30px;width:55.90px;height:54.70px;background:linear-gradient(#1c1c1c,#262626 50%,#3c3c3c);border-radius:4.5px;box-shadow:inset 0 1px 0 #333"></div><div style="left:1279.41px;top:6.20px;width:44.70px;height:13.00px;background:#ffff00;border-radius:5px;box-shadow:inset 1.5px 1.5px 2px rgba(0,0,0,.35), inset -1px -1px 1px rgba(255,255,255,.12)"></div><span class="t" style="left:1283.64px;top:27.00px;font-size:11.60px;line-height:12.00px;color:#fff;font-weight:bold;transform:scaleX(0.9900);">100%</span><span class="t" style="left:1283.64px;top:40.00px;font-size:11.60px;line-height:12.00px;color:#fff;font-weight:bold;transform:scaleX(0.9900);">Yellow</span></div>
<div style="left:226.00px;top:1131.50px;width:1329.60px;height:14.50px;background:#5e5e5e"></div>
<div style="left:555.00px;top:1132.50px;width:984.00px;height:12.50px;background:#474747;border-radius:6.5px"></div>
<div style="left:227.50px;top:1132.70px;width:11.00px;height:11.00px;background:#8c8c8c;border-radius:2.5px"></div>
<div style="left:1543.30px;top:1132.70px;width:11.70px;height:11.00px;background:#8c8c8c;border-radius:2.5px"></div>
<svg style="left:229.5px;top:1134px" width="7" height="9"><path d="M6.3 0.3v8l-5.6-4z" fill="#222"/></svg>
<svg style="left:1546px;top:1134px" width="7" height="9"><path d="M0.7 0.3v8l5.6-4z" fill="#222"/></svg>
<div style="left:1557.50px;top:1076.30px;width:52.80px;height:20.30px;background:linear-gradient(#909090,#6c6c6c);border-radius:4px 4px 0 0"></div>
<div style="left:1574.50px;top:1077.50px;width:18.50px;height:18.50px;border-radius:50%;background:radial-gradient(circle at 50% 40%,#8a8a8a,#6a6a6a 75%)"></div>
<svg style="left:1578px;top:1082.5px" width="12" height="7"><path d="M0.6 6.4h10.4l-5.2-5.6z" fill="#2a2a2a"/></svg>
<div style="left:1557.50px;top:1097.70px;width:52.80px;height:48.30px;background:linear-gradient(#808080,#6a6a6a 50%,#5c5c5c)"></div>
<div style="left:1567.00px;top:1104.30px;width:33.30px;height:33.00px;border:2.2px solid #262626;border-radius:5.5px;background:linear-gradient(#a6a6a6,#989898 49%,#868686 51%,#8c8c8c)"></div>
<div style="left:1576.30px;top:1114.00px;width:15.00px;height:14.50px;background:linear-gradient(#1a1a1a,#0a0a0a 48%,#000 52%)"></div>
<div style="left:1612.60px;top:1076.30px;width:50.60px;height:33.90px;background:linear-gradient(#9e9e9e,#888 50%,#6e6e6e);border-radius:4px 0 0 0;"></div>
<div style="left:1627.80px;top:1077.50px;width:21.00px;height:21.00px;border-radius:50%;background:radial-gradient(circle at 50% 45%,#747474,#8a8a8a 75%)"></div>
<div style="left:1664.40px;top:1076.30px;width:50.00px;height:33.90px;background:linear-gradient(#9e9e9e,#888 50%,#6e6e6e);"></div>
<div style="left:1678.70px;top:1077.50px;width:21.00px;height:21.00px;border-radius:50%;background:radial-gradient(circle at 50% 45%,#747474,#8a8a8a 75%)"></div>
<div style="left:1715.60px;top:1076.30px;width:49.30px;height:33.90px;background:linear-gradient(#9e9e9e,#888 50%,#6e6e6e);"></div>
<div style="left:1729.50px;top:1077.50px;width:21.00px;height:21.00px;border-radius:50%;background:radial-gradient(circle at 50% 45%,#747474,#8a8a8a 75%)"></div>
<div style="left:1766.10px;top:1076.30px;width:49.50px;height:33.90px;background:linear-gradient(#9e9e9e,#888 50%,#6e6e6e);"></div>
<div style="left:1779.50px;top:1077.50px;width:21.00px;height:21.00px;border-radius:50%;background:radial-gradient(circle at 50% 45%,#747474,#8a8a8a 75%)"></div>
<div style="left:1816.80px;top:1076.30px;width:49.80px;height:33.90px;background:linear-gradient(#3c3c3c,#484848);"></div>
<div style="left:1830.70px;top:1077.50px;width:21.00px;height:21.00px;border-radius:50%;background:radial-gradient(circle at 50% 45%,#303030,#3e3e3e 75%)"></div>
<div style="left:1867.80px;top:1076.30px;width:49.60px;height:33.90px;background:linear-gradient(#9e9e9e,#888 50%,#6e6e6e);border-radius:0 4px 0 0;"></div>
<div style="left:1881.50px;top:1077.50px;width:21.00px;height:21.00px;border-radius:50%;background:radial-gradient(circle at 50% 45%,#747474,#8a8a8a 75%)"></div>
<svg style="left:1684px;top:1081px" width="12" height="14"><path d="M1.5 1v12l9-6z" fill="#2a2a2a"/></svg>
<span class="t" style="left:1732.67px;top:1081.00px;font-size:12.00px;line-height:14.00px;color:#2a2a2a;font-weight:bold;">[..]</span>
<span class="t" style="left:1783.94px;top:1078.00px;font-size:17.00px;line-height:19.00px;color:#2a2a2a;">∞</span>
<div style="left:1612.60px;top:1111.30px;width:152.30px;height:32.70px;background:linear-gradient(#a4a4a4,#8e8e8e 50%,#787878);border-radius:4px 0 0 4px"></div>
<div style="left:1766.10px;top:1111.30px;width:151.90px;height:32.70px;background:linear-gradient(#a4a4a4,#8e8e8e 50%,#787878);border-radius:0 4px 4px 0"></div>
<div style="left:1634.00px;top:1117.50px;width:22.00px;height:22.00px;border-radius:50%;background:radial-gradient(circle at 50% 45%,#808080,#949494 75%)"></div>
<div style="left:1876.50px;top:1117.50px;width:22.00px;height:22.00px;border-radius:50%;background:radial-gradient(circle at 50% 45%,#808080,#949494 75%)"></div>
<span class="t" style="left:1639.72px;top:1118.00px;font-size:19.00px;line-height:21.00px;color:#3a3a3a;">«</span>
<span class="t" style="left:1882.22px;top:1118.00px;font-size:19.00px;line-height:21.00px;color:#3a3a3a;">»</span>
<span class="t" style="left:1675.39px;top:1116.00px;font-size:21.60px;line-height:25.00px;color:#303030;transform:scaleX(1.2009);text-shadow:0 0 1.5px #444;">Back</span>
<span class="t" style="left:1794.82px;top:1116.00px;font-size:21.60px;line-height:25.00px;color:#303030;transform:scaleX(1.3537);text-shadow:0 0 1.5px #444;">Next</span>
<svg style="left:1620px;top:1076px" width="90" height="66" viewBox="1620 1076 90 66" fill="none" stroke-linejoin="round"><path d="M1630.8 1084L1673.3 1089.3L1669 1114.3L1635.8 1119.3Z M1635.8 1119.3L1655 1133.5L1696.7 1120L1669 1114.3" stroke="#fff" stroke-opacity=".35" stroke-width="5.2"/><path d="M1630.8 1084L1673.3 1089.3L1669 1114.3L1635.8 1119.3Z M1635.8 1119.3L1655 1133.5L1696.7 1120L1669 1114.3" stroke="#a03c48" stroke-opacity=".95" stroke-width="3.2"/><path d="M1642 1098L1653 1109.5L1673.5 1083.5" stroke="#fff" stroke-opacity=".5" stroke-width="6"/><path d="M1642 1098L1653 1109.5L1673.5 1083.5" stroke="#3a3a3a" stroke-width="3.6"/></svg>
<span class="t" style="left:1674.36px;top:1090.00px;font-size:23.40px;line-height:26.00px;color:#9e3a46;font-weight:bold;transform:scaleX(1.0980);text-shadow:0 0 2px rgba(255,255,255,.55),0 0 1px rgba(255,255,255,.6);-webkit-text-stroke:0.7px #9e3a46;">NOTEBOOK</span>
<span class="t" style="left:1821.41px;top:1090.00px;font-size:23.40px;line-height:26.00px;color:#3a3a3a;transform:scaleX(1.0948);text-shadow:0 0 2px rgba(255,255,255,.9),0 0 1px #fff;-webkit-text-stroke:0.4px #3a3a3a;">CHECK</span>
</div></body></html>
